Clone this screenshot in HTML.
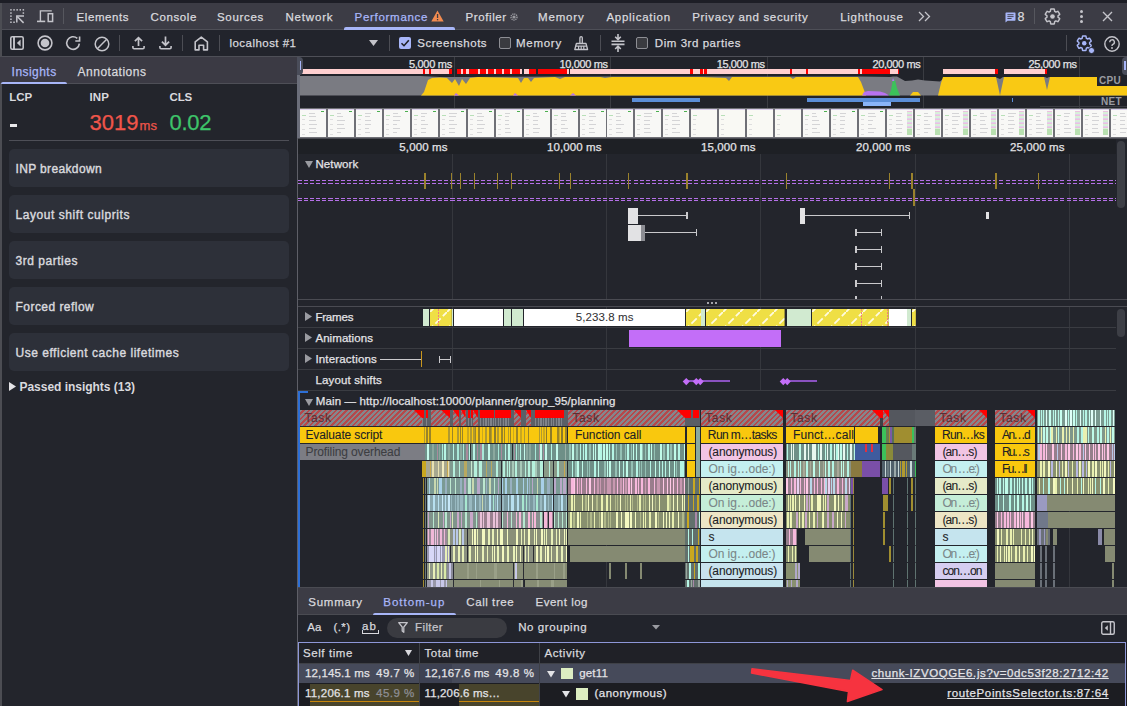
<!DOCTYPE html>
<html><head><meta charset="utf-8"><style>
html,body{margin:0;padding:0;width:1127px;height:706px;overflow:hidden;background:#23252c;}
body{position:relative;font-family:'Liberation Sans', sans-serif;}
div{position:absolute;box-sizing:border-box;}
.t{white-space:pre;line-height:1;-webkit-text-stroke:0.25px currentColor;}
svg{position:absolute;overflow:visible;}
</style></head><body>
<div style="left:0px;top:0px;width:1127px;height:3px;background:#1d1e26;"></div>
<div style="left:0px;top:3px;width:1127px;height:26px;background:#3c3c45;"></div>
<div style="left:0px;top:29px;width:1127px;height:1px;background:#4e4f57;"></div>
<div style="left:0px;top:30px;width:1127px;height:26px;background:#22242c;"></div>
<div style="left:0px;top:56px;width:1127px;height:1px;background:#4e4f57;"></div>
<div class="t" style="left:76.50px;top:12.07px;font-size:11.5px;color:#d9d9de;font-weight:normal;letter-spacing:0.595px;">Elements</div>
<div class="t" style="left:150.50px;top:12.07px;font-size:11.5px;color:#d9d9de;font-weight:normal;letter-spacing:0.614px;">Console</div>
<div class="t" style="left:217.00px;top:12.07px;font-size:11.5px;color:#d9d9de;font-weight:normal;letter-spacing:0.688px;">Sources</div>
<div class="t" style="left:285.40px;top:12.07px;font-size:11.5px;color:#d9d9de;font-weight:normal;letter-spacing:0.830px;">Network</div>
<div class="t" style="left:465.50px;top:12.07px;font-size:11.5px;color:#d9d9de;font-weight:normal;letter-spacing:0.608px;">Profiler</div>
<div class="t" style="left:538.00px;top:12.07px;font-size:11.5px;color:#d9d9de;font-weight:normal;letter-spacing:0.828px;">Memory</div>
<div class="t" style="left:606.40px;top:12.07px;font-size:11.5px;color:#d9d9de;font-weight:normal;letter-spacing:0.739px;">Application</div>
<div class="t" style="left:692.30px;top:12.07px;font-size:11.5px;color:#d9d9de;font-weight:normal;letter-spacing:0.655px;">Privacy and security</div>
<div class="t" style="left:840.20px;top:12.07px;font-size:11.5px;color:#d9d9de;font-weight:normal;letter-spacing:0.722px;">Lighthouse</div>
<div class="t" style="left:354.50px;top:12.07px;font-size:11.5px;color:#a8b6f8;font-weight:normal;letter-spacing:0.714px;">Performance</div>
<div style="left:344px;top:27px;width:111px;height:3px;background:#a8b6f8;border-radius:2px 2px 0 0;"></div>
<svg style="left:431px;top:10px" width="13" height="12" viewBox="0 0 13 12"><path d="M6.5 0.5 L12.7 11.5 L0.3 11.5 Z" fill="#f28b50"/><rect x="5.9" y="4" width="1.3" height="4" fill="#3b3b42"/><rect x="5.9" y="9" width="1.3" height="1.3" fill="#3b3b42"/></svg>
<svg style="left:510px;top:13px" width="8" height="8" viewBox="0 0 8 8"><circle cx="4" cy="4" r="3" fill="none" stroke="#9a9aa0" stroke-width="1.4" stroke-dasharray="1.2 0.8"/><circle cx="4" cy="4" r="1.6" fill="#9a9aa0"/></svg>
<svg style="left:918px;top:11px" width="13" height="11" viewBox="0 0 13 11"><path d="M1 1 L5.5 5.5 L1 10 M7 1 L11.5 5.5 L7 10" fill="none" stroke="#c4c4ca" stroke-width="1.3"/></svg>
<svg style="left:0;top:0" width="60" height="30" viewBox="0 0 60 30"><g fill="#c4c4ca"><rect x="10.20" y="9.10" width="1.5" height="1.5"/><rect x="13.30" y="9.10" width="1.5" height="1.5"/><rect x="16.40" y="9.10" width="1.5" height="1.5"/><rect x="19.50" y="9.10" width="1.5" height="1.5"/><rect x="22.60" y="9.10" width="1.5" height="1.5"/><rect x="10.20" y="12.30" width="1.5" height="1.5"/><rect x="22.60" y="12.30" width="1.5" height="1.5"/><rect x="10.20" y="15.40" width="1.5" height="1.5"/><rect x="10.20" y="18.50" width="1.5" height="1.5"/><rect x="10.20" y="21.50" width="1.5" height="1.5"/><rect x="13.30" y="21.50" width="1.5" height="1.5"/></g><path d="M16.8 22.6 V16.1 H24" fill="none" stroke="#c4c4ca" stroke-width="1.5"/><path d="M17.2 16.5 L23.6 22.9" stroke="#c4c4ca" stroke-width="1.5"/><path d="M51.8 10.9 H40.4 V21.4" fill="none" stroke="#c4c4ca" stroke-width="1.4"/><path d="M37 21.4 H45.2" stroke="#c4c4ca" stroke-width="1.6"/><rect x="48.2" y="13.7" width="4.4" height="7.8" fill="none" stroke="#c4c4ca" stroke-width="1.5"/></svg>
<div style="left:63px;top:8px;width:1px;height:16px;background:#56575e;"></div>
<svg style="left:1004.5px;top:12px" width="11" height="11" viewBox="0 0 11 11"><path d="M1.2 0.5 H9.8 Q10.5 0.5 10.5 1.2 V8 Q10.5 8.7 9.8 8.7 H2.6 L0.5 10.6 V1.2 Q0.5 0.5 1.2 0.5Z" fill="#a8b6f8"/><path d="M2.4 2.7 H8.6 M2.4 4.6 H8.6 M2.4 6.5 H6.6" stroke="#3c3c45" stroke-width="0.9"/></svg>
<div class="t" style="left:1017.50px;top:11.42px;font-size:12.5px;color:#d9d9de;font-weight:normal;letter-spacing:0.000px;">8</div>
<div style="left:1034px;top:8px;width:1px;height:16px;background:#56575e;"></div>
<svg style="left:1045.3px;top:8.8px" width="15" height="15" viewBox="2.3 2.3 19.4 19.4"><path d="M19.14,12.94c0.04-0.3,0.06-0.61,0.06-0.94c0-0.32-0.02-0.64-0.07-0.94l2.03-1.58c0.18-0.14,0.23-0.41,0.12-0.61l-1.92-3.32c-0.12-0.22-0.37-0.29-0.59-0.22l-2.39,0.96c-0.5-0.38-1.03-0.7-1.62-0.94L14.4,2.81c-0.04-0.24-0.24-0.41-0.48-0.41h-3.84c-0.24,0-0.43,0.17-0.47,0.41L9.25,5.35C8.66,5.59,8.12,5.92,7.63,6.29L5.24,5.33c-0.22-0.08-0.47,0-0.59,0.22L2.74,8.870C2.62,9.08,2.66,9.34,2.86,9.48l2.03,1.58C4.84,11.36,4.8,11.69,4.8,12s0.02,0.64,0.07,0.94l-2.03,1.58c-0.18,0.14-0.23,0.41-0.12,0.61l1.92,3.32c0.12,0.22,0.37,0.29,0.59,0.22l2.39-0.96c0.5,0.38,1.03,0.7,1.62,0.94l0.36,2.54c0.05,0.24,0.24,0.41,0.48,0.41h3.84c0.24,0,0.44-0.17,0.47-0.41l0.36-2.54c0.59-0.24,1.130-0.56,1.62-0.94l2.39,0.96c0.22,0.08,0.47,0,0.59-0.22l1.92-3.32c0.12-0.22,0.07-0.47-0.12-0.61L19.14,12.94z" fill="none" stroke="#c4c4ca" stroke-width="1.9" stroke-linejoin="round"/><circle cx="12" cy="12" r="3" fill="#c4c4ca"/></svg>
<div style="left:1079.5px;top:10px;width:3px;height:3px;background:#c4c4ca;border-radius:50%;"></div>
<div style="left:1079.5px;top:15px;width:3px;height:3px;background:#c4c4ca;border-radius:50%;"></div>
<div style="left:1079.5px;top:20px;width:3px;height:3px;background:#c4c4ca;border-radius:50%;"></div>
<svg style="left:1102px;top:11px" width="11" height="11" viewBox="0 0 11 11"><path d="M1 1 L10 10 M10 1 L1 10" stroke="#c4c4ca" stroke-width="1.4"/></svg>
<svg style="left:10px;top:36px" width="14" height="14" viewBox="0 0 14 14"><rect x="0.8" y="0.8" width="12.4" height="12.4" rx="1.5" fill="none" stroke="#c4c4ca" stroke-width="1.6"/><path d="M4 1 V13" stroke="#c4c4ca" stroke-width="1.9"/><path d="M10.6 3.6 L6.9 7 L10.6 10.4Z" fill="#c4c4ca"/></svg>
<svg style="left:37.3px;top:35.3px" width="16" height="16" viewBox="0 0 16 16"><circle cx="8" cy="8" r="6.9" fill="none" stroke="#c4c4ca" stroke-width="1.6"/><circle cx="8" cy="8" r="4.3" fill="#c4c4ca"/></svg>
<svg style="left:65px;top:35px" width="16" height="16" viewBox="0 0 16 16"><path d="M14.33 8.6 A6.3 6.3 0 1 1 12.3 3.4" fill="none" stroke="#c4c4ca" stroke-width="1.6"/><path d="M10.3 6 H14.6 V1.4" fill="none" stroke="#c4c4ca" stroke-width="1.6"/></svg>
<svg style="left:93.5px;top:35.5px" width="16" height="16" viewBox="0 0 16 16"><circle cx="8" cy="8" r="6.8" fill="none" stroke="#c4c4ca" stroke-width="1.5"/><path d="M3.3 12.7 L12.7 3.3" stroke="#c4c4ca" stroke-width="1.5"/></svg>
<div style="left:119px;top:35px;width:1px;height:16px;background:#4c4d54;"></div>
<svg style="left:132px;top:36px" width="13" height="14" viewBox="0 0 13 14"><path d="M6.5 10 V1.8 M2.9 5.2 L6.5 1.6 L10.1 5.2" fill="none" stroke="#c4c4ca" stroke-width="1.7"/><path d="M0.9 10 V11.6 Q0.9 12.8 2.1 12.8 H10.9 Q12.1 12.8 12.1 11.6 V10" fill="none" stroke="#c4c4ca" stroke-width="1.6"/></svg>
<svg style="left:158.8px;top:36px" width="13" height="14" viewBox="0 0 13 14"><path d="M6.5 0.6 V9 M2.9 5.6 L6.5 9.2 L10.1 5.6" fill="none" stroke="#c4c4ca" stroke-width="1.7"/><path d="M0.9 10 V11.6 Q0.9 12.8 2.1 12.8 H10.9 Q12.1 12.8 12.1 11.6 V10" fill="none" stroke="#c4c4ca" stroke-width="1.6"/></svg>
<div style="left:182px;top:35px;width:1px;height:16px;background:#4c4d54;"></div>
<svg style="left:194px;top:35.5px" width="15" height="15" viewBox="0 0 15 15"><path d="M1.2 13.9 V5.8 L7.3 1.1 L13.4 5.8 V13.9 H9.6 V9.2 H5 V13.9 Z" fill="none" stroke="#c4c4ca" stroke-width="1.6" stroke-linejoin="round"/></svg>
<div style="left:218.5px;top:35px;width:1px;height:16px;background:#4c4d54;"></div>
<div class="t" style="left:229.50px;top:38.17px;font-size:11.5px;color:#d9d9de;font-weight:normal;letter-spacing:0.460px;">localhost #1</div>
<svg style="left:369px;top:40px" width="9" height="6" viewBox="0 0 9 6"><path d="M0 0 H9 L4.5 6Z" fill="#c4c4ca"/></svg>
<div style="left:388.5px;top:35px;width:1px;height:16px;background:#4c4d54;"></div>
<svg style="left:399px;top:37px" width="12" height="12" viewBox="0 0 12 12"><rect x="0" y="0" width="12" height="12" rx="2" fill="#a8b6f8"/><path d="M2.5 6.2 L5 8.7 L9.8 3.2" fill="none" stroke="#1e1f25" stroke-width="1.6"/></svg>
<div class="t" style="left:417.20px;top:38.17px;font-size:11.5px;color:#d9d9de;font-weight:normal;letter-spacing:0.551px;">Screenshots</div>
<div style="left:498.5px;top:37px;width:12px;height:12px;background:#3a3b40;border:1.3px solid #8d8e94;border-radius:2px;"></div>
<div class="t" style="left:516.00px;top:38.17px;font-size:11.5px;color:#d9d9de;font-weight:normal;letter-spacing:0.728px;">Memory</div>
<svg style="left:574px;top:36px" width="15" height="15" viewBox="0 0 15 15"><path d="M5.9 7.3 V1.7 Q5.9 0.6 7.1 0.6 Q8.3 0.6 8.3 1.7 V7.3" fill="none" stroke="#c4c4ca" stroke-width="1.3"/><path d="M2.4 7.5 H12 L13.6 13.5 H0.8 Z" fill="none" stroke="#c4c4ca" stroke-width="1.3" stroke-linejoin="round"/><path d="M1.6 10.2 H12.8 M4.6 10.4 V13.4 M7.2 10.4 V13.4 M9.8 10.4 V13.4" stroke="#c4c4ca" stroke-width="1.2"/></svg>
<div style="left:599.5px;top:35px;width:1px;height:16px;background:#4c4d54;"></div>
<svg style="left:610.5px;top:34px" width="14" height="18" viewBox="0 0 14 18"><path d="M0.5 7.2 H13.5 M0.5 10.4 H13.5" stroke="#c4c4ca" stroke-width="1.6"/><path d="M7 0 V5.2 M4.2 2.8 L7 5.6 L9.8 2.8 M7 18 V12.4 M4.2 15 L7 12.2 L9.8 15" fill="none" stroke="#c4c4ca" stroke-width="1.6"/></svg>
<div style="left:636px;top:37px;width:12px;height:12px;background:#3a3b40;border:1.3px solid #8d8e94;border-radius:2px;"></div>
<div class="t" style="left:654.80px;top:38.17px;font-size:11.5px;color:#d9d9de;font-weight:normal;letter-spacing:0.549px;">Dim 3rd parties</div>
<div style="left:1066px;top:35px;width:1px;height:16px;background:#4c4d54;"></div>
<svg style="left:1077.3px;top:35.8px" width="14.5" height="14.5" viewBox="2.3 2.3 19.4 19.4"><path d="M19.14,12.94c0.04-0.3,0.06-0.61,0.06-0.94c0-0.32-0.02-0.64-0.07-0.94l2.03-1.58c0.18-0.14,0.23-0.41,0.12-0.61l-1.92-3.32c-0.12-0.22-0.37-0.29-0.59-0.22l-2.39,0.96c-0.5-0.38-1.03-0.7-1.62-0.94L14.4,2.81c-0.04-0.24-0.24-0.41-0.48-0.41h-3.84c-0.24,0-0.43,0.17-0.47,0.41L9.25,5.35C8.66,5.59,8.12,5.92,7.63,6.29L5.24,5.33c-0.22-0.08-0.47,0-0.59,0.22L2.74,8.870C2.62,9.08,2.66,9.34,2.86,9.48l2.03,1.58C4.84,11.36,4.8,11.69,4.8,12s0.02,0.64,0.07,0.94l-2.03,1.58c-0.18,0.14-0.23,0.41-0.12,0.61l1.92,3.32c0.12,0.22,0.37,0.29,0.59,0.22l2.39-0.96c0.5,0.38,1.03,0.7,1.62,0.94l0.36,2.54c0.05,0.24,0.24,0.41,0.48,0.41h3.84c0.24,0,0.44-0.17,0.47-0.41l0.36-2.54c0.59-0.24,1.130-0.56,1.62-0.94l2.39,0.96c0.22,0.08,0.47,0,0.59-0.22l1.92-3.32c0.12-0.22,0.07-0.47-0.12-0.61L19.14,12.94z" fill="none" stroke="#a8b6f8" stroke-width="1.9" stroke-linejoin="round"/><circle cx="12" cy="12" r="3" fill="#a8b6f8"/></svg>
<div style="left:1088.3px;top:47.3px;width:6.5px;height:6.5px;background:#a8b6f8;border-radius:50%;border:1.2px solid #22242c;"></div>
<svg style="left:1103.5px;top:35.5px" width="16" height="16" viewBox="0 0 16 16"><circle cx="8" cy="8" r="7.2" fill="none" stroke="#c4c4ca" stroke-width="1.4"/><path d="M5.8 6.2 A2.3 2.3 0 1 1 8.8 8.3 C8.1 8.6 8 9 8 10" fill="none" stroke="#c4c4ca" stroke-width="1.4"/><circle cx="8" cy="12" r="0.9" fill="#c4c4ca"/></svg>
<div style="left:0px;top:3px;width:1.5px;height:703px;background:#4c4d53;"></div>
<div style="left:0px;top:57px;width:297px;height:26px;background:#3b3a44;"></div>
<div style="left:0px;top:83px;width:297px;height:1px;background:#4e4f57;"></div>
<div class="t" style="left:11.60px;top:65.84px;font-size:12px;color:#a8b6f8;font-weight:normal;letter-spacing:0.455px;">Insights</div>
<div style="left:1px;top:82px;width:66px;height:2px;background:#a8b6f8;border-radius:2px 2px 0 0;"></div>
<div class="t" style="left:77.60px;top:65.84px;font-size:12px;color:#d9d9de;font-weight:normal;letter-spacing:0.492px;">Annotations</div>
<div class="t" style="left:9.30px;top:91.87px;font-size:11.5px;color:#d9d9de;font-weight:bold;letter-spacing:-0.100px;-webkit-text-stroke:0;">LCP</div>
<div class="t" style="left:89.50px;top:91.87px;font-size:11.5px;color:#d9d9de;font-weight:bold;letter-spacing:0.109px;-webkit-text-stroke:0;">INP</div>
<div class="t" style="left:169.50px;top:91.87px;font-size:11.5px;color:#d9d9de;font-weight:bold;letter-spacing:-0.167px;-webkit-text-stroke:0;">CLS</div>
<div style="left:9.5px;top:123.5px;width:7px;height:3.5px;background:#e8e8ea;"></div>
<div class="t" style="left:89.50px;top:111.68px;font-size:22px;color:#f0554a;font-weight:normal;letter-spacing:0.012px;">3019</div>
<div class="t" style="left:139.40px;top:119.30px;font-size:13px;color:#f0554a;font-weight:normal;letter-spacing:0.228px;">ms</div>
<div class="t" style="left:169.50px;top:111.68px;font-size:22px;color:#3ec46a;font-weight:normal;letter-spacing:-0.257px;">0.02</div>
<div style="left:9px;top:140px;width:280px;height:1px;background:#4e4f57;"></div>
<div style="left:9px;top:149px;width:280px;height:38px;background:#2d3039;border-radius:5px;"></div>
<div class="t" style="left:15.50px;top:162.84px;font-size:12px;color:#d9d9de;font-weight:normal;letter-spacing:0.359px;-webkit-text-stroke:0.4px currentColor;">INP breakdown</div>
<div style="left:9px;top:195px;width:280px;height:38px;background:#2d3039;border-radius:5px;"></div>
<div class="t" style="left:15.50px;top:208.84px;font-size:12px;color:#d9d9de;font-weight:normal;letter-spacing:0.561px;-webkit-text-stroke:0.4px currentColor;">Layout shift culprits</div>
<div style="left:9px;top:241px;width:280px;height:38px;background:#2d3039;border-radius:5px;"></div>
<div class="t" style="left:15.50px;top:254.84px;font-size:12px;color:#d9d9de;font-weight:normal;letter-spacing:0.527px;-webkit-text-stroke:0.4px currentColor;">3rd parties</div>
<div style="left:9px;top:287px;width:280px;height:38px;background:#2d3039;border-radius:5px;"></div>
<div class="t" style="left:15.50px;top:300.84px;font-size:12px;color:#d9d9de;font-weight:normal;letter-spacing:0.461px;-webkit-text-stroke:0.4px currentColor;">Forced reflow</div>
<div style="left:9px;top:333px;width:280px;height:38px;background:#2d3039;border-radius:5px;"></div>
<div class="t" style="left:15.50px;top:346.84px;font-size:12px;color:#d9d9de;font-weight:normal;letter-spacing:0.524px;-webkit-text-stroke:0.4px currentColor;">Use efficient cache lifetimes</div>
<svg style="left:9px;top:381.5px" width="7" height="9" viewBox="0 0 7 9"><path d="M0 0 L7 4.5 L0 9Z" fill="#e3e3e6"/></svg>
<div class="t" style="left:19.50px;top:381.14px;font-size:12px;color:#d9d9de;font-weight:bold;letter-spacing:-0.027px;-webkit-text-stroke:0;">Passed insights (13)</div>
<div style="left:297px;top:57px;width:1.5px;height:649px;background:#5e5f67;"></div>
<div style="left:298px;top:57px;width:829px;height:81px;background:#21232a;"></div>
<div style="left:454px;top:57px;width:1px;height:81px;background:#3a3c42;"></div>
<div style="left:610px;top:57px;width:1px;height:81px;background:#3a3c42;"></div>
<div style="left:767px;top:57px;width:1px;height:81px;background:#3a3c42;"></div>
<div style="left:923px;top:57px;width:1px;height:81px;background:#3a3c42;"></div>
<div style="left:1079px;top:57px;width:1px;height:81px;background:#3a3c42;"></div>
<div class="t" style="left:408.90px;top:58.69px;font-size:11px;color:#e3e3e6;font-weight:normal;letter-spacing:-0.281px;">5,000 ms</div>
<div class="t" style="left:559.60px;top:58.69px;font-size:11px;color:#e3e3e6;font-weight:normal;letter-spacing:-0.375px;">10,000 ms</div>
<div class="t" style="left:716.70px;top:58.69px;font-size:11px;color:#e3e3e6;font-weight:normal;letter-spacing:-0.375px;">15,000 ms</div>
<div class="t" style="left:872.40px;top:58.69px;font-size:11px;color:#e3e3e6;font-weight:normal;letter-spacing:-0.375px;">20,000 ms</div>
<div class="t" style="left:1028.60px;top:58.69px;font-size:11px;color:#e3e3e6;font-weight:normal;letter-spacing:-0.375px;">25,000 ms</div>
<div style="left:302px;top:69px;width:150px;height:5px;background:#ffd0d0;"></div>
<div style="left:422.6px;top:69px;width:2.6999999999999886px;height:5px;background:#ff0000;"></div>
<div style="left:428.7px;top:69px;width:2.6999999999999886px;height:5px;background:#ff0000;"></div>
<div style="left:449px;top:69px;width:3px;height:5px;background:#ff0000;"></div>
<div style="left:457px;top:69px;width:65px;height:5px;background:#ffd0d0;"></div>
<div style="left:457px;top:69px;width:4px;height:5px;background:#ff0000;"></div>
<div style="left:463px;top:69px;width:3px;height:5px;background:#ff0000;"></div>
<div style="left:469px;top:69px;width:9px;height:5px;background:#ff0000;"></div>
<div style="left:480px;top:69px;width:6px;height:5px;background:#ff0000;"></div>
<div style="left:488px;top:69px;width:6px;height:5px;background:#ff0000;"></div>
<div style="left:496px;top:69px;width:6px;height:5px;background:#ff0000;"></div>
<div style="left:504px;top:69px;width:6px;height:5px;background:#ff0000;"></div>
<div style="left:512px;top:69px;width:8px;height:5px;background:#ff0000;"></div>
<div style="left:524px;top:69px;width:12px;height:5px;background:#ffd0d0;"></div>
<div style="left:529px;top:69px;width:7px;height:5px;background:#ff0000;"></div>
<div style="left:538px;top:69px;width:31px;height:5px;background:#ffd0d0;"></div>
<div style="left:538px;top:69px;width:29px;height:5px;background:#ff0000;"></div>
<div style="left:570px;top:69px;width:288px;height:5px;background:#ffd0d0;"></div>
<div style="left:690px;top:69px;width:3px;height:5px;background:#ff0000;"></div>
<div style="left:700px;top:69px;width:3px;height:5px;background:#ff0000;"></div>
<div style="left:704px;top:69px;width:3px;height:5px;background:#ff0000;"></div>
<div style="left:790px;top:69px;width:2px;height:5px;background:#ff0000;"></div>
<div style="left:806px;top:69px;width:2px;height:5px;background:#ff0000;"></div>
<div style="left:858px;top:69px;width:41px;height:5px;background:#ffd0d0;"></div>
<div style="left:858px;top:69px;width:2px;height:5px;background:#ff0000;"></div>
<div style="left:862px;top:69px;width:28px;height:5px;background:#ff0000;"></div>
<div style="left:898px;top:69px;width:1px;height:5px;background:#ff0000;"></div>
<div style="left:943px;top:69px;width:55px;height:5px;background:#ffd0d0;"></div>
<div style="left:995px;top:69px;width:3px;height:5px;background:#ff0000;"></div>
<div style="left:1004px;top:69px;width:43px;height:5px;background:#ffd0d0;"></div>
<div style="left:1045px;top:69px;width:2px;height:5px;background:#ff0000;"></div>
<svg style="left:298px;top:57px" width="829" height="81" viewBox="0 0 829 81"><polygon points="2.0,19.0 122.0,19.0 142.0,20.0 172.0,20.0 302.0,19.5 462.0,19.5 560.0,19.5 592.0,20.0 595.0,19.5 599.0,19.5 607.0,24.0 614.0,23.5 620.0,22.5 627.0,23.5 642.0,24.5 647.0,20.0 697.0,20.0 702.0,22.0 705.0,20.0 747.0,20.0 749.0,21.0 751.0,20.0 829.0,20.0 829.0,38.5 2.0,38.5" fill="#7a7b82"/></svg>
<svg style="left:298px;top:57px" width="829" height="81" viewBox="0 0 829 81"><polygon points="123.0,38.5 126.0,35.0 130.0,23.0 134.0,21.0 142.0,20.5 149.0,21.0 154.0,26.0 157.0,22.0 161.0,29.0 164.0,22.0 168.0,27.0 172.0,21.0 180.0,20.0 220.0,21.0 223.0,26.0 226.0,21.0 230.0,21.0 233.0,25.0 236.0,21.0 257.0,20.0 262.0,22.0 267.0,20.0 302.0,20.0 307.0,21.0 314.0,20.0 402.0,20.0 428.0,21.0 431.0,24.0 434.0,20.0 492.0,20.0 495.0,22.0 498.0,20.0 560.0,20.0 563.0,25.0 566.0,33.0 568.0,38.5" fill="#f9c914"/></svg>
<svg style="left:298px;top:57px" width="829" height="81" viewBox="0 0 829 81"><polygon points="640.0,38.5 643.0,26.0 645.0,20.0 698.0,20.0 700.0,29.0 702.0,38.5 704.0,29.0 706.0,20.0 746.0,20.0 749.0,33.0 752.0,20.0 829.0,20.0 829.0,38.5" fill="#f9c914"/></svg>
<svg style="left:298px;top:57px" width="829" height="81" viewBox="0 0 829 81"><polygon points="564.0,38.5 566.0,35.0 570.0,34.0 582.0,34.5 587.0,36.0 591.0,38.5" fill="#b872f0"/></svg>
<svg style="left:298px;top:57px" width="829" height="81" viewBox="0 0 829 81"><polygon points="591.0,38.5 593.0,33.0 595.0,22.0 597.0,23.0 599.0,31.0 602.0,38.5" fill="#3cc15a"/></svg>
<svg style="left:298px;top:57px" width="829" height="81" viewBox="0 0 829 81"><polygon points="594.0,24.0 595.0,21.0 596.5,24.0" fill="#b872f0"/></svg>
<svg style="left:298px;top:57px" width="829" height="81" viewBox="0 0 829 81"><polygon points="612.0,38.5 615.0,35.0 620.0,35.0 623.0,38.5" fill="#f9c914"/></svg>
<svg style="left:298px;top:57px" width="829" height="81" viewBox="0 0 829 81"><polygon points="156.0,38.5 158.0,36.0 161.0,38.5" fill="#b872f0"/></svg>
<svg style="left:298px;top:57px" width="829" height="81" viewBox="0 0 829 81"><polygon points="215.0,38.5 217.0,36.0 220.0,38.5" fill="#b872f0"/></svg>
<svg style="left:298px;top:57px" width="829" height="81" viewBox="0 0 829 81"><polygon points="272.0,38.5 275.0,36.0 278.0,38.5" fill="#b872f0"/></svg>
<div style="left:1097px;top:76px;width:30px;height:9.5px;background:#21232a;"></div>
<div class="t" style="left:1099.00px;top:76.03px;font-size:10px;color:#9a9ba1;font-weight:bold;letter-spacing:0.292px;-webkit-text-stroke:0;">CPU</div>
<div style="left:632px;top:98px;width:68px;height:4px;background:#5b8ed8;"></div>
<div style="left:807px;top:98px;width:113px;height:4px;background:#5b8ed8;"></div>
<div style="left:863px;top:102px;width:28px;height:3.7px;background:#8ab4f8;"></div>
<div style="left:1012px;top:98px;width:1px;height:4px;background:#5b8ed8;"></div>
<div style="left:1040px;top:106px;width:87px;height:1px;background:#3a3c42;"></div>
<div class="t" style="left:1101.00px;top:97.03px;font-size:10px;color:#9a9ba1;font-weight:bold;letter-spacing:0.333px;-webkit-text-stroke:0;">NET</div>
<div style="left:298px;top:108px;width:829px;height:30px;background:#6f7076;"></div>
<div style="left:300.0px;top:108.5px;width:26px;height:28.5px;background:#f8f8f6;"></div>
<div style="left:300.0px;top:108.5px;width:26px;height:1px;background:#d8cdea;"></div>
<div style="left:302.0px;top:115px;width:4px;height:1px;background:#b8e0b8;"></div>
<div style="left:302.0px;top:119px;width:3px;height:1px;background:#dedede;"></div>
<div style="left:302.0px;top:124px;width:3px;height:1px;background:#dedede;"></div>
<div style="left:302.0px;top:129px;width:3px;height:1px;background:#dedede;"></div>
<div style="left:302.0px;top:134px;width:3px;height:1px;background:#dedede;"></div>
<div style="left:309.0px;top:112.5px;width:6.491606779558808px;height:1px;background:#d4d4d6;"></div>
<div style="left:309.0px;top:116.3px;width:6.967147957042918px;height:1px;background:#d4d4d6;"></div>
<div style="left:309.0px;top:120.1px;width:7.180774262262787px;height:1px;background:#d4d4d6;"></div>
<div style="left:309.0px;top:123.9px;width:7.769801135108201px;height:1px;background:#d4d4d6;"></div>
<div style="left:309.0px;top:127.7px;width:6.959594298959723px;height:1px;background:#d4d4d6;"></div>
<div style="left:309.0px;top:131.5px;width:7.689299986661668px;height:1px;background:#d4d4d6;"></div>
<div style="left:321.0px;top:110.5px;width:3px;height:1.5px;background:#4caf50;"></div>
<div style="left:327.95px;top:108.5px;width:26px;height:28.5px;background:#f8f8f6;"></div>
<div style="left:327.95px;top:108.5px;width:26px;height:1px;background:#d8cdea;"></div>
<div style="left:329.95px;top:115px;width:4px;height:1px;background:#b8e0b8;"></div>
<div style="left:329.95px;top:119px;width:3px;height:1px;background:#dedede;"></div>
<div style="left:329.95px;top:124px;width:3px;height:1px;background:#dedede;"></div>
<div style="left:329.95px;top:129px;width:3px;height:1px;background:#dedede;"></div>
<div style="left:329.95px;top:134px;width:3px;height:1px;background:#dedede;"></div>
<div style="left:336.95px;top:112.5px;width:4.116020913134459px;height:1px;background:#d4d4d6;"></div>
<div style="left:336.95px;top:116.3px;width:5.862490617512421px;height:1px;background:#d4d4d6;"></div>
<div style="left:336.95px;top:120.1px;width:7.773426867993255px;height:1px;background:#d4d4d6;"></div>
<div style="left:336.95px;top:123.9px;width:6.595898212547697px;height:1px;background:#d4d4d6;"></div>
<div style="left:336.95px;top:127.7px;width:7.603601967002491px;height:1px;background:#d4d4d6;"></div>
<div style="left:336.95px;top:131.5px;width:4.452823858612577px;height:1px;background:#d4d4d6;"></div>
<div style="left:348.95px;top:110.5px;width:3px;height:1.5px;background:#4caf50;"></div>
<div style="left:355.9px;top:108.5px;width:26px;height:28.5px;background:#f8f8f6;"></div>
<div style="left:355.9px;top:108.5px;width:26px;height:1px;background:#d8cdea;"></div>
<div style="left:357.9px;top:115px;width:4px;height:1px;background:#b8e0b8;"></div>
<div style="left:357.9px;top:119px;width:3px;height:1px;background:#dedede;"></div>
<div style="left:357.9px;top:124px;width:3px;height:1px;background:#dedede;"></div>
<div style="left:357.9px;top:129px;width:3px;height:1px;background:#dedede;"></div>
<div style="left:357.9px;top:134px;width:3px;height:1px;background:#dedede;"></div>
<div style="left:364.9px;top:112.5px;width:5.876276191128655px;height:1px;background:#d4d4d6;"></div>
<div style="left:364.9px;top:116.3px;width:4.986291330479322px;height:1px;background:#d4d4d6;"></div>
<div style="left:364.9px;top:120.1px;width:6.175043436943722px;height:1px;background:#d4d4d6;"></div>
<div style="left:364.9px;top:123.9px;width:6.295764751712403px;height:1px;background:#d4d4d6;"></div>
<div style="left:364.9px;top:127.7px;width:4.052456758355609px;height:1px;background:#d4d4d6;"></div>
<div style="left:364.9px;top:131.5px;width:4.866919201855392px;height:1px;background:#d4d4d6;"></div>
<div style="left:376.9px;top:110.5px;width:3px;height:1.5px;background:#4caf50;"></div>
<div style="left:383.85px;top:108.5px;width:26px;height:28.5px;background:#f8f8f6;"></div>
<div style="left:383.85px;top:108.5px;width:26px;height:1px;background:#d8cdea;"></div>
<div style="left:385.85px;top:115px;width:4px;height:1px;background:#b8e0b8;"></div>
<div style="left:385.85px;top:119px;width:3px;height:1px;background:#dedede;"></div>
<div style="left:385.85px;top:124px;width:3px;height:1px;background:#dedede;"></div>
<div style="left:385.85px;top:129px;width:3px;height:1px;background:#dedede;"></div>
<div style="left:385.85px;top:134px;width:3px;height:1px;background:#dedede;"></div>
<div style="left:392.85px;top:112.5px;width:5.117929464044441px;height:1px;background:#d4d4d6;"></div>
<div style="left:392.85px;top:116.3px;width:7.665381487234208px;height:1px;background:#d4d4d6;"></div>
<div style="left:392.85px;top:120.1px;width:7.062901806516567px;height:1px;background:#d4d4d6;"></div>
<div style="left:392.85px;top:123.9px;width:4.6384168494321525px;height:1px;background:#d4d4d6;"></div>
<div style="left:392.85px;top:127.7px;width:7.1885879657248175px;height:1px;background:#d4d4d6;"></div>
<div style="left:392.85px;top:131.5px;width:4.555069673595613px;height:1px;background:#d4d4d6;"></div>
<div style="left:404.85px;top:110.5px;width:3px;height:1.5px;background:#4caf50;"></div>
<div style="left:411.8px;top:108.5px;width:26px;height:28.5px;background:#f8f8f6;"></div>
<div style="left:411.8px;top:108.5px;width:26px;height:1px;background:#d8cdea;"></div>
<div style="left:413.8px;top:115px;width:4px;height:1px;background:#b8e0b8;"></div>
<div style="left:413.8px;top:119px;width:3px;height:1px;background:#dedede;"></div>
<div style="left:413.8px;top:124px;width:3px;height:1px;background:#dedede;"></div>
<div style="left:413.8px;top:129px;width:3px;height:1px;background:#dedede;"></div>
<div style="left:413.8px;top:134px;width:3px;height:1px;background:#dedede;"></div>
<div style="left:420.8px;top:112.5px;width:6.469810081864466px;height:1px;background:#d4d4d6;"></div>
<div style="left:420.8px;top:116.3px;width:4.506796930201078px;height:1px;background:#d4d4d6;"></div>
<div style="left:420.8px;top:120.1px;width:4.007099448810139px;height:1px;background:#d4d4d6;"></div>
<div style="left:420.8px;top:123.9px;width:7.485618978897128px;height:1px;background:#d4d4d6;"></div>
<div style="left:420.8px;top:127.7px;width:4.8378255299804716px;height:1px;background:#d4d4d6;"></div>
<div style="left:420.8px;top:131.5px;width:4.861924676898929px;height:1px;background:#d4d4d6;"></div>
<div style="left:432.8px;top:110.5px;width:3px;height:1.5px;background:#4caf50;"></div>
<div style="left:439.75px;top:108.5px;width:26px;height:28.5px;background:#f8f8f6;"></div>
<div style="left:439.75px;top:108.5px;width:26px;height:1px;background:#d8cdea;"></div>
<div style="left:441.75px;top:115px;width:4px;height:1px;background:#b8e0b8;"></div>
<div style="left:441.75px;top:119px;width:3px;height:1px;background:#dedede;"></div>
<div style="left:441.75px;top:124px;width:3px;height:1px;background:#dedede;"></div>
<div style="left:441.75px;top:129px;width:3px;height:1px;background:#dedede;"></div>
<div style="left:441.75px;top:134px;width:3px;height:1px;background:#dedede;"></div>
<div style="left:448.75px;top:112.5px;width:7.929684435303701px;height:1px;background:#d4d4d6;"></div>
<div style="left:448.75px;top:116.3px;width:7.4896310617472075px;height:1px;background:#d4d4d6;"></div>
<div style="left:448.75px;top:120.1px;width:5.157220670987706px;height:1px;background:#d4d4d6;"></div>
<div style="left:448.75px;top:123.9px;width:7.845911955800334px;height:1px;background:#d4d4d6;"></div>
<div style="left:448.75px;top:127.7px;width:6.1568938754832425px;height:1px;background:#d4d4d6;"></div>
<div style="left:448.75px;top:131.5px;width:6.711321909002369px;height:1px;background:#d4d4d6;"></div>
<div style="left:460.75px;top:110.5px;width:3px;height:1.5px;background:#4caf50;"></div>
<div style="left:467.7px;top:108.5px;width:26px;height:28.5px;background:#f8f8f6;"></div>
<div style="left:467.7px;top:108.5px;width:26px;height:1px;background:#d8cdea;"></div>
<div style="left:469.7px;top:115px;width:4px;height:1px;background:#b8e0b8;"></div>
<div style="left:469.7px;top:119px;width:3px;height:1px;background:#dedede;"></div>
<div style="left:469.7px;top:124px;width:3px;height:1px;background:#dedede;"></div>
<div style="left:469.7px;top:129px;width:3px;height:1px;background:#dedede;"></div>
<div style="left:469.7px;top:134px;width:3px;height:1px;background:#dedede;"></div>
<div style="left:476.7px;top:112.5px;width:4.819118058135171px;height:1px;background:#d4d4d6;"></div>
<div style="left:476.7px;top:116.3px;width:7.763904004351996px;height:1px;background:#d4d4d6;"></div>
<div style="left:476.7px;top:120.1px;width:6.762567764427633px;height:1px;background:#d4d4d6;"></div>
<div style="left:476.7px;top:123.9px;width:7.866257249268782px;height:1px;background:#d4d4d6;"></div>
<div style="left:476.7px;top:127.7px;width:7.5749667103059135px;height:1px;background:#d4d4d6;"></div>
<div style="left:476.7px;top:131.5px;width:5.195155591415471px;height:1px;background:#d4d4d6;"></div>
<div style="left:488.7px;top:110.5px;width:3px;height:1.5px;background:#4caf50;"></div>
<div style="left:495.65px;top:108.5px;width:26px;height:28.5px;background:#f8f8f6;"></div>
<div style="left:495.65px;top:108.5px;width:26px;height:1px;background:#d8cdea;"></div>
<div style="left:497.65px;top:115px;width:4px;height:1px;background:#b8e0b8;"></div>
<div style="left:497.65px;top:119px;width:3px;height:1px;background:#dedede;"></div>
<div style="left:497.65px;top:124px;width:3px;height:1px;background:#dedede;"></div>
<div style="left:497.65px;top:129px;width:3px;height:1px;background:#dedede;"></div>
<div style="left:497.65px;top:134px;width:3px;height:1px;background:#dedede;"></div>
<div style="left:504.65px;top:112.5px;width:5.444759738889537px;height:1px;background:#d4d4d6;"></div>
<div style="left:504.65px;top:116.3px;width:4.663824228518982px;height:1px;background:#d4d4d6;"></div>
<div style="left:504.65px;top:120.1px;width:4.5828076381627305px;height:1px;background:#d4d4d6;"></div>
<div style="left:504.65px;top:123.9px;width:4.260558853502705px;height:1px;background:#d4d4d6;"></div>
<div style="left:504.65px;top:127.7px;width:5.20543640307785px;height:1px;background:#d4d4d6;"></div>
<div style="left:504.65px;top:131.5px;width:6.4124399896306175px;height:1px;background:#d4d4d6;"></div>
<div style="left:516.65px;top:110.5px;width:3px;height:1.5px;background:#4caf50;"></div>
<div style="left:523.6px;top:108.5px;width:26px;height:28.5px;background:#f8f8f6;"></div>
<div style="left:523.6px;top:108.5px;width:26px;height:1px;background:#d8cdea;"></div>
<div style="left:525.6px;top:115px;width:4px;height:1px;background:#b8e0b8;"></div>
<div style="left:525.6px;top:119px;width:3px;height:1px;background:#dedede;"></div>
<div style="left:525.6px;top:124px;width:3px;height:1px;background:#dedede;"></div>
<div style="left:525.6px;top:129px;width:3px;height:1px;background:#dedede;"></div>
<div style="left:525.6px;top:134px;width:3px;height:1px;background:#dedede;"></div>
<div style="left:532.6px;top:112.5px;width:4.013532477497427px;height:1px;background:#d4d4d6;"></div>
<div style="left:532.6px;top:116.3px;width:6.711736998190765px;height:1px;background:#d4d4d6;"></div>
<div style="left:532.6px;top:120.1px;width:5.351587446511461px;height:1px;background:#d4d4d6;"></div>
<div style="left:532.6px;top:123.9px;width:5.239831726412515px;height:1px;background:#d4d4d6;"></div>
<div style="left:532.6px;top:127.7px;width:7.274072298588283px;height:1px;background:#d4d4d6;"></div>
<div style="left:532.6px;top:131.5px;width:5.922980746520156px;height:1px;background:#d4d4d6;"></div>
<div style="left:544.6px;top:110.5px;width:3px;height:1.5px;background:#4caf50;"></div>
<div style="left:551.55px;top:108.5px;width:26px;height:28.5px;background:#f8f8f6;"></div>
<div style="left:551.55px;top:108.5px;width:26px;height:1px;background:#d8cdea;"></div>
<div style="left:553.55px;top:115px;width:4px;height:1px;background:#b8e0b8;"></div>
<div style="left:553.55px;top:119px;width:3px;height:1px;background:#dedede;"></div>
<div style="left:553.55px;top:124px;width:3px;height:1px;background:#dedede;"></div>
<div style="left:553.55px;top:129px;width:3px;height:1px;background:#dedede;"></div>
<div style="left:553.55px;top:134px;width:3px;height:1px;background:#dedede;"></div>
<div style="left:560.55px;top:112.5px;width:5.263172423385776px;height:1px;background:#d4d4d6;"></div>
<div style="left:560.55px;top:116.3px;width:5.924873544947456px;height:1px;background:#d4d4d6;"></div>
<div style="left:560.55px;top:120.1px;width:6.818676536563637px;height:1px;background:#d4d4d6;"></div>
<div style="left:560.55px;top:123.9px;width:4.22800371814316px;height:1px;background:#d4d4d6;"></div>
<div style="left:560.55px;top:127.7px;width:7.900398252576942px;height:1px;background:#d4d4d6;"></div>
<div style="left:560.55px;top:131.5px;width:4.091462253010883px;height:1px;background:#d4d4d6;"></div>
<div style="left:572.55px;top:110.5px;width:3px;height:1.5px;background:#4caf50;"></div>
<div style="left:579.5px;top:108.5px;width:26px;height:28.5px;background:#f8f8f6;"></div>
<div style="left:579.5px;top:108.5px;width:26px;height:1px;background:#d8cdea;"></div>
<div style="left:581.5px;top:115px;width:4px;height:1px;background:#b8e0b8;"></div>
<div style="left:581.5px;top:119px;width:3px;height:1px;background:#dedede;"></div>
<div style="left:581.5px;top:124px;width:3px;height:1px;background:#dedede;"></div>
<div style="left:581.5px;top:129px;width:3px;height:1px;background:#dedede;"></div>
<div style="left:581.5px;top:134px;width:3px;height:1px;background:#dedede;"></div>
<div style="left:588.5px;top:112.5px;width:6.999180089165093px;height:1px;background:#d4d4d6;"></div>
<div style="left:588.5px;top:116.3px;width:7.379523557552519px;height:1px;background:#d4d4d6;"></div>
<div style="left:588.5px;top:120.1px;width:4.072270141514121px;height:1px;background:#d4d4d6;"></div>
<div style="left:588.5px;top:123.9px;width:7.150953215921737px;height:1px;background:#d4d4d6;"></div>
<div style="left:588.5px;top:127.7px;width:5.464737903367443px;height:1px;background:#d4d4d6;"></div>
<div style="left:588.5px;top:131.5px;width:6.314075316227498px;height:1px;background:#d4d4d6;"></div>
<div style="left:600.5px;top:110.5px;width:3px;height:1.5px;background:#4caf50;"></div>
<div style="left:607.45px;top:108.5px;width:26px;height:28.5px;background:#f8f8f6;"></div>
<div style="left:607.45px;top:108.5px;width:26px;height:1px;background:#d8cdea;"></div>
<div style="left:609.45px;top:115px;width:4px;height:1px;background:#b8e0b8;"></div>
<div style="left:609.45px;top:119px;width:3px;height:1px;background:#dedede;"></div>
<div style="left:609.45px;top:124px;width:3px;height:1px;background:#dedede;"></div>
<div style="left:609.45px;top:129px;width:3px;height:1px;background:#dedede;"></div>
<div style="left:609.45px;top:134px;width:3px;height:1px;background:#dedede;"></div>
<div style="left:616.45px;top:112.5px;width:4.036313547278114px;height:1px;background:#d4d4d6;"></div>
<div style="left:616.45px;top:116.3px;width:4.186908474795766px;height:1px;background:#d4d4d6;"></div>
<div style="left:616.45px;top:120.1px;width:4.723677951804191px;height:1px;background:#d4d4d6;"></div>
<div style="left:616.45px;top:123.9px;width:7.820719598364665px;height:1px;background:#d4d4d6;"></div>
<div style="left:616.45px;top:127.7px;width:4.786086682052033px;height:1px;background:#d4d4d6;"></div>
<div style="left:616.45px;top:131.5px;width:7.022945649805271px;height:1px;background:#d4d4d6;"></div>
<div style="left:628.45px;top:110.5px;width:3px;height:1.5px;background:#4caf50;"></div>
<div style="left:635.4px;top:108.5px;width:26px;height:28.5px;background:#f8f8f6;"></div>
<div style="left:635.4px;top:108.5px;width:26px;height:1px;background:#d8cdea;"></div>
<div style="left:637.4px;top:115px;width:4px;height:1px;background:#b8e0b8;"></div>
<div style="left:637.4px;top:119px;width:3px;height:1px;background:#dedede;"></div>
<div style="left:637.4px;top:124px;width:3px;height:1px;background:#dedede;"></div>
<div style="left:637.4px;top:129px;width:3px;height:1px;background:#dedede;"></div>
<div style="left:637.4px;top:134px;width:3px;height:1px;background:#dedede;"></div>
<div style="left:644.4px;top:112.5px;width:7.718621278390085px;height:1px;background:#d4d4d6;"></div>
<div style="left:644.4px;top:116.3px;width:7.7681753177107975px;height:1px;background:#d4d4d6;"></div>
<div style="left:644.4px;top:120.1px;width:5.377527252212047px;height:1px;background:#d4d4d6;"></div>
<div style="left:644.4px;top:123.9px;width:5.419172820231649px;height:1px;background:#d4d4d6;"></div>
<div style="left:644.4px;top:127.7px;width:6.09880728277248px;height:1px;background:#d4d4d6;"></div>
<div style="left:644.4px;top:131.5px;width:7.102412058795981px;height:1px;background:#d4d4d6;"></div>
<div style="left:656.4px;top:110.5px;width:3px;height:1.5px;background:#4caf50;"></div>
<div style="left:663.3499999999999px;top:108.5px;width:26px;height:28.5px;background:#f8f8f6;"></div>
<div style="left:663.3499999999999px;top:108.5px;width:26px;height:1px;background:#d8cdea;"></div>
<div style="left:665.3499999999999px;top:115px;width:4px;height:1px;background:#b8e0b8;"></div>
<div style="left:665.3499999999999px;top:119px;width:3px;height:1px;background:#dedede;"></div>
<div style="left:665.3499999999999px;top:124px;width:3px;height:1px;background:#dedede;"></div>
<div style="left:665.3499999999999px;top:129px;width:3px;height:1px;background:#dedede;"></div>
<div style="left:665.3499999999999px;top:134px;width:3px;height:1px;background:#dedede;"></div>
<div style="left:672.3499999999999px;top:112.5px;width:4.432211476259331px;height:1px;background:#d4d4d6;"></div>
<div style="left:672.3499999999999px;top:116.3px;width:6.993592225938652px;height:1px;background:#d4d4d6;"></div>
<div style="left:672.3499999999999px;top:120.1px;width:7.188906710365331px;height:1px;background:#d4d4d6;"></div>
<div style="left:672.3499999999999px;top:123.9px;width:7.43877727675032px;height:1px;background:#d4d4d6;"></div>
<div style="left:672.3499999999999px;top:127.7px;width:4.14652631977131px;height:1px;background:#d4d4d6;"></div>
<div style="left:672.3499999999999px;top:131.5px;width:7.783200740168735px;height:1px;background:#d4d4d6;"></div>
<div style="left:684.3499999999999px;top:110.5px;width:3px;height:1.5px;background:#4caf50;"></div>
<div style="left:691.3px;top:108.5px;width:26px;height:28.5px;background:#f9f9f4;"></div>
<div style="left:691.3px;top:108.5px;width:26px;height:1px;background:#d8cdea;"></div>
<div style="left:693.3px;top:115px;width:4px;height:1px;background:#b8e0b8;"></div>
<div style="left:693.3px;top:119px;width:3px;height:1px;background:#dedede;"></div>
<div style="left:693.3px;top:124px;width:3px;height:1px;background:#dedede;"></div>
<div style="left:693.3px;top:129px;width:3px;height:1px;background:#dedede;"></div>
<div style="left:693.3px;top:134px;width:3px;height:1px;background:#dedede;"></div>
<div style="left:719.25px;top:108.5px;width:26px;height:28.5px;background:#f9f9f4;"></div>
<div style="left:719.25px;top:108.5px;width:26px;height:1px;background:#d8cdea;"></div>
<div style="left:721.25px;top:115px;width:4px;height:1px;background:#b8e0b8;"></div>
<div style="left:721.25px;top:119px;width:3px;height:1px;background:#dedede;"></div>
<div style="left:721.25px;top:124px;width:3px;height:1px;background:#dedede;"></div>
<div style="left:721.25px;top:129px;width:3px;height:1px;background:#dedede;"></div>
<div style="left:721.25px;top:134px;width:3px;height:1px;background:#dedede;"></div>
<div style="left:747.2px;top:108.5px;width:26px;height:28.5px;background:#f9f9f4;"></div>
<div style="left:747.2px;top:108.5px;width:26px;height:1px;background:#d8cdea;"></div>
<div style="left:749.2px;top:115px;width:4px;height:1px;background:#b8e0b8;"></div>
<div style="left:749.2px;top:119px;width:3px;height:1px;background:#dedede;"></div>
<div style="left:749.2px;top:124px;width:3px;height:1px;background:#dedede;"></div>
<div style="left:749.2px;top:129px;width:3px;height:1px;background:#dedede;"></div>
<div style="left:749.2px;top:134px;width:3px;height:1px;background:#dedede;"></div>
<div style="left:775.15px;top:108.5px;width:26px;height:28.5px;background:#f9f9f4;"></div>
<div style="left:775.15px;top:108.5px;width:26px;height:1px;background:#d8cdea;"></div>
<div style="left:777.15px;top:115px;width:4px;height:1px;background:#b8e0b8;"></div>
<div style="left:777.15px;top:119px;width:3px;height:1px;background:#dedede;"></div>
<div style="left:777.15px;top:124px;width:3px;height:1px;background:#dedede;"></div>
<div style="left:777.15px;top:129px;width:3px;height:1px;background:#dedede;"></div>
<div style="left:777.15px;top:134px;width:3px;height:1px;background:#dedede;"></div>
<div style="left:803.0999999999999px;top:108.5px;width:26px;height:28.5px;background:#f8f8f6;"></div>
<div style="left:803.0999999999999px;top:108.5px;width:26px;height:1px;background:#d8cdea;"></div>
<div style="left:805.0999999999999px;top:115px;width:4px;height:1px;background:#b8e0b8;"></div>
<div style="left:805.0999999999999px;top:119px;width:3px;height:1px;background:#dedede;"></div>
<div style="left:805.0999999999999px;top:124px;width:3px;height:1px;background:#dedede;"></div>
<div style="left:805.0999999999999px;top:129px;width:3px;height:1px;background:#dedede;"></div>
<div style="left:805.0999999999999px;top:134px;width:3px;height:1px;background:#dedede;"></div>
<div style="left:812.0999999999999px;top:112.5px;width:4.364719456687075px;height:1px;background:#d4d4d6;"></div>
<div style="left:812.0999999999999px;top:116.3px;width:5.3629621420168885px;height:1px;background:#d4d4d6;"></div>
<div style="left:812.0999999999999px;top:120.1px;width:6.443310152370497px;height:1px;background:#d4d4d6;"></div>
<div style="left:812.0999999999999px;top:123.9px;width:7.672348742133249px;height:1px;background:#d4d4d6;"></div>
<div style="left:812.0999999999999px;top:127.7px;width:5.359838106503378px;height:1px;background:#d4d4d6;"></div>
<div style="left:812.0999999999999px;top:131.5px;width:7.696790477711163px;height:1px;background:#d4d4d6;"></div>
<div style="left:824.0999999999999px;top:110.5px;width:3px;height:1.5px;background:#4caf50;"></div>
<div style="left:831.05px;top:108.5px;width:26px;height:28.5px;background:#f8f8f6;"></div>
<div style="left:831.05px;top:108.5px;width:26px;height:1px;background:#d8cdea;"></div>
<div style="left:833.05px;top:115px;width:4px;height:1px;background:#b8e0b8;"></div>
<div style="left:833.05px;top:119px;width:3px;height:1px;background:#dedede;"></div>
<div style="left:833.05px;top:124px;width:3px;height:1px;background:#dedede;"></div>
<div style="left:833.05px;top:129px;width:3px;height:1px;background:#dedede;"></div>
<div style="left:833.05px;top:134px;width:3px;height:1px;background:#dedede;"></div>
<div style="left:840.05px;top:112.5px;width:6.180576148392955px;height:1px;background:#d4d4d6;"></div>
<div style="left:840.05px;top:116.3px;width:5.249801477371628px;height:1px;background:#d4d4d6;"></div>
<div style="left:840.05px;top:120.1px;width:5.267199942653509px;height:1px;background:#d4d4d6;"></div>
<div style="left:840.05px;top:123.9px;width:4.709911102019954px;height:1px;background:#d4d4d6;"></div>
<div style="left:840.05px;top:127.7px;width:4.312784928882294px;height:1px;background:#d4d4d6;"></div>
<div style="left:840.05px;top:131.5px;width:4.595472178492994px;height:1px;background:#d4d4d6;"></div>
<div style="left:852.05px;top:110.5px;width:3px;height:1.5px;background:#4caf50;"></div>
<div style="left:859.0px;top:108.5px;width:26px;height:28.5px;background:#f8f8f6;"></div>
<div style="left:859.0px;top:108.5px;width:26px;height:1px;background:#d8cdea;"></div>
<div style="left:861.0px;top:115px;width:4px;height:1px;background:#b8e0b8;"></div>
<div style="left:861.0px;top:119px;width:3px;height:1px;background:#dedede;"></div>
<div style="left:861.0px;top:124px;width:3px;height:1px;background:#dedede;"></div>
<div style="left:861.0px;top:129px;width:3px;height:1px;background:#dedede;"></div>
<div style="left:861.0px;top:134px;width:3px;height:1px;background:#dedede;"></div>
<div style="left:868.0px;top:112.5px;width:6.756698349395501px;height:1px;background:#d4d4d6;"></div>
<div style="left:868.0px;top:116.3px;width:7.9869072581468155px;height:1px;background:#d4d4d6;"></div>
<div style="left:868.0px;top:120.1px;width:4.646117857698465px;height:1px;background:#d4d4d6;"></div>
<div style="left:868.0px;top:123.9px;width:4.194208654193825px;height:1px;background:#d4d4d6;"></div>
<div style="left:868.0px;top:127.7px;width:7.9467964351370695px;height:1px;background:#d4d4d6;"></div>
<div style="left:868.0px;top:131.5px;width:6.134122965443337px;height:1px;background:#d4d4d6;"></div>
<div style="left:880.0px;top:110.5px;width:3px;height:1.5px;background:#4caf50;"></div>
<div style="left:886.9499999999999px;top:108.5px;width:26px;height:28.5px;background:#f8f8f6;"></div>
<div style="left:886.9499999999999px;top:108.5px;width:26px;height:1px;background:#d8cdea;"></div>
<div style="left:888.9499999999999px;top:115px;width:4px;height:1px;background:#b8e0b8;"></div>
<div style="left:888.9499999999999px;top:119px;width:3px;height:1px;background:#dedede;"></div>
<div style="left:888.9499999999999px;top:124px;width:3px;height:1px;background:#dedede;"></div>
<div style="left:888.9499999999999px;top:129px;width:3px;height:1px;background:#dedede;"></div>
<div style="left:888.9499999999999px;top:134px;width:3px;height:1px;background:#dedede;"></div>
<div style="left:895.9499999999999px;top:112.5px;width:5.62355208491762px;height:1px;background:#d4d4d6;"></div>
<div style="left:895.9499999999999px;top:116.3px;width:4.94934641541715px;height:1px;background:#d4d4d6;"></div>
<div style="left:895.9499999999999px;top:120.1px;width:6.375840882773188px;height:1px;background:#d4d4d6;"></div>
<div style="left:895.9499999999999px;top:123.9px;width:7.305182047194506px;height:1px;background:#d4d4d6;"></div>
<div style="left:895.9499999999999px;top:127.7px;width:5.822660405962659px;height:1px;background:#d4d4d6;"></div>
<div style="left:895.9499999999999px;top:131.5px;width:5.687029127646357px;height:1px;background:#d4d4d6;"></div>
<div style="left:907.9499999999999px;top:110.5px;width:3px;height:1.5px;background:#4caf50;"></div>
<div style="left:906.9499999999999px;top:111px;width:5px;height:24px;background:repeating-linear-gradient(180deg,#ecc0e0 0 1.5px,#d8f0d8 1.5px 3px,#e0d0ec 3px 4px);"></div>
<div style="left:906.9499999999999px;top:129px;width:5px;height:6px;background:#b8e0b0;"></div>
<div style="left:914.9px;top:108.5px;width:26px;height:28.5px;background:#f8f8f6;"></div>
<div style="left:914.9px;top:108.5px;width:26px;height:1px;background:#d8cdea;"></div>
<div style="left:916.9px;top:115px;width:4px;height:1px;background:#b8e0b8;"></div>
<div style="left:916.9px;top:119px;width:3px;height:1px;background:#dedede;"></div>
<div style="left:916.9px;top:124px;width:3px;height:1px;background:#dedede;"></div>
<div style="left:916.9px;top:129px;width:3px;height:1px;background:#dedede;"></div>
<div style="left:916.9px;top:134px;width:3px;height:1px;background:#dedede;"></div>
<div style="left:923.9px;top:112.5px;width:4.222828924031574px;height:1px;background:#d4d4d6;"></div>
<div style="left:923.9px;top:116.3px;width:7.664277393767964px;height:1px;background:#d4d4d6;"></div>
<div style="left:923.9px;top:120.1px;width:4.130884879877103px;height:1px;background:#d4d4d6;"></div>
<div style="left:923.9px;top:123.9px;width:5.974256793683329px;height:1px;background:#d4d4d6;"></div>
<div style="left:923.9px;top:127.7px;width:7.353717124672529px;height:1px;background:#d4d4d6;"></div>
<div style="left:923.9px;top:131.5px;width:4.52228730861248px;height:1px;background:#d4d4d6;"></div>
<div style="left:935.9px;top:110.5px;width:3px;height:1.5px;background:#4caf50;"></div>
<div style="left:934.9px;top:111px;width:5px;height:24px;background:repeating-linear-gradient(180deg,#ecc0e0 0 1.5px,#d8f0d8 1.5px 3px,#e0d0ec 3px 4px);"></div>
<div style="left:934.9px;top:129px;width:5px;height:6px;background:#b8e0b0;"></div>
<div style="left:942.85px;top:108.5px;width:26px;height:28.5px;background:#f8f8f6;"></div>
<div style="left:942.85px;top:108.5px;width:26px;height:1px;background:#d8cdea;"></div>
<div style="left:944.85px;top:115px;width:4px;height:1px;background:#b8e0b8;"></div>
<div style="left:944.85px;top:119px;width:3px;height:1px;background:#dedede;"></div>
<div style="left:944.85px;top:124px;width:3px;height:1px;background:#dedede;"></div>
<div style="left:944.85px;top:129px;width:3px;height:1px;background:#dedede;"></div>
<div style="left:944.85px;top:134px;width:3px;height:1px;background:#dedede;"></div>
<div style="left:951.85px;top:112.5px;width:6.926657693506706px;height:1px;background:#d4d4d6;"></div>
<div style="left:951.85px;top:116.3px;width:7.799194250487595px;height:1px;background:#d4d4d6;"></div>
<div style="left:951.85px;top:120.1px;width:6.521597173705578px;height:1px;background:#d4d4d6;"></div>
<div style="left:951.85px;top:123.9px;width:7.152038199121428px;height:1px;background:#d4d4d6;"></div>
<div style="left:951.85px;top:127.7px;width:4.426522438789036px;height:1px;background:#d4d4d6;"></div>
<div style="left:951.85px;top:131.5px;width:5.738220762401749px;height:1px;background:#d4d4d6;"></div>
<div style="left:963.85px;top:110.5px;width:3px;height:1.5px;background:#4caf50;"></div>
<div style="left:962.85px;top:111px;width:5px;height:24px;background:repeating-linear-gradient(180deg,#ecc0e0 0 1.5px,#d8f0d8 1.5px 3px,#e0d0ec 3px 4px);"></div>
<div style="left:962.85px;top:129px;width:5px;height:6px;background:#b8e0b0;"></div>
<div style="left:970.8px;top:108.5px;width:26px;height:28.5px;background:#f8f8f6;"></div>
<div style="left:970.8px;top:108.5px;width:26px;height:1px;background:#d8cdea;"></div>
<div style="left:972.8px;top:115px;width:4px;height:1px;background:#b8e0b8;"></div>
<div style="left:972.8px;top:119px;width:3px;height:1px;background:#dedede;"></div>
<div style="left:972.8px;top:124px;width:3px;height:1px;background:#dedede;"></div>
<div style="left:972.8px;top:129px;width:3px;height:1px;background:#dedede;"></div>
<div style="left:972.8px;top:134px;width:3px;height:1px;background:#dedede;"></div>
<div style="left:979.8px;top:112.5px;width:4.596981378161031px;height:1px;background:#d4d4d6;"></div>
<div style="left:979.8px;top:116.3px;width:7.378935588021452px;height:1px;background:#d4d4d6;"></div>
<div style="left:979.8px;top:120.1px;width:5.179251704847884px;height:1px;background:#d4d4d6;"></div>
<div style="left:979.8px;top:123.9px;width:5.812619653999905px;height:1px;background:#d4d4d6;"></div>
<div style="left:979.8px;top:127.7px;width:7.997199792277872px;height:1px;background:#d4d4d6;"></div>
<div style="left:979.8px;top:131.5px;width:7.409010683574971px;height:1px;background:#d4d4d6;"></div>
<div style="left:991.8px;top:110.5px;width:3px;height:1.5px;background:#4caf50;"></div>
<div style="left:990.8px;top:111px;width:5px;height:24px;background:repeating-linear-gradient(180deg,#ecc0e0 0 1.5px,#d8f0d8 1.5px 3px,#e0d0ec 3px 4px);"></div>
<div style="left:990.8px;top:129px;width:5px;height:6px;background:#b8e0b0;"></div>
<div style="left:998.75px;top:108.5px;width:26px;height:28.5px;background:#f8f8f6;"></div>
<div style="left:998.75px;top:108.5px;width:26px;height:1px;background:#d8cdea;"></div>
<div style="left:1000.75px;top:115px;width:4px;height:1px;background:#b8e0b8;"></div>
<div style="left:1000.75px;top:119px;width:3px;height:1px;background:#dedede;"></div>
<div style="left:1000.75px;top:124px;width:3px;height:1px;background:#dedede;"></div>
<div style="left:1000.75px;top:129px;width:3px;height:1px;background:#dedede;"></div>
<div style="left:1000.75px;top:134px;width:3px;height:1px;background:#dedede;"></div>
<div style="left:1007.75px;top:112.5px;width:7.904030278986523px;height:1px;background:#d4d4d6;"></div>
<div style="left:1007.75px;top:116.3px;width:5.814159958366494px;height:1px;background:#d4d4d6;"></div>
<div style="left:1007.75px;top:120.1px;width:5.952635994220943px;height:1px;background:#d4d4d6;"></div>
<div style="left:1007.75px;top:123.9px;width:6.918020079067416px;height:1px;background:#d4d4d6;"></div>
<div style="left:1007.75px;top:127.7px;width:5.916169800580606px;height:1px;background:#d4d4d6;"></div>
<div style="left:1007.75px;top:131.5px;width:5.1640904685879px;height:1px;background:#d4d4d6;"></div>
<div style="left:1019.75px;top:110.5px;width:3px;height:1.5px;background:#4caf50;"></div>
<div style="left:1018.75px;top:111px;width:5px;height:24px;background:repeating-linear-gradient(180deg,#ecc0e0 0 1.5px,#d8f0d8 1.5px 3px,#e0d0ec 3px 4px);"></div>
<div style="left:1018.75px;top:129px;width:5px;height:6px;background:#b8e0b0;"></div>
<div style="left:1026.6999999999998px;top:108.5px;width:26px;height:28.5px;background:#f8f8f6;"></div>
<div style="left:1026.6999999999998px;top:108.5px;width:26px;height:1px;background:#d8cdea;"></div>
<div style="left:1028.6999999999998px;top:115px;width:4px;height:1px;background:#b8e0b8;"></div>
<div style="left:1028.6999999999998px;top:119px;width:3px;height:1px;background:#dedede;"></div>
<div style="left:1028.6999999999998px;top:124px;width:3px;height:1px;background:#dedede;"></div>
<div style="left:1028.6999999999998px;top:129px;width:3px;height:1px;background:#dedede;"></div>
<div style="left:1028.6999999999998px;top:134px;width:3px;height:1px;background:#dedede;"></div>
<div style="left:1035.6999999999998px;top:112.5px;width:5.615157660897388px;height:1px;background:#d4d4d6;"></div>
<div style="left:1035.6999999999998px;top:116.3px;width:4.586025450007925px;height:1px;background:#d4d4d6;"></div>
<div style="left:1035.6999999999998px;top:120.1px;width:5.508002991141527px;height:1px;background:#d4d4d6;"></div>
<div style="left:1035.6999999999998px;top:123.9px;width:7.953550801627393px;height:1px;background:#d4d4d6;"></div>
<div style="left:1035.6999999999998px;top:127.7px;width:7.839263533931858px;height:1px;background:#d4d4d6;"></div>
<div style="left:1035.6999999999998px;top:131.5px;width:6.507859883819356px;height:1px;background:#d4d4d6;"></div>
<div style="left:1047.6999999999998px;top:110.5px;width:3px;height:1.5px;background:#4caf50;"></div>
<div style="left:1046.6999999999998px;top:111px;width:5px;height:24px;background:repeating-linear-gradient(180deg,#ecc0e0 0 1.5px,#d8f0d8 1.5px 3px,#e0d0ec 3px 4px);"></div>
<div style="left:1046.6999999999998px;top:129px;width:5px;height:6px;background:#b8e0b0;"></div>
<div style="left:1054.65px;top:108.5px;width:26px;height:28.5px;background:#f8f8f6;"></div>
<div style="left:1054.65px;top:108.5px;width:26px;height:1px;background:#d8cdea;"></div>
<div style="left:1056.65px;top:115px;width:4px;height:1px;background:#b8e0b8;"></div>
<div style="left:1056.65px;top:119px;width:3px;height:1px;background:#dedede;"></div>
<div style="left:1056.65px;top:124px;width:3px;height:1px;background:#dedede;"></div>
<div style="left:1056.65px;top:129px;width:3px;height:1px;background:#dedede;"></div>
<div style="left:1056.65px;top:134px;width:3px;height:1px;background:#dedede;"></div>
<div style="left:1063.65px;top:112.5px;width:5.997289802664486px;height:1px;background:#d4d4d6;"></div>
<div style="left:1063.65px;top:116.3px;width:5.353915041092643px;height:1px;background:#d4d4d6;"></div>
<div style="left:1063.65px;top:120.1px;width:4.356549665089309px;height:1px;background:#d4d4d6;"></div>
<div style="left:1063.65px;top:123.9px;width:5.089240536546077px;height:1px;background:#d4d4d6;"></div>
<div style="left:1063.65px;top:127.7px;width:7.12807588422598px;height:1px;background:#d4d4d6;"></div>
<div style="left:1063.65px;top:131.5px;width:7.469547227109208px;height:1px;background:#d4d4d6;"></div>
<div style="left:1075.65px;top:110.5px;width:3px;height:1.5px;background:#4caf50;"></div>
<div style="left:1074.65px;top:111px;width:5px;height:24px;background:repeating-linear-gradient(180deg,#ecc0e0 0 1.5px,#d8f0d8 1.5px 3px,#e0d0ec 3px 4px);"></div>
<div style="left:1074.65px;top:129px;width:5px;height:6px;background:#b8e0b0;"></div>
<div style="left:1082.6px;top:108.5px;width:26px;height:28.5px;background:#f8f8f6;"></div>
<div style="left:1082.6px;top:108.5px;width:26px;height:1px;background:#d8cdea;"></div>
<div style="left:1084.6px;top:115px;width:4px;height:1px;background:#b8e0b8;"></div>
<div style="left:1084.6px;top:119px;width:3px;height:1px;background:#dedede;"></div>
<div style="left:1084.6px;top:124px;width:3px;height:1px;background:#dedede;"></div>
<div style="left:1084.6px;top:129px;width:3px;height:1px;background:#dedede;"></div>
<div style="left:1084.6px;top:134px;width:3px;height:1px;background:#dedede;"></div>
<div style="left:1091.6px;top:112.5px;width:5.445304932090902px;height:1px;background:#d4d4d6;"></div>
<div style="left:1091.6px;top:116.3px;width:7.144090318535321px;height:1px;background:#d4d4d6;"></div>
<div style="left:1091.6px;top:120.1px;width:7.099592368474567px;height:1px;background:#d4d4d6;"></div>
<div style="left:1091.6px;top:123.9px;width:6.778386997803578px;height:1px;background:#d4d4d6;"></div>
<div style="left:1091.6px;top:127.7px;width:6.656073779890493px;height:1px;background:#d4d4d6;"></div>
<div style="left:1091.6px;top:131.5px;width:7.038554945757958px;height:1px;background:#d4d4d6;"></div>
<div style="left:1103.6px;top:110.5px;width:3px;height:1.5px;background:#4caf50;"></div>
<div style="left:1102.6px;top:111px;width:5px;height:24px;background:repeating-linear-gradient(180deg,#ecc0e0 0 1.5px,#d8f0d8 1.5px 3px,#e0d0ec 3px 4px);"></div>
<div style="left:1102.6px;top:129px;width:5px;height:6px;background:#b8e0b0;"></div>
<div style="left:1110.55px;top:108.5px;width:16.450000000000045px;height:28.5px;background:#f8f8f6;"></div>
<div style="left:1110.55px;top:108.5px;width:16.450000000000045px;height:1px;background:#d8cdea;"></div>
<div style="left:1112.55px;top:115px;width:4px;height:1px;background:#b8e0b8;"></div>
<div style="left:1112.55px;top:119px;width:3px;height:1px;background:#dedede;"></div>
<div style="left:1112.55px;top:124px;width:3px;height:1px;background:#dedede;"></div>
<div style="left:1112.55px;top:129px;width:3px;height:1px;background:#dedede;"></div>
<div style="left:1112.55px;top:134px;width:3px;height:1px;background:#dedede;"></div>
<div style="left:1119.55px;top:112.5px;width:5.453727053383419px;height:1px;background:#d4d4d6;"></div>
<div style="left:1119.55px;top:116.3px;width:6.817878296026812px;height:1px;background:#d4d4d6;"></div>
<div style="left:1119.55px;top:120.1px;width:5.1234082232484965px;height:1px;background:#d4d4d6;"></div>
<div style="left:1119.55px;top:123.9px;width:5.942740895296884px;height:1px;background:#d4d4d6;"></div>
<div style="left:1119.55px;top:127.7px;width:7.078989892630476px;height:1px;background:#d4d4d6;"></div>
<div style="left:1119.55px;top:131.5px;width:6.7635318254228025px;height:1px;background:#d4d4d6;"></div>
<div style="left:1131.55px;top:110.5px;width:3px;height:1.5px;background:#4caf50;"></div>
<div style="left:297px;top:75px;width:3px;height:63px;background:#6b6e7a;"></div>
<div style="left:297px;top:57px;width:6px;height:18px;background:#4a4d5a;border-radius:0 4px 4px 0;"></div>
<div style="left:299.5px;top:61px;width:1.5px;height:9px;background:#a8b6f8;"></div>
<div style="left:1122px;top:57px;width:5px;height:18px;background:#4a4d5a;border-radius:4px 0 0 4px;"></div>
<div style="left:1124px;top:61px;width:1.5px;height:9px;background:#a8b6f8;"></div>
<div style="left:298px;top:138px;width:829px;height:1px;background:#4a4b52;"></div>
<div style="left:298px;top:139px;width:818px;height:15px;background:#1e2025;"></div>
<div class="t" style="left:399.30px;top:142.27px;font-size:11.5px;color:#e3e3e6;font-weight:normal;letter-spacing:0.123px;">5,000 ms</div>
<div class="t" style="left:547.10px;top:142.27px;font-size:11.5px;color:#e3e3e6;font-weight:normal;letter-spacing:0.089px;">10,000 ms</div>
<div class="t" style="left:701.10px;top:142.27px;font-size:11.5px;color:#e3e3e6;font-weight:normal;letter-spacing:0.089px;">15,000 ms</div>
<div class="t" style="left:856.10px;top:142.27px;font-size:11.5px;color:#e3e3e6;font-weight:normal;letter-spacing:0.089px;">20,000 ms</div>
<div class="t" style="left:1010.10px;top:142.27px;font-size:11.5px;color:#e3e3e6;font-weight:normal;letter-spacing:0.089px;">25,000 ms</div>
<div style="left:298px;top:154px;width:818px;height:145px;background:#23252c;"></div>
<div style="left:452px;top:154px;width:1px;height:433px;background:#35373d;"></div>
<div style="left:606px;top:154px;width:1px;height:433px;background:#35373d;"></div>
<div style="left:760px;top:154px;width:1px;height:433px;background:#35373d;"></div>
<div style="left:915px;top:154px;width:1px;height:433px;background:#35373d;"></div>
<div style="left:1069px;top:154px;width:1px;height:433px;background:#35373d;"></div>
<svg style="left:305px;top:161px" width="8" height="7" viewBox="0 0 8 7"><path d="M0 0 H8 L4 7Z" fill="#9a9ba1"/></svg>
<div class="t" style="left:315.40px;top:158.67px;font-size:11.5px;color:#e3e3e6;font-weight:normal;letter-spacing:0.116px;">Network</div>
<div style="left:298px;top:180px;width:818px;height:1.3px;background:repeating-linear-gradient(90deg,#b570e8 0 4px,transparent 4px 6.1px);"></div>
<div style="left:298px;top:182.5px;width:818px;height:1.3px;background:repeating-linear-gradient(90deg,#b570e8 0 4px,transparent 4px 6.1px);"></div>
<div style="left:298px;top:197.5px;width:818px;height:1.3px;background:repeating-linear-gradient(90deg,#b570e8 0 4px,transparent 4px 6.1px);"></div>
<div style="left:298px;top:200px;width:818px;height:1.3px;background:repeating-linear-gradient(90deg,#b570e8 0 4px,transparent 4px 6.1px);"></div>
<div style="left:424px;top:173px;width:2px;height:16px;background:#9a822c;"></div>
<div style="left:451px;top:173px;width:1px;height:16px;background:#9a822c;"></div>
<div style="left:460px;top:173px;width:1px;height:16px;background:#9a822c;"></div>
<div style="left:474px;top:173px;width:1px;height:16px;background:#9a822c;"></div>
<div style="left:497px;top:173px;width:1px;height:16px;background:#9a822c;"></div>
<div style="left:511px;top:173px;width:1px;height:16px;background:#9a822c;"></div>
<div style="left:559px;top:173px;width:1px;height:16px;background:#9a822c;"></div>
<div style="left:570px;top:173px;width:1px;height:16px;background:#9a822c;"></div>
<div style="left:628px;top:173px;width:1px;height:16px;background:#9a822c;"></div>
<div style="left:686px;top:173px;width:2px;height:16px;background:#9a822c;"></div>
<div style="left:786px;top:173px;width:1px;height:16px;background:#9a822c;"></div>
<div style="left:889px;top:173px;width:1px;height:16px;background:#9a822c;"></div>
<div style="left:911px;top:173px;width:1.5px;height:16px;background:#9a822c;"></div>
<div style="left:995px;top:173px;width:1.5px;height:16px;background:#9a822c;"></div>
<div style="left:1038px;top:173px;width:1px;height:16px;background:#9a822c;"></div>
<div style="left:913px;top:189px;width:1.5px;height:17px;background:#9a822c;"></div>
<div style="left:628px;top:207.5px;width:10px;height:16px;background:#e2e2e4;"></div>
<div style="left:638px;top:215.0px;width:49.39999999999998px;height:1.2px;background:#c9c9cc;"></div>
<div style="left:686.4px;top:212.0px;width:1.2px;height:7px;background:#c9c9cc;"></div>
<div style="left:628px;top:224.5px;width:12.5px;height:16px;background:#e2e2e4;"></div>
<div style="left:640.5px;top:224.5px;width:4px;height:16px;background:#8c8d93;"></div>
<div style="left:644.5px;top:232.0px;width:52.10000000000002px;height:1.2px;background:#c9c9cc;"></div>
<div style="left:695.6px;top:229.0px;width:1.2px;height:7px;background:#c9c9cc;"></div>
<div style="left:800px;top:207.5px;width:5px;height:16px;background:#e2e2e4;"></div>
<div style="left:805px;top:215.0px;width:104.79999999999995px;height:1.2px;background:#c9c9cc;"></div>
<div style="left:908.8px;top:212.0px;width:1.2px;height:7px;background:#c9c9cc;"></div>
<div style="left:986px;top:212px;width:2.5px;height:7px;background:#e2e2e4;"></div>
<div style="left:855.4px;top:229.0px;width:1.2px;height:7px;background:#c9c9cc;"></div>
<div style="left:855.4px;top:232.0px;width:26px;height:1.2px;background:#c9c9cc;"></div>
<div style="left:880.5px;top:229.0px;width:1.2px;height:7px;background:#c9c9cc;"></div>
<div style="left:855.4px;top:246.0px;width:1.2px;height:7px;background:#c9c9cc;"></div>
<div style="left:855.4px;top:249.0px;width:26px;height:1.2px;background:#c9c9cc;"></div>
<div style="left:880.5px;top:246.0px;width:1.2px;height:7px;background:#c9c9cc;"></div>
<div style="left:855.4px;top:263.0px;width:1.2px;height:7px;background:#c9c9cc;"></div>
<div style="left:855.4px;top:266.0px;width:26px;height:1.2px;background:#c9c9cc;"></div>
<div style="left:880.5px;top:263.0px;width:1.2px;height:7px;background:#c9c9cc;"></div>
<div style="left:855.4px;top:280.0px;width:1.2px;height:7px;background:#c9c9cc;"></div>
<div style="left:855.4px;top:283.0px;width:26px;height:1.2px;background:#c9c9cc;"></div>
<div style="left:880.5px;top:280.0px;width:1.2px;height:7px;background:#c9c9cc;"></div>
<div style="left:855.4px;top:296px;width:1.5px;height:4px;background:#c9c9cc;"></div>
<div style="left:880.5px;top:296px;width:1.5px;height:4px;background:#c9c9cc;"></div>
<div style="left:1117px;top:141px;width:8px;height:67px;background:#3d3f46;border-radius:4px;"></div>
<div style="left:298px;top:299px;width:829px;height:1px;background:#4a4b52;"></div>
<div style="left:298px;top:300px;width:829px;height:6px;background:#23252c;"></div>
<div style="left:707px;top:302px;width:2px;height:2px;background:#d0d0d4;border-radius:50%;"></div>
<div style="left:711px;top:302px;width:2px;height:2px;background:#d0d0d4;border-radius:50%;"></div>
<div style="left:715px;top:302px;width:2px;height:2px;background:#d0d0d4;border-radius:50%;"></div>
<div style="left:298px;top:306px;width:829px;height:1px;background:#4a4b52;"></div>
<div style="left:298px;top:307px;width:818px;height:84px;background:#23252c;"></div>
<div style="left:452px;top:307px;width:1px;height:84px;background:#35373d;"></div>
<div style="left:606px;top:307px;width:1px;height:84px;background:#35373d;"></div>
<div style="left:760px;top:307px;width:1px;height:84px;background:#35373d;"></div>
<div style="left:915px;top:307px;width:1px;height:84px;background:#35373d;"></div>
<div style="left:1069px;top:307px;width:1px;height:84px;background:#35373d;"></div>
<div style="left:298px;top:327px;width:818px;height:1px;background:#3a3c42;"></div>
<div style="left:298px;top:348px;width:818px;height:1px;background:#3a3c42;"></div>
<div style="left:298px;top:369px;width:818px;height:1px;background:#3a3c42;"></div>
<div style="left:298px;top:390px;width:818px;height:1px;background:#3a3c42;"></div>
<svg style="left:305px;top:311.8px" width="7" height="9" viewBox="0 0 7 9"><path d="M0 0 L7 4.5 L0 9Z" fill="#9a9ba1"/></svg>
<div class="t" style="left:315.40px;top:311.57px;font-size:11.5px;color:#e3e3e6;font-weight:normal;letter-spacing:-0.197px;">Frames</div>
<svg style="left:305px;top:332.8px" width="7" height="9" viewBox="0 0 7 9"><path d="M0 0 L7 4.5 L0 9Z" fill="#9a9ba1"/></svg>
<div class="t" style="left:315.40px;top:332.57px;font-size:11.5px;color:#e3e3e6;font-weight:normal;letter-spacing:0.071px;">Animations</div>
<svg style="left:305px;top:353.8px" width="7" height="9" viewBox="0 0 7 9"><path d="M0 0 L7 4.5 L0 9Z" fill="#9a9ba1"/></svg>
<div class="t" style="left:315.40px;top:353.57px;font-size:11.5px;color:#e3e3e6;font-weight:normal;letter-spacing:0.179px;">Interactions</div>
<div class="t" style="left:315.40px;top:374.57px;font-size:11.5px;color:#e3e3e6;font-weight:normal;letter-spacing:0.156px;">Layout shifts</div>
<div style="left:1117px;top:309px;width:8px;height:28px;background:#3d3f46;border-radius:4px;"></div>
<svg style="left:0;top:0" width="0" height="0"><defs><pattern id="fh" patternUnits="userSpaceOnUse" width="17" height="17" x="0" y="309"><rect width="17" height="17" fill="#efdf45"/><path d="M-2 19 L19 -2" stroke="#fffbe0" stroke-width="1.8" stroke-dasharray="7.5 3"/></pattern></defs></svg>
<div style="left:422.8px;top:309px;width:6.599999999999966px;height:17px;background:#d1ead0;"></div>
<svg style="left:429.8px;top:309px" width="21.8" height="17"><rect x="0" y="0" width="21.8" height="17" fill="url(#fh)"/></svg>
<div style="left:451.6px;top:309px;width:1.3999999999999773px;height:17px;background:#d1ead0;"></div>
<div style="left:453.5px;top:309px;width:49.5px;height:17px;background:#ffffff;"></div>
<div style="left:503.5px;top:309px;width:7.0px;height:17px;background:#d1ead0;"></div>
<div style="left:512px;top:309px;width:11px;height:17px;background:#d1ead0;"></div>
<div style="left:524px;top:309px;width:161px;height:17px;background:#ffffff;"></div>
<svg style="left:686.0px;top:309px" width="15.2" height="17"><rect x="0" y="0" width="15.2" height="17" fill="url(#fh)"/></svg>
<div style="left:701.2px;top:309px;width:3.7999999999999545px;height:17px;background:#d1ead0;"></div>
<svg style="left:706.0px;top:309px" width="78.6" height="17"><rect x="0" y="0" width="78.6" height="17" fill="url(#fh)"/></svg>
<div style="left:787px;top:309px;width:24px;height:17px;background:#d1ead0;"></div>
<svg style="left:812.0px;top:309px" width="76.8" height="17"><rect x="0" y="0" width="76.8" height="17" fill="url(#fh)"/></svg>
<div style="left:889px;top:309px;width:18.200000000000045px;height:17px;background:#ffffff;"></div>
<div style="left:907.2px;top:309px;width:3.7999999999999545px;height:17px;background:#d1ead0;"></div>
<svg style="left:912.0px;top:309px" width="3.8" height="17"><rect x="0" y="0" width="3.8" height="17" fill="url(#fh)"/></svg>
<div style="left:438px;top:309px;width:1px;height:17px;background:repeating-linear-gradient(180deg,#f08080 0 2px,transparent 2px 3px);"></div>
<div style="left:861px;top:309px;width:1px;height:17px;background:repeating-linear-gradient(180deg,#f08080 0 2px,transparent 2px 3px);"></div>
<div style="left:887px;top:309px;width:1px;height:17px;background:repeating-linear-gradient(180deg,#f08080 0 2px,transparent 2px 3px);"></div>
<div class="t" style="left:575.80px;top:312.27px;font-size:11.5px;color:#303033;font-weight:normal;letter-spacing:0.079px;-webkit-text-stroke:0.05px currentColor;">5,233.8 ms</div>
<div style="left:629px;top:330px;width:152px;height:17px;background:#c36ef8;"></div>
<div style="left:380px;top:358.5px;width:42px;height:1.2px;background:#c9c9cc;"></div>
<div style="left:421.3px;top:351px;width:1.2px;height:16px;background:#c8961e;"></div>
<div style="left:439px;top:359px;width:11px;height:1.2px;background:#c9c9cc;"></div>
<div style="left:439px;top:355.5px;width:1px;height:7px;background:#c9c9cc;"></div>
<div style="left:449.5px;top:355.5px;width:1px;height:7px;background:#c9c9cc;"></div>
<div style="left:686px;top:379.8px;width:44px;height:2px;background:#8a52c0;"></div>
<div style="left:683.8px;top:378.6px;width:4.5px;height:4.5px;background:#c36ef8;transform:rotate(45deg)"></div>
<div style="left:693.8px;top:378.6px;width:4.5px;height:4.5px;background:#c36ef8;transform:rotate(45deg)"></div>
<div style="left:697.8px;top:378.6px;width:4.5px;height:4.5px;background:#c36ef8;transform:rotate(45deg)"></div>
<div style="left:782px;top:379.8px;width:35px;height:2px;background:#8a52c0;"></div>
<div style="left:780.8px;top:378.6px;width:4.5px;height:4.5px;background:#c36ef8;transform:rotate(45deg)"></div>
<div style="left:784.8px;top:378.6px;width:4.5px;height:4.5px;background:#c36ef8;transform:rotate(45deg)"></div>
<div style="left:298px;top:391px;width:818px;height:19px;background:#23252c;"></div>
<div style="left:298px;top:391px;width:2px;height:196px;background:#2d6fd6;"></div>
<div style="left:298px;top:391px;width:10px;height:2px;background:#2d6fd6;"></div>
<svg style="left:304.5px;top:398.5px" width="8" height="7" viewBox="0 0 8 7"><path d="M0 0 H8 L4 7Z" fill="#9a9ba1"/></svg>
<div class="t" style="left:315.70px;top:395.87px;font-size:11.5px;color:#e3e3e6;font-weight:normal;letter-spacing:0.138px;">Main — http://localhost:10000/planner/group_95/planning</div>
<div style="left:300px;top:409px;width:816px;height:178px;background:#23252c;"></div>
<div style="left:452px;top:409px;width:1px;height:178px;background:#35373d;"></div>
<div style="left:606px;top:409px;width:1px;height:178px;background:#35373d;"></div>
<div style="left:760px;top:409px;width:1px;height:178px;background:#35373d;"></div>
<div style="left:915px;top:409px;width:1px;height:178px;background:#35373d;"></div>
<div style="left:1069px;top:409px;width:1px;height:178px;background:#35373d;"></div>
<div style="left:300px;top:410px;width:121.5px;height:16px;background:repeating-linear-gradient(135deg,#85868c 0 2px,#b5484b 2px 3.8px);"></div>
<svg style="left:413.5px;top:410px" width="8" height="8" viewBox="0 0 8 8"><path d="M0 0 H8 V8Z" fill="#ff0000"/></svg>
<div class="t" style="left:304.50px;top:412.14px;font-size:12px;color:#5b2e33;font-weight:normal;letter-spacing:0.578px;-webkit-text-stroke:0.08px currentColor;">Task</div>
<div style="left:300px;top:427px;width:121.5px;height:16px;background:#f9c80e;"></div>
<div class="t" style="left:305.50px;top:429.34px;font-size:12px;color:#202124;font-weight:normal;letter-spacing:-0.134px;-webkit-text-stroke:0.08px currentColor;">Evaluate script</div>
<div style="left:300px;top:444px;width:121.5px;height:16px;background:#7c7d84;"></div>
<div class="t" style="left:305.50px;top:446.34px;font-size:12px;color:#3d3e42;font-weight:normal;letter-spacing:-0.113px;-webkit-text-stroke:0.08px currentColor;">Profiling overhead</div>
<div style="left:422px;top:410px;width:146px;height:16px;background:#5b5f66;"></div>
<div style="left:422px;top:418px;width:2px;height:8px;background:repeating-linear-gradient(90deg,#80838a 0 1.3px,#5b5f66 1.3px 2.6px);"></div>
<div style="left:422px;top:410px;width:2px;height:8px;background:#ff0000;"></div>
<div style="left:426px;top:418px;width:2px;height:8px;background:repeating-linear-gradient(90deg,#80838a 0 1.3px,#5b5f66 1.3px 2.6px);"></div>
<div style="left:426px;top:410px;width:2px;height:8px;background:#ff0000;"></div>
<div style="left:431px;top:410px;width:19px;height:16px;background:repeating-linear-gradient(135deg,#85868c 0 2px,#b5484b 2px 3.8px);"></div>
<svg style="left:441.0px;top:410px" width="9.0" height="8" viewBox="0 0 9 8" preserveAspectRatio="none"><path d="M0 0 H9 V8Z" fill="#ff0000"/></svg>
<div style="left:453px;top:410px;width:6px;height:16px;background:repeating-linear-gradient(135deg,#85868c 0 2px,#b5484b 2px 3.8px);"></div>
<svg style="left:453.0px;top:410px" width="6.0" height="8" viewBox="0 0 9 8" preserveAspectRatio="none"><path d="M0 0 H9 V8Z" fill="#ff0000"/></svg>
<div style="left:461px;top:410px;width:4.5px;height:16px;background:repeating-linear-gradient(135deg,#85868c 0 2px,#b5484b 2px 3.8px);"></div>
<svg style="left:461.0px;top:410px" width="4.5" height="8" viewBox="0 0 9 8" preserveAspectRatio="none"><path d="M0 0 H9 V8Z" fill="#ff0000"/></svg>
<div style="left:467.6px;top:418px;width:2.099999999999966px;height:8px;background:repeating-linear-gradient(90deg,#80838a 0 1.3px,#5b5f66 1.3px 2.6px);"></div>
<div style="left:467.6px;top:410px;width:2.099999999999966px;height:8px;background:#ff0000;"></div>
<div style="left:471px;top:418px;width:2px;height:8px;background:repeating-linear-gradient(90deg,#80838a 0 1.3px,#5b5f66 1.3px 2.6px);"></div>
<div style="left:471px;top:410px;width:2px;height:8px;background:#ff0000;"></div>
<div style="left:473px;top:410px;width:5px;height:16px;background:repeating-linear-gradient(135deg,#85868c 0 2px,#b5484b 2px 3.8px);"></div>
<svg style="left:473.0px;top:410px" width="5.0" height="8" viewBox="0 0 9 8" preserveAspectRatio="none"><path d="M0 0 H9 V8Z" fill="#ff0000"/></svg>
<div style="left:480px;top:418px;width:14px;height:8px;background:repeating-linear-gradient(90deg,#80838a 0 1.3px,#5b5f66 1.3px 2.6px);"></div>
<div style="left:480px;top:410px;width:14px;height:8px;background:#ff0000;"></div>
<div style="left:495px;top:418px;width:16px;height:8px;background:repeating-linear-gradient(90deg,#80838a 0 1.3px,#5b5f66 1.3px 2.6px);"></div>
<div style="left:495px;top:410px;width:16px;height:8px;background:#ff0000;"></div>
<div style="left:513.8px;top:410px;width:7.0px;height:16px;background:repeating-linear-gradient(135deg,#85868c 0 2px,#b5484b 2px 3.8px);"></div>
<svg style="left:513.8px;top:410px" width="7.0" height="8" viewBox="0 0 9 8" preserveAspectRatio="none"><path d="M0 0 H9 V8Z" fill="#ff0000"/></svg>
<div style="left:526px;top:410px;width:5px;height:16px;background:repeating-linear-gradient(135deg,#85868c 0 2px,#b5484b 2px 3.8px);"></div>
<svg style="left:526.0px;top:410px" width="5.0" height="8" viewBox="0 0 9 8" preserveAspectRatio="none"><path d="M0 0 H9 V8Z" fill="#ff0000"/></svg>
<div style="left:535px;top:418px;width:28.5px;height:8px;background:repeating-linear-gradient(90deg,#80838a 0 1.3px,#5b5f66 1.3px 2.6px);"></div>
<div style="left:535px;top:410px;width:28.5px;height:8px;background:#ff0000;"></div>
<div style="left:422px;top:427px;width:145px;height:16px;background:#f9c80e;"></div>
<div style="left:422px;top:427px;width:9px;height:16px;background:linear-gradient(90deg,#f9c80e 0,#f9c80e 2.2px, #b09a30 2.2px, #b09a30 3.1px, #f9c80e 3.1px,#f9c80e 4.5px, #9a8428 4.5px, #9a8428 5.7px, #f9c80e 5.7px,#f9c80e 7.5px, #9a8428 7.5px, #9a8428 9.0px, #f9c80e 9.0px,#f9c80e 100%);"></div>
<div style="left:447px;top:427px;width:6px;height:16px;background:linear-gradient(90deg,#f9c80e 0,#f9c80e 1.4px, #b09a30 1.4px, #b09a30 3.0px, #f9c80e 3.0px,#f9c80e 4.9px, #9a8428 4.9px, #9a8428 6.0px, #f9c80e 6.0px,#f9c80e 100%);"></div>
<div style="left:457px;top:427px;width:6px;height:16px;background:linear-gradient(90deg,#f9c80e 0,#f9c80e 0.3px, #b09a30 0.3px, #b09a30 2.3px, #f9c80e 2.3px,#f9c80e 2.6px, #9a8428 2.6px, #9a8428 4.1px, #f9c80e 4.1px,#f9c80e 5.4px, #9a8428 5.4px, #9a8428 6.0px, #f9c80e 6.0px,#f9c80e 100%);"></div>
<div style="left:466px;top:427px;width:101px;height:16px;background:linear-gradient(90deg,#f9c80e 0,#f9c80e 1.5px, #c9a820 1.5px, #c9a820 3.0px, #f9c80e 3.0px,#f9c80e 4.5px, #b09a30 4.5px, #b09a30 6.5px, #f9c80e 6.5px,#f9c80e 7.3px, #b09a30 7.3px, #b09a30 8.7px, #f9c80e 8.7px,#f9c80e 9.3px, #9a8428 9.3px, #9a8428 10.4px, #f9c80e 10.4px,#f9c80e 12.1px, #9a8428 12.1px, #9a8428 14.1px, #f9c80e 14.1px,#f9c80e 16.0px, #c9a820 16.0px, #c9a820 17.3px, #f9c80e 17.3px,#f9c80e 19.3px, #b09a30 19.3px, #b09a30 20.9px, #f9c80e 20.9px,#f9c80e 22.9px, #9a8428 22.9px, #9a8428 24.8px, #f9c80e 24.8px,#f9c80e 25.3px, #b09a30 25.3px, #b09a30 26.2px, #f9c80e 26.2px,#f9c80e 28.1px, #8c7a2a 28.1px, #8c7a2a 30.0px, #f9c80e 30.0px,#f9c80e 31.5px, #b09a30 31.5px, #b09a30 33.4px, #f9c80e 33.4px,#f9c80e 35.4px, #9a8428 35.4px, #9a8428 36.8px, #f9c80e 36.8px,#f9c80e 38.4px, #9a8428 38.4px, #9a8428 39.4px, #f9c80e 39.4px,#f9c80e 41.6px, #b09a30 41.6px, #b09a30 42.7px, #f9c80e 42.7px,#f9c80e 44.4px, #9a8428 44.4px, #9a8428 45.1px, #f9c80e 45.1px,#f9c80e 46.5px, #c9a820 46.5px, #c9a820 48.4px, #f9c80e 48.4px,#f9c80e 48.9px, #9a8428 48.9px, #9a8428 49.5px, #f9c80e 49.5px,#f9c80e 50.4px, #9a8428 50.4px, #9a8428 52.5px, #f9c80e 52.5px,#f9c80e 54.0px, #c9a820 54.0px, #c9a820 56.2px, #f9c80e 56.2px,#f9c80e 57.6px, #b09a30 57.6px, #b09a30 59.1px, #f9c80e 59.1px,#f9c80e 61.6px, #9a8428 61.6px, #9a8428 62.6px, #f9c80e 62.6px,#f9c80e 63.7px, #c9a820 63.7px, #c9a820 64.3px, #f9c80e 64.3px,#f9c80e 66.7px, #b09a30 66.7px, #b09a30 67.5px, #f9c80e 67.5px,#f9c80e 69.7px, #c9a820 69.7px, #c9a820 70.3px, #f9c80e 70.3px,#f9c80e 72.8px, #b09a30 72.8px, #b09a30 73.6px, #f9c80e 73.6px,#f9c80e 75.2px, #b09a30 75.2px, #b09a30 76.1px, #f9c80e 76.1px,#f9c80e 77.5px, #c9a820 77.5px, #c9a820 78.7px, #f9c80e 78.7px,#f9c80e 80.1px, #8c7a2a 80.1px, #8c7a2a 81.1px, #f9c80e 81.1px,#f9c80e 83.7px, #8c7a2a 83.7px, #8c7a2a 85.9px, #f9c80e 85.9px,#f9c80e 88.9px, #b09a30 88.9px, #b09a30 89.5px, #f9c80e 89.5px,#f9c80e 90.9px, #9a8428 90.9px, #9a8428 92.8px, #f9c80e 92.8px,#f9c80e 93.2px, #c9a820 93.2px, #c9a820 94.1px, #f9c80e 94.1px,#f9c80e 95.1px, #8c7a2a 95.1px, #8c7a2a 96.9px, #f9c80e 96.9px,#f9c80e 99.5px, #9a8428 99.5px, #9a8428 100.7px, #f9c80e 100.7px,#f9c80e 100%);"></div>
<div style="left:425px;top:444px;width:142px;height:16px;background:linear-gradient(90deg,#6f918a 0,#6f918a 2.1px, #c6faec 2.1px, #c6faec 3.8px, #6f918a 3.8px,#6f918a 4.7px, #c6faec 4.7px, #c6faec 5.3px, #6f918a 5.3px,#6f918a 7.4px, #8aa89e 7.4px, #8aa89e 9.1px, #6f918a 9.1px,#6f918a 11.9px, #a88a9c 11.9px, #a88a9c 13.5px, #6f918a 13.5px,#6f918a 13.9px, #8aa89e 13.9px, #8aa89e 15.5px, #6f918a 15.5px,#6f918a 17.2px, #a8e8d8 17.2px, #a8e8d8 18.4px, #6f918a 18.4px,#6f918a 19.0px, #b6f4e4 19.0px, #b6f4e4 20.9px, #6f918a 20.9px,#6f918a 23.1px, #8aa89e 23.1px, #8aa89e 25.1px, #6f918a 25.1px,#6f918a 28.3px, #b6f4e4 28.3px, #b6f4e4 29.1px, #6f918a 29.1px,#6f918a 32.4px, #a8e8d8 32.4px, #a8e8d8 34.1px, #6f918a 34.1px,#6f918a 34.8px, #8aa89e 34.8px, #8aa89e 37.0px, #6f918a 37.0px,#6f918a 37.8px, #a8e8d8 37.8px, #a8e8d8 39.1px, #6f918a 39.1px,#6f918a 41.4px, #a88a9c 41.4px, #a88a9c 43.4px, #6f918a 43.4px,#6f918a 44.4px, #b6f4e4 44.4px, #b6f4e4 46.1px, #6f918a 46.1px,#6f918a 48.5px, #b6f4e4 48.5px, #b6f4e4 49.9px, #6f918a 49.9px,#6f918a 51.8px, #a88a9c 51.8px, #a88a9c 53.0px, #6f918a 53.0px,#6f918a 55.1px, #a88a9c 55.1px, #a88a9c 56.7px, #6f918a 56.7px,#6f918a 57.2px, #a8e8d8 57.2px, #a8e8d8 59.0px, #6f918a 59.0px,#6f918a 62.9px, #c6faec 62.9px, #c6faec 64.6px, #6f918a 64.6px,#6f918a 68.4px, #8aa89e 68.4px, #8aa89e 70.3px, #6f918a 70.3px,#6f918a 73.2px, #a8e8d8 73.2px, #a8e8d8 73.9px, #6f918a 73.9px,#6f918a 75.6px, #a88a9c 75.6px, #a88a9c 76.7px, #6f918a 76.7px,#6f918a 80.1px, #b6f4e4 80.1px, #b6f4e4 81.5px, #6f918a 81.5px,#6f918a 83.2px, #b6f4e4 83.2px, #b6f4e4 85.2px, #6f918a 85.2px,#6f918a 87.5px, #8aa89e 87.5px, #8aa89e 88.4px, #6f918a 88.4px,#6f918a 89.0px, #a88a9c 89.0px, #a88a9c 89.9px, #6f918a 89.9px,#6f918a 90.7px, #a8e8d8 90.7px, #a8e8d8 92.2px, #6f918a 92.2px,#6f918a 92.8px, #8aa89e 92.8px, #8aa89e 93.9px, #6f918a 93.9px,#6f918a 95.3px, #b6f4e4 95.3px, #b6f4e4 96.4px, #6f918a 96.4px,#6f918a 98.7px, #c6faec 98.7px, #c6faec 99.9px, #6f918a 99.9px,#6f918a 101.3px, #8aa89e 101.3px, #8aa89e 102.6px, #6f918a 102.6px,#6f918a 103.9px, #8aa89e 103.9px, #8aa89e 106.1px, #6f918a 106.1px,#6f918a 109.8px, #a8e8d8 109.8px, #a8e8d8 111.0px, #6f918a 111.0px,#6f918a 114.2px, #a88a9c 114.2px, #a88a9c 115.1px, #6f918a 115.1px,#6f918a 115.5px, #c6faec 115.5px, #c6faec 116.6px, #6f918a 116.6px,#6f918a 117.6px, #a88a9c 117.6px, #a88a9c 119.5px, #6f918a 119.5px,#6f918a 120.0px, #c6faec 120.0px, #c6faec 121.6px, #6f918a 121.6px,#6f918a 125.6px, #b6f4e4 125.6px, #b6f4e4 127.0px, #6f918a 127.0px,#6f918a 130.8px, #c6faec 130.8px, #c6faec 132.8px, #6f918a 132.8px,#6f918a 135.5px, #a88a9c 135.5px, #a88a9c 136.4px, #6f918a 136.4px,#6f918a 138.6px, #c6faec 138.6px, #c6faec 140.0px, #6f918a 140.0px,#6f918a 141.4px, #a8e8d8 141.4px, #a8e8d8 142.0px, #6f918a 142.0px,#6f918a 100%);"></div>
<div style="left:422px;top:444px;width:3px;height:16px;background:#7c7d84;"></div>
<div style="left:426px;top:461px;width:24px;height:16px;background:linear-gradient(90deg,#a8a890 0,#a8a890 3.5px, #c8a850 3.5px, #c8a850 5.0px, #a8a890 5.0px,#a8a890 5.9px, #e8e0b0 5.9px, #e8e0b0 8.2px, #a8a890 8.2px,#a8a890 11.6px, #e8e0b0 11.6px, #e8e0b0 13.3px, #a8a890 13.3px,#a8a890 16.1px, #f3edc0 16.1px, #f3edc0 17.7px, #a8a890 17.7px,#a8a890 20.7px, #c8a850 20.7px, #c8a850 21.5px, #a8a890 21.5px,#a8a890 22.4px, #e8e0b0 22.4px, #e8e0b0 23.2px, #a8a890 23.2px,#a8a890 100%);"></div>
<div style="left:450px;top:461px;width:51px;height:16px;background:linear-gradient(90deg,#7f9a90 0,#7f9a90 3.3px, #b6f0dc 3.3px, #b6f0dc 5.1px, #7f9a90 5.1px,#7f9a90 9.0px, #b6f0dc 9.0px, #b6f0dc 10.3px, #7f9a90 10.3px,#7f9a90 14.3px, #b8a860 14.3px, #b8a860 16.7px, #7f9a90 16.7px,#7f9a90 20.5px, #c8e8d0 20.5px, #c8e8d0 21.8px, #7f9a90 21.8px,#7f9a90 24.1px, #b6f0dc 24.1px, #b6f0dc 26.6px, #7f9a90 26.6px,#7f9a90 29.0px, #b6f0dc 29.0px, #b6f0dc 31.5px, #7f9a90 31.5px,#7f9a90 35.8px, #b8a860 35.8px, #b8a860 36.9px, #7f9a90 36.9px,#7f9a90 40.6px, #b8a860 40.6px, #b8a860 42.4px, #7f9a90 42.4px,#7f9a90 45.8px, #b6f0dc 45.8px, #b6f0dc 47.9px, #7f9a90 47.9px,#7f9a90 100%);"></div>
<div style="left:501px;top:461px;width:42px;height:16px;background:linear-gradient(90deg,#7f9a90 0,#7f9a90 2.0px, #b6f0dc 2.0px, #b6f0dc 3.8px, #7f9a90 3.8px,#7f9a90 5.6px, #b6f0dc 5.6px, #b6f0dc 7.2px, #7f9a90 7.2px,#7f9a90 7.9px, #b6f0dc 7.9px, #b6f0dc 9.4px, #7f9a90 9.4px,#7f9a90 11.1px, #a8c8b8 11.1px, #a8c8b8 12.6px, #7f9a90 12.6px,#7f9a90 14.1px, #b6f0dc 14.1px, #b6f0dc 15.8px, #7f9a90 15.8px,#7f9a90 18.6px, #a8c8b8 18.6px, #a8c8b8 20.9px, #7f9a90 20.9px,#7f9a90 23.9px, #b6f0dc 23.9px, #b6f0dc 24.8px, #7f9a90 24.8px,#7f9a90 27.0px, #b6f0dc 27.0px, #b6f0dc 29.2px, #7f9a90 29.2px,#7f9a90 31.3px, #b6f0dc 31.3px, #b6f0dc 33.7px, #7f9a90 33.7px,#7f9a90 34.3px, #a8c8b8 34.3px, #a8c8b8 35.7px, #7f9a90 35.7px,#7f9a90 39.4px, #b6f0dc 39.4px, #b6f0dc 41.6px, #7f9a90 41.6px,#7f9a90 100%);"></div>
<div style="left:543px;top:461px;width:10px;height:16px;background:linear-gradient(90deg,#8a9a88 0,#8a9a88 5.8px, #b6f0dc 5.8px, #b6f0dc 7.0px, #8a9a88 7.0px,#8a9a88 100%);"></div>
<div style="left:553px;top:461px;width:14px;height:16px;background:linear-gradient(90deg,#8a9a88 0,#8a9a88 3.8px, #b6f0dc 3.8px, #b6f0dc 5.7px, #8a9a88 5.7px,#8a9a88 6.6px, #c8a850 6.6px, #c8a850 7.5px, #8a9a88 7.5px,#8a9a88 11.0px, #c8a850 11.0px, #c8a850 12.2px, #8a9a88 12.2px,#8a9a88 14.0px, #c8a850 14.0px, #c8a850 14.0px, #8a9a88 14.0px,#8a9a88 100%);"></div>
<div style="left:427px;top:478px;width:140px;height:16px;background:linear-gradient(90deg,#7b9a94 0,#7b9a94 1.6px, #a8d0e8 1.6px, #a8d0e8 3.4px, #7b9a94 3.4px,#7b9a94 6.5px, #c8d8b0 6.5px, #c8d8b0 9.0px, #7b9a94 9.0px,#7b9a94 9.5px, #c8d8b0 9.5px, #c8d8b0 10.8px, #7b9a94 10.8px,#7b9a94 12.4px, #a8d0e8 12.4px, #a8d0e8 14.8px, #7b9a94 14.8px,#7b9a94 17.6px, #98b0c0 17.6px, #98b0c0 19.6px, #7b9a94 19.6px,#7b9a94 22.9px, #bde8d0 22.9px, #bde8d0 24.1px, #7b9a94 24.1px,#7b9a94 27.6px, #bde8d0 27.6px, #bde8d0 28.9px, #7b9a94 28.9px,#7b9a94 32.9px, #98b0c0 32.9px, #98b0c0 35.3px, #7b9a94 35.3px,#7b9a94 37.1px, #b8a8c8 37.1px, #b8a8c8 38.9px, #7b9a94 38.9px,#7b9a94 41.3px, #bde8d0 41.3px, #bde8d0 43.8px, #7b9a94 43.8px,#7b9a94 45.3px, #c8d8b0 45.3px, #c8d8b0 47.2px, #7b9a94 47.2px,#7b9a94 50.3px, #b8a8c8 50.3px, #b8a8c8 52.9px, #7b9a94 52.9px,#7b9a94 55.8px, #bde8d0 55.8px, #bde8d0 57.7px, #7b9a94 57.7px,#7b9a94 59.0px, #98b0c0 59.0px, #98b0c0 60.4px, #7b9a94 60.4px,#7b9a94 62.4px, #c8d8b0 62.4px, #c8d8b0 64.0px, #7b9a94 64.0px,#7b9a94 67.1px, #bde8d0 67.1px, #bde8d0 68.4px, #7b9a94 68.4px,#7b9a94 71.5px, #b8a8c8 71.5px, #b8a8c8 72.4px, #7b9a94 72.4px,#7b9a94 74.7px, #a8d0e8 74.7px, #a8d0e8 76.0px, #7b9a94 76.0px,#7b9a94 78.0px, #a8d0e8 78.0px, #a8d0e8 79.7px, #7b9a94 79.7px,#7b9a94 83.1px, #98b0c0 83.1px, #98b0c0 85.5px, #7b9a94 85.5px,#7b9a94 89.3px, #a8d0e8 89.3px, #a8d0e8 91.3px, #7b9a94 91.3px,#7b9a94 95.6px, #a8d0e8 95.6px, #a8d0e8 97.3px, #7b9a94 97.3px,#7b9a94 99.8px, #a8d0e8 99.8px, #a8d0e8 101.1px, #7b9a94 101.1px,#7b9a94 101.9px, #98b0c0 101.9px, #98b0c0 103.2px, #7b9a94 103.2px,#7b9a94 104.6px, #b8a8c8 104.6px, #b8a8c8 106.0px, #7b9a94 106.0px,#7b9a94 109.6px, #c8d8b0 109.6px, #c8d8b0 111.0px, #7b9a94 111.0px,#7b9a94 114.0px, #a8d0e8 114.0px, #a8d0e8 116.6px, #7b9a94 116.6px,#7b9a94 120.5px, #98b0c0 120.5px, #98b0c0 122.7px, #7b9a94 122.7px,#7b9a94 126.7px, #b8a8c8 126.7px, #b8a8c8 128.7px, #7b9a94 128.7px,#7b9a94 132.9px, #b8a8c8 132.9px, #b8a8c8 134.7px, #7b9a94 134.7px,#7b9a94 136.5px, #b8a8c8 136.5px, #b8a8c8 138.8px, #7b9a94 138.8px,#7b9a94 100%);"></div>
<div style="left:427px;top:495px;width:23px;height:16px;background:linear-gradient(90deg,#8aa8b0 0,#8aa8b0 1.2px, #c8e8f8 1.2px, #c8e8f8 3.1px, #8aa8b0 3.1px,#8aa8b0 5.8px, #b8e0f0 5.8px, #b8e0f0 8.4px, #8aa8b0 8.4px,#8aa8b0 11.1px, #b8e0f0 11.1px, #b8e0f0 12.2px, #8aa8b0 12.2px,#8aa8b0 14.7px, #c8e8f8 14.7px, #c8e8f8 16.3px, #8aa8b0 16.3px,#8aa8b0 18.2px, #b8e0f0 18.2px, #b8e0f0 19.1px, #8aa8b0 19.1px,#8aa8b0 21.2px, #c8e8f8 21.2px, #c8e8f8 23.0px, #8aa8b0 23.0px,#8aa8b0 100%);"></div>
<div style="left:450px;top:495px;width:117px;height:16px;background:linear-gradient(90deg,#7c9aa0 0,#7c9aa0 0.6px, #98b8c0 0.6px, #98b8c0 1.6px, #7c9aa0 1.6px,#7c9aa0 5.0px, #98b8c0 5.0px, #98b8c0 6.0px, #7c9aa0 6.0px,#7c9aa0 6.5px, #98b8c0 6.5px, #98b8c0 9.0px, #7c9aa0 9.0px,#7c9aa0 10.2px, #98b8c0 10.2px, #98b8c0 12.6px, #7c9aa0 12.6px,#7c9aa0 14.6px, #a8e8d0 14.6px, #a8e8d0 17.1px, #7c9aa0 17.1px,#7c9aa0 19.4px, #98b8c0 19.4px, #98b8c0 21.7px, #7c9aa0 21.7px,#7c9aa0 25.3px, #b8e0f0 25.3px, #b8e0f0 26.3px, #7c9aa0 26.3px,#7c9aa0 28.6px, #98b8c0 28.6px, #98b8c0 31.1px, #7c9aa0 31.1px,#7c9aa0 32.4px, #c8d8b0 32.4px, #c8d8b0 33.3px, #7c9aa0 33.3px,#7c9aa0 34.7px, #98b8c0 34.7px, #98b8c0 35.8px, #7c9aa0 35.8px,#7c9aa0 38.9px, #b8e0f0 38.9px, #b8e0f0 41.3px, #7c9aa0 41.3px,#7c9aa0 42.8px, #a8e8d0 42.8px, #a8e8d0 44.1px, #7c9aa0 44.1px,#7c9aa0 44.5px, #98b8c0 44.5px, #98b8c0 46.1px, #7c9aa0 46.1px,#7c9aa0 47.2px, #b8e0f0 47.2px, #b8e0f0 48.3px, #7c9aa0 48.3px,#7c9aa0 51.6px, #98b8c0 51.6px, #98b8c0 54.1px, #7c9aa0 54.1px,#7c9aa0 57.6px, #b8e0f0 57.6px, #b8e0f0 58.5px, #7c9aa0 58.5px,#7c9aa0 61.3px, #b8e0f0 61.3px, #b8e0f0 63.7px, #7c9aa0 63.7px,#7c9aa0 67.5px, #b8e0f0 67.5px, #b8e0f0 69.1px, #7c9aa0 69.1px,#7c9aa0 72.2px, #a8e8d0 72.2px, #a8e8d0 74.2px, #7c9aa0 74.2px,#7c9aa0 76.1px, #a8e8d0 76.1px, #a8e8d0 77.3px, #7c9aa0 77.3px,#7c9aa0 78.6px, #98b8c0 78.6px, #98b8c0 79.6px, #7c9aa0 79.6px,#7c9aa0 83.2px, #98b8c0 83.2px, #98b8c0 84.6px, #7c9aa0 84.6px,#7c9aa0 85.7px, #a8e8d0 85.7px, #a8e8d0 87.9px, #7c9aa0 87.9px,#7c9aa0 89.8px, #98b8c0 89.8px, #98b8c0 92.3px, #7c9aa0 92.3px,#7c9aa0 93.9px, #b8e0f0 93.9px, #b8e0f0 96.0px, #7c9aa0 96.0px,#7c9aa0 98.4px, #98b8c0 98.4px, #98b8c0 99.3px, #7c9aa0 99.3px,#7c9aa0 102.2px, #b8e0f0 102.2px, #b8e0f0 104.2px, #7c9aa0 104.2px,#7c9aa0 107.7px, #98b8c0 107.7px, #98b8c0 109.9px, #7c9aa0 109.9px,#7c9aa0 111.0px, #b8e0f0 111.0px, #b8e0f0 113.4px, #7c9aa0 113.4px,#7c9aa0 116.3px, #98b8c0 116.3px, #98b8c0 117.0px, #7c9aa0 117.0px,#7c9aa0 100%);"></div>
<div style="left:427px;top:512px;width:51px;height:16px;background:linear-gradient(90deg,#80948c 0,#80948c 1.4px, #c8a8c8 1.4px, #c8a8c8 2.2px, #80948c 2.2px,#80948c 5.9px, #b8e8d0 5.9px, #b8e8d0 7.0px, #80948c 7.0px,#80948c 10.5px, #d8e8b8 10.5px, #d8e8b8 11.6px, #80948c 11.6px,#80948c 15.9px, #c8a8c8 15.9px, #c8a8c8 17.3px, #80948c 17.3px,#80948c 17.8px, #b8e8d0 17.8px, #b8e8d0 20.4px, #80948c 20.4px,#80948c 22.9px, #c8a8c8 22.9px, #c8a8c8 24.1px, #80948c 24.1px,#80948c 25.4px, #d8e8b8 25.4px, #d8e8b8 26.3px, #80948c 26.3px,#80948c 30.4px, #c8a8c8 30.4px, #c8a8c8 32.4px, #80948c 32.4px,#80948c 34.0px, #c8a8c8 34.0px, #c8a8c8 35.4px, #80948c 35.4px,#80948c 38.4px, #b8e8d0 38.4px, #b8e8d0 39.7px, #80948c 39.7px,#80948c 43.3px, #c8a8c8 43.3px, #c8a8c8 45.5px, #80948c 45.5px,#80948c 48.7px, #b8e8d0 48.7px, #b8e8d0 50.4px, #80948c 50.4px,#80948c 100%);"></div>
<div style="left:478px;top:512px;width:23px;height:16px;background:linear-gradient(90deg,#9a8090 0,#9a8090 2.1px, #e8c0d8 2.1px, #e8c0d8 3.5px, #9a8090 3.5px,#9a8090 5.0px, #e8c0d8 5.0px, #e8c0d8 5.9px, #9a8090 5.9px,#9a8090 9.3px, #e8c0d8 9.3px, #e8c0d8 11.6px, #9a8090 11.6px,#9a8090 15.0px, #e8c0d8 15.0px, #e8c0d8 16.7px, #9a8090 16.7px,#9a8090 18.0px, #e8c0d8 18.0px, #e8c0d8 19.7px, #9a8090 19.7px,#9a8090 22.9px, #f5b8d8 22.9px, #f5b8d8 23.0px, #9a8090 23.0px,#9a8090 100%);"></div>
<div style="left:501px;top:512px;width:42px;height:16px;background:linear-gradient(90deg,#8a9090 0,#8a9090 0.9px, #b8e8d0 0.9px, #b8e8d0 2.3px, #8a9090 2.3px,#8a9090 5.9px, #f5b8d8 5.9px, #f5b8d8 6.8px, #8a9090 6.8px,#8a9090 10.4px, #b8e8d0 10.4px, #b8e8d0 11.3px, #8a9090 11.3px,#8a9090 14.8px, #f5b8d8 14.8px, #f5b8d8 16.3px, #8a9090 16.3px,#8a9090 18.3px, #f5b8d8 18.3px, #f5b8d8 20.1px, #8a9090 20.1px,#8a9090 21.9px, #b8e8d0 21.9px, #b8e8d0 23.9px, #8a9090 23.9px,#8a9090 27.4px, #f5b8d8 27.4px, #f5b8d8 28.8px, #8a9090 28.8px,#8a9090 30.6px, #f5b8d8 30.6px, #f5b8d8 31.8px, #8a9090 31.8px,#8a9090 33.3px, #f5b8d8 33.3px, #f5b8d8 35.3px, #8a9090 35.3px,#8a9090 39.2px, #b8e8d0 39.2px, #b8e8d0 41.3px, #8a9090 41.3px,#8a9090 100%);"></div>
<div style="left:543px;top:512px;width:10px;height:16px;background:linear-gradient(90deg,#9a8090 0,#9a8090 1.0px, #f5b8d8 1.0px, #f5b8d8 3.6px, #9a8090 3.6px,#9a8090 6.4px, #f5b8d8 6.4px, #f5b8d8 8.6px, #9a8090 8.6px,#9a8090 100%);"></div>
<div style="left:553px;top:512px;width:14px;height:16px;background:linear-gradient(90deg,#80948c 0,#80948c 1.5px, #b8e8d0 1.5px, #b8e8d0 2.4px, #80948c 2.4px,#80948c 4.8px, #b8e8d0 4.8px, #b8e8d0 5.8px, #80948c 5.8px,#80948c 9.0px, #b8e8d0 9.0px, #b8e8d0 10.4px, #80948c 10.4px,#80948c 12.7px, #b8e8d0 12.7px, #b8e8d0 13.8px, #80948c 13.8px,#80948c 100%);"></div>
<div style="left:427px;top:529px;width:20px;height:16px;background:linear-gradient(90deg,#9a8a98 0,#9a8a98 1.2px, #f0b8d8 1.2px, #f0b8d8 2.2px, #9a8a98 2.2px,#9a8a98 4.4px, #f0b8d8 4.4px, #f0b8d8 7.0px, #9a8a98 7.0px,#9a8a98 7.8px, #e8c8e0 7.8px, #e8c8e0 8.7px, #9a8a98 8.7px,#9a8a98 9.7px, #f0b8d8 9.7px, #f0b8d8 11.2px, #9a8a98 11.2px,#9a8a98 12.8px, #f0b8d8 12.8px, #f0b8d8 14.6px, #9a8a98 14.6px,#9a8a98 17.3px, #f0b8d8 17.3px, #f0b8d8 18.3px, #9a8a98 18.3px,#9a8a98 100%);"></div>
<div style="left:447px;top:529px;width:20px;height:16px;background:linear-gradient(90deg,#8a9082 0,#8a9082 0.9px, #d8e8b8 0.9px, #d8e8b8 3.2px, #8a9082 3.2px,#8a9082 6.0px, #b8c8e8 6.0px, #b8c8e8 8.3px, #8a9082 8.3px,#8a9082 9.2px, #b8c8e8 9.2px, #b8c8e8 10.6px, #8a9082 10.6px,#8a9082 12.1px, #d8e8b8 12.1px, #d8e8b8 14.0px, #8a9082 14.0px,#8a9082 14.5px, #b8c8e8 14.5px, #b8c8e8 17.0px, #8a9082 17.0px,#8a9082 19.8px, #b8c8e8 19.8px, #b8c8e8 20.0px, #8a9082 20.0px,#8a9082 100%);"></div>
<div style="left:468px;top:529px;width:99px;height:16px;background:linear-gradient(90deg,#8a9078 0,#8a9078 3.8px, #f4f8c0 3.8px, #f4f8c0 5.4px, #8a9078 5.4px,#8a9078 6.0px, #f4f8c0 6.0px, #f4f8c0 7.9px, #8a9078 7.9px,#8a9078 9.2px, #e8f0b8 9.2px, #e8f0b8 10.2px, #8a9078 10.2px,#8a9078 14.4px, #f4f8c0 14.4px, #f4f8c0 16.8px, #8a9078 16.8px,#8a9078 19.7px, #e8f0b8 19.7px, #e8f0b8 22.1px, #8a9078 22.1px,#8a9078 23.8px, #e8f0b8 23.8px, #e8f0b8 26.3px, #8a9078 26.3px,#8a9078 28.6px, #f4f8c0 28.6px, #f4f8c0 30.1px, #8a9078 30.1px,#8a9078 32.3px, #f4f8c0 32.3px, #f4f8c0 34.8px, #8a9078 34.8px,#8a9078 39.2px, #f4f8c0 39.2px, #f4f8c0 40.4px, #8a9078 40.4px,#8a9078 44.5px, #e8f0b8 44.5px, #e8f0b8 45.4px, #8a9078 45.4px,#8a9078 47.5px, #f4f8c0 47.5px, #f4f8c0 49.7px, #8a9078 49.7px,#8a9078 52.8px, #e8f0b8 52.8px, #e8f0b8 54.5px, #8a9078 54.5px,#8a9078 55.8px, #e8f0b8 55.8px, #e8f0b8 57.2px, #8a9078 57.2px,#8a9078 60.3px, #f4f8c0 60.3px, #f4f8c0 61.9px, #8a9078 61.9px,#8a9078 65.6px, #e8f0b8 65.6px, #e8f0b8 66.7px, #8a9078 66.7px,#8a9078 67.6px, #f4f8c0 67.6px, #f4f8c0 69.2px, #8a9078 69.2px,#8a9078 72.8px, #f4f8c0 72.8px, #f4f8c0 75.4px, #8a9078 75.4px,#8a9078 76.2px, #e8f0b8 76.2px, #e8f0b8 77.0px, #8a9078 77.0px,#8a9078 77.7px, #e8f0b8 77.7px, #e8f0b8 79.2px, #8a9078 79.2px,#8a9078 83.3px, #e8f0b8 83.3px, #e8f0b8 84.9px, #8a9078 84.9px,#8a9078 87.6px, #e8f0b8 87.6px, #e8f0b8 88.6px, #8a9078 88.6px,#8a9078 90.9px, #f4f8c0 90.9px, #f4f8c0 92.1px, #8a9078 92.1px,#8a9078 95.7px, #f4f8c0 95.7px, #f4f8c0 97.4px, #8a9078 97.4px,#8a9078 98.1px, #e8f0b8 98.1px, #e8f0b8 99.0px, #8a9078 99.0px,#8a9078 100%);"></div>
<div style="left:427px;top:546px;width:23px;height:16px;background:linear-gradient(90deg,#9898b0 0,#9898b0 2.4px, #d8d8f8 2.4px, #d8d8f8 4.7px, #9898b0 4.7px,#9898b0 5.2px, #d8d8f8 5.2px, #d8d8f8 6.7px, #9898b0 6.7px,#9898b0 7.8px, #c8c8f0 7.8px, #c8c8f0 9.3px, #9898b0 9.3px,#9898b0 10.0px, #d8d8f8 10.0px, #d8d8f8 12.5px, #9898b0 12.5px,#9898b0 13.6px, #d8d8f8 13.6px, #d8d8f8 15.4px, #9898b0 15.4px,#9898b0 17.9px, #e8f0b8 17.9px, #e8f0b8 20.1px, #9898b0 20.1px,#9898b0 20.5px, #e8f0b8 20.5px, #e8f0b8 21.8px, #9898b0 21.8px,#9898b0 100%);"></div>
<div style="left:450px;top:546px;width:17px;height:16px;background:linear-gradient(90deg,#8a9080 0,#8a9080 3.2px, #e8f0b8 3.2px, #e8f0b8 4.5px, #8a9080 4.5px,#8a9080 8.2px, #e8f0b8 8.2px, #e8f0b8 9.9px, #8a9080 9.9px,#8a9080 12.4px, #e8f0b8 12.4px, #e8f0b8 13.6px, #8a9080 13.6px,#8a9080 100%);"></div>
<div style="left:468px;top:546px;width:55px;height:16px;background:linear-gradient(90deg,#8a9078 0,#8a9078 1.2px, #e8f0b8 1.2px, #e8f0b8 3.5px, #8a9078 3.5px,#8a9078 6.9px, #f4f8c0 6.9px, #f4f8c0 8.2px, #8a9078 8.2px,#8a9078 8.8px, #f4f8c0 8.8px, #f4f8c0 9.8px, #8a9078 9.8px,#8a9078 13.8px, #e8f0b8 13.8px, #e8f0b8 16.2px, #8a9078 16.2px,#8a9078 18.7px, #e8f0b8 18.7px, #e8f0b8 20.4px, #8a9078 20.4px,#8a9078 23.6px, #e8f0b8 23.6px, #e8f0b8 24.9px, #8a9078 24.9px,#8a9078 25.8px, #f4f8c0 25.8px, #f4f8c0 26.9px, #8a9078 26.9px,#8a9078 28.8px, #e8f0b8 28.8px, #e8f0b8 31.0px, #8a9078 31.0px,#8a9078 34.1px, #f4f8c0 34.1px, #f4f8c0 36.0px, #8a9078 36.0px,#8a9078 38.7px, #e8f0b8 38.7px, #e8f0b8 41.1px, #8a9078 41.1px,#8a9078 45.3px, #e8f0b8 45.3px, #e8f0b8 46.8px, #8a9078 46.8px,#8a9078 47.6px, #f4f8c0 47.6px, #f4f8c0 49.1px, #8a9078 49.1px,#8a9078 51.7px, #f4f8c0 51.7px, #f4f8c0 53.1px, #8a9078 53.1px,#8a9078 54.7px, #f4f8c0 54.7px, #f4f8c0 55.0px, #8a9078 55.0px,#8a9078 100%);"></div>
<div style="left:523px;top:546px;width:10px;height:16px;background:linear-gradient(90deg,#8a9080 0,#8a9080 1.8px, #e8f0b8 1.8px, #e8f0b8 3.4px, #8a9080 3.4px,#8a9080 5.2px, #e8f0b8 5.2px, #e8f0b8 6.4px, #8a9080 6.4px,#8a9080 100%);"></div>
<div style="left:533px;top:546px;width:34px;height:16px;background:linear-gradient(90deg,#8a9078 0,#8a9078 3.1px, #f4f8c0 3.1px, #f4f8c0 5.2px, #8a9078 5.2px,#8a9078 7.4px, #e8f0b8 7.4px, #e8f0b8 9.0px, #8a9078 9.0px,#8a9078 11.7px, #f4f8c0 11.7px, #f4f8c0 12.9px, #8a9078 12.9px,#8a9078 14.5px, #f4f8c0 14.5px, #f4f8c0 16.2px, #8a9078 16.2px,#8a9078 18.0px, #e8f0b8 18.0px, #e8f0b8 19.1px, #8a9078 19.1px,#8a9078 23.0px, #e8f0b8 23.0px, #e8f0b8 25.1px, #8a9078 25.1px,#8a9078 28.5px, #e8f0b8 28.5px, #e8f0b8 29.9px, #8a9078 29.9px,#8a9078 32.8px, #f4f8c0 32.8px, #f4f8c0 34.0px, #8a9078 34.0px,#8a9078 100%);"></div>
<div style="left:427px;top:563px;width:20px;height:16px;background:linear-gradient(90deg,#909888 0,#909888 1.5px, #e8f0b8 1.5px, #e8f0b8 3.0px, #909888 3.0px,#909888 5.9px, #e8f0b8 5.9px, #e8f0b8 8.0px, #909888 8.0px,#909888 9.6px, #d8e8a8 9.6px, #d8e8a8 11.5px, #909888 11.5px,#909888 13.6px, #e8f0b8 13.6px, #e8f0b8 15.0px, #909888 15.0px,#909888 17.4px, #d8e8a8 17.4px, #d8e8a8 19.2px, #909888 19.2px,#909888 100%);"></div>
<div style="left:447px;top:563px;width:6px;height:16px;background:linear-gradient(90deg,#8a8a98 0,#8a8a98 1.9px, #c8c8e8 1.9px, #c8c8e8 4.2px, #8a8a98 4.2px,#8a8a98 100%);"></div>
<div style="left:453px;top:563px;width:60px;height:16px;background:linear-gradient(90deg,#8a9078 0,#8a9078 14.4px, #9aa088 14.4px, #9aa088 16.1px, #8a9078 16.1px,#8a9078 22.9px, #9aa088 22.9px, #9aa088 24.2px, #8a9078 24.2px,#8a9078 41.1px, #9aa088 41.1px, #9aa088 43.7px, #8a9078 43.7px,#8a9078 100%);"></div>
<div style="left:513px;top:563px;width:10px;height:16px;background:linear-gradient(90deg,#8a9078 0,#8a9078 2.4px, #c8c8e8 2.4px, #c8c8e8 4.3px, #8a9078 4.3px,#8a9078 100%);"></div>
<div style="left:523px;top:563px;width:44px;height:16px;background:linear-gradient(90deg,#868c74 0,#868c74 13.3px, #9aa088 13.3px, #9aa088 15.2px, #868c74 15.2px,#868c74 30.9px, #9aa088 30.9px, #9aa088 31.8px, #868c74 31.8px,#868c74 40.5px, #9aa088 40.5px, #9aa088 42.0px, #868c74 42.0px,#868c74 100%);"></div>
<div style="left:427px;top:580px;width:20px;height:7px;background:linear-gradient(90deg,#9898a8 0,#9898a8 3.5px, #c8c8e8 3.5px, #c8c8e8 5.6px, #9898a8 5.6px,#9898a8 8.6px, #c8c8e8 8.6px, #c8c8e8 10.8px, #9898a8 10.8px,#9898a8 11.3px, #c8c8e8 11.3px, #c8c8e8 12.8px, #9898a8 12.8px,#9898a8 13.8px, #c8c8e8 13.8px, #c8c8e8 14.7px, #9898a8 14.7px,#9898a8 15.2px, #c8c8e8 15.2px, #c8c8e8 17.0px, #9898a8 17.0px,#9898a8 18.6px, #c8c8e8 18.6px, #c8c8e8 20.0px, #9898a8 20.0px,#9898a8 100%);"></div>
<div style="left:447px;top:580px;width:6px;height:7px;background:linear-gradient(90deg,#8a9080 0,#8a9080 100%);"></div>
<div style="left:453px;top:580px;width:60px;height:7px;background:linear-gradient(90deg,#868c74 0,#868c74 27.3px, #9aa088 27.3px, #9aa088 28.3px, #868c74 28.3px,#868c74 45.6px, #9aa088 45.6px, #9aa088 46.7px, #868c74 46.7px,#868c74 100%);"></div>
<div style="left:513px;top:580px;width:10px;height:7px;background:linear-gradient(90deg,#858a72 0,#858a72 8.3px, #9aa088 8.3px, #9aa088 10.0px, #858a72 10.0px,#858a72 100%);"></div>
<div style="left:525px;top:580px;width:42px;height:7px;background:linear-gradient(90deg,#868c74 0,#868c74 11.8px, #9aa088 11.8px, #9aa088 14.3px, #868c74 14.3px,#868c74 26.5px, #9aa088 26.5px, #9aa088 29.0px, #868c74 29.0px,#868c74 100%);"></div>
<div style="left:470px;top:444px;width:1px;height:16px;background:#2b2d33;"></div>
<div style="left:512px;top:444px;width:1px;height:16px;background:#2b2d33;"></div>
<div style="left:501px;top:461px;width:1px;height:16px;background:#2b2d33;"></div>
<div style="left:543px;top:461px;width:1px;height:16px;background:#2b2d33;"></div>
<div style="left:553px;top:461px;width:1px;height:16px;background:#2b2d33;"></div>
<div style="left:501px;top:478px;width:1px;height:16px;background:#2b2d33;"></div>
<div style="left:553px;top:478px;width:1px;height:16px;background:#2b2d33;"></div>
<div style="left:501px;top:495px;width:1px;height:16px;background:#2b2d33;"></div>
<div style="left:553px;top:495px;width:1px;height:16px;background:#2b2d33;"></div>
<div style="left:501px;top:512px;width:1px;height:16px;background:#2b2d33;"></div>
<div style="left:543px;top:512px;width:1px;height:16px;background:#2b2d33;"></div>
<div style="left:548px;top:512px;width:1px;height:16px;background:#2b2d33;"></div>
<div style="left:553px;top:512px;width:1px;height:16px;background:#2b2d33;"></div>
<div style="left:467px;top:529px;width:1px;height:16px;background:#2b2d33;"></div>
<div style="left:450px;top:546px;width:1px;height:16px;background:#2b2d33;"></div>
<div style="left:467px;top:546px;width:1px;height:16px;background:#2b2d33;"></div>
<div style="left:523px;top:546px;width:1px;height:16px;background:#2b2d33;"></div>
<div style="left:533px;top:546px;width:1px;height:16px;background:#2b2d33;"></div>
<div style="left:453px;top:563px;width:1px;height:16px;background:#2b2d33;"></div>
<div style="left:513px;top:563px;width:1px;height:16px;background:#2b2d33;"></div>
<div style="left:523px;top:563px;width:1px;height:16px;background:#2b2d33;"></div>
<div style="left:453px;top:580px;width:1px;height:7px;background:#2b2d33;"></div>
<div style="left:513px;top:580px;width:1px;height:7px;background:#2b2d33;"></div>
<div style="left:523px;top:580px;width:1px;height:7px;background:#2b2d33;"></div>
<div style="left:422px;top:461px;width:4px;height:16px;background:#c9a820;"></div>
<div style="left:422.5px;top:478px;width:1.5px;height:16px;background:#a08a30;"></div>
<div style="left:424px;top:478px;width:3px;height:16px;background:#23252c;"></div>
<div style="left:425px;top:478px;width:1px;height:16px;background:#6a7a78;"></div>
<div style="left:422.5px;top:495px;width:1.5px;height:16px;background:#a08a30;"></div>
<div style="left:424px;top:495px;width:3px;height:16px;background:#23252c;"></div>
<div style="left:425px;top:495px;width:1px;height:16px;background:#6a7a78;"></div>
<div style="left:422.5px;top:512px;width:1.5px;height:16px;background:#a08a30;"></div>
<div style="left:424px;top:512px;width:3px;height:16px;background:#23252c;"></div>
<div style="left:425px;top:512px;width:1px;height:16px;background:#6a7a78;"></div>
<div style="left:422.5px;top:529px;width:1.5px;height:16px;background:#a08a30;"></div>
<div style="left:424px;top:529px;width:3px;height:16px;background:#23252c;"></div>
<div style="left:425px;top:529px;width:1px;height:16px;background:#6a7a78;"></div>
<div style="left:422.5px;top:546px;width:1.5px;height:16px;background:#a08a30;"></div>
<div style="left:424px;top:546px;width:3px;height:16px;background:#23252c;"></div>
<div style="left:425px;top:546px;width:1px;height:16px;background:#6a7a78;"></div>
<div style="left:422.5px;top:563px;width:1.5px;height:16px;background:#a08a30;"></div>
<div style="left:424px;top:563px;width:3px;height:16px;background:#23252c;"></div>
<div style="left:425px;top:563px;width:1px;height:16px;background:#6a7a78;"></div>
<div style="left:422.5px;top:580px;width:1.5px;height:7px;background:#a08a30;"></div>
<div style="left:424px;top:580px;width:3px;height:7px;background:#23252c;"></div>
<div style="left:425px;top:580px;width:1px;height:7px;background:#6a7a78;"></div>
<div style="left:568px;top:410px;width:117px;height:16px;background:repeating-linear-gradient(135deg,#85868c 0 2px,#b5484b 2px 3.8px);"></div>
<svg style="left:677.0px;top:410px" width="8" height="8" viewBox="0 0 8 8"><path d="M0 0 H8 V8Z" fill="#ff0000"/></svg>
<div class="t" style="left:572.50px;top:412.14px;font-size:12px;color:#5b2e33;font-weight:normal;letter-spacing:0.578px;-webkit-text-stroke:0.08px currentColor;">Task</div>
<div style="left:568px;top:427px;width:117px;height:16px;background:#f9c80e;"></div>
<div class="t" style="left:575.00px;top:429.34px;font-size:12px;color:#202124;font-weight:normal;letter-spacing:-0.075px;-webkit-text-stroke:0.08px currentColor;">Function call</div>
<div style="left:568px;top:444px;width:117px;height:16px;background:linear-gradient(90deg,#6e8f87 0,#6e8f87 0.8px, #94c0b4 0.8px, #94c0b4 2.5px, #6e8f87 2.5px,#6e8f87 3.7px, #c0fbe9 3.7px, #c0fbe9 5.6px, #6e8f87 5.6px,#6e8f87 8.3px, #94c0b4 8.3px, #94c0b4 9.7px, #6e8f87 9.7px,#6e8f87 11.6px, #b5f5e5 11.6px, #b5f5e5 13.5px, #6e8f87 13.5px,#6e8f87 14.9px, #b5f5e5 14.9px, #b5f5e5 16.4px, #6e8f87 16.4px,#6e8f87 17.2px, #b5f5e5 17.2px, #b5f5e5 19.0px, #6e8f87 19.0px,#6e8f87 21.4px, #94c0b4 21.4px, #94c0b4 22.7px, #6e8f87 22.7px,#6e8f87 25.3px, #c0fbe9 25.3px, #c0fbe9 26.5px, #6e8f87 26.5px,#6e8f87 26.9px, #c0fbe9 26.9px, #c0fbe9 28.1px, #6e8f87 28.1px,#6e8f87 30.4px, #c0fbe9 30.4px, #c0fbe9 32.1px, #6e8f87 32.1px,#6e8f87 32.5px, #b5f5e5 32.5px, #b5f5e5 34.3px, #6e8f87 34.3px,#6e8f87 35.0px, #c0fbe9 35.0px, #c0fbe9 37.0px, #6e8f87 37.0px,#6e8f87 37.8px, #c0fbe9 37.8px, #c0fbe9 39.6px, #6e8f87 39.6px,#6e8f87 41.4px, #b5f5e5 41.4px, #b5f5e5 42.3px, #6e8f87 42.3px,#6e8f87 44.0px, #b5f5e5 44.0px, #b5f5e5 45.9px, #6e8f87 45.9px,#6e8f87 48.5px, #94c0b4 48.5px, #94c0b4 49.5px, #6e8f87 49.5px,#6e8f87 52.0px, #94c0b4 52.0px, #94c0b4 53.8px, #6e8f87 53.8px,#6e8f87 57.1px, #94c0b4 57.1px, #94c0b4 57.8px, #6e8f87 57.8px,#6e8f87 59.5px, #b5f5e5 59.5px, #b5f5e5 61.4px, #6e8f87 61.4px,#6e8f87 62.8px, #94c0b4 62.8px, #94c0b4 63.6px, #6e8f87 63.6px,#6e8f87 65.1px, #c0fbe9 65.1px, #c0fbe9 66.3px, #6e8f87 66.3px,#6e8f87 68.1px, #c0fbe9 68.1px, #c0fbe9 69.2px, #6e8f87 69.2px,#6e8f87 70.7px, #b5f5e5 70.7px, #b5f5e5 71.3px, #6e8f87 71.3px,#6e8f87 72.1px, #c0fbe9 72.1px, #c0fbe9 73.9px, #6e8f87 73.9px,#6e8f87 74.2px, #94c0b4 74.2px, #94c0b4 74.9px, #6e8f87 74.9px,#6e8f87 77.5px, #94c0b4 77.5px, #94c0b4 78.4px, #6e8f87 78.4px,#6e8f87 79.7px, #b5f5e5 79.7px, #b5f5e5 81.8px, #6e8f87 81.8px,#6e8f87 82.7px, #c0fbe9 82.7px, #c0fbe9 83.6px, #6e8f87 83.6px,#6e8f87 86.4px, #94c0b4 86.4px, #94c0b4 87.5px, #6e8f87 87.5px,#6e8f87 90.6px, #b5f5e5 90.6px, #b5f5e5 91.5px, #6e8f87 91.5px,#6e8f87 92.1px, #c0fbe9 92.1px, #c0fbe9 94.0px, #6e8f87 94.0px,#6e8f87 95.4px, #94c0b4 95.4px, #94c0b4 97.1px, #6e8f87 97.1px,#6e8f87 99.0px, #b5f5e5 99.0px, #b5f5e5 100.6px, #6e8f87 100.6px,#6e8f87 102.1px, #94c0b4 102.1px, #94c0b4 104.3px, #6e8f87 104.3px,#6e8f87 106.4px, #c0fbe9 106.4px, #c0fbe9 108.4px, #6e8f87 108.4px,#6e8f87 110.2px, #b5f5e5 110.2px, #b5f5e5 111.9px, #6e8f87 111.9px,#6e8f87 112.7px, #c0fbe9 112.7px, #c0fbe9 113.4px, #6e8f87 113.4px,#6e8f87 116.0px, #c0fbe9 116.0px, #c0fbe9 117.0px, #6e8f87 117.0px,#6e8f87 100%);"></div>
<div style="left:568px;top:461px;width:117px;height:16px;background:linear-gradient(90deg,#6e8f87 0,#6e8f87 3.8px, #b5f5e5 3.8px, #b5f5e5 4.7px, #6e8f87 4.7px,#6e8f87 7.3px, #94c0b4 7.3px, #94c0b4 8.6px, #6e8f87 8.6px,#6e8f87 9.4px, #c0fbe9 9.4px, #c0fbe9 11.1px, #6e8f87 11.1px,#6e8f87 14.3px, #c0fbe9 14.3px, #c0fbe9 15.1px, #6e8f87 15.1px,#6e8f87 18.9px, #94c0b4 18.9px, #94c0b4 20.0px, #6e8f87 20.0px,#6e8f87 21.1px, #94c0b4 21.1px, #94c0b4 22.5px, #6e8f87 22.5px,#6e8f87 26.3px, #b5f5e5 26.3px, #b5f5e5 28.0px, #6e8f87 28.0px,#6e8f87 30.5px, #c0fbe9 30.5px, #c0fbe9 31.1px, #6e8f87 31.1px,#6e8f87 32.6px, #b5f5e5 32.6px, #b5f5e5 33.5px, #6e8f87 33.5px,#6e8f87 36.0px, #94c0b4 36.0px, #94c0b4 38.1px, #6e8f87 38.1px,#6e8f87 38.8px, #c0fbe9 38.8px, #c0fbe9 39.9px, #6e8f87 39.9px,#6e8f87 41.2px, #c0fbe9 41.2px, #c0fbe9 43.3px, #6e8f87 43.3px,#6e8f87 47.0px, #94c0b4 47.0px, #94c0b4 49.0px, #6e8f87 49.0px,#6e8f87 51.2px, #c0fbe9 51.2px, #c0fbe9 52.3px, #6e8f87 52.3px,#6e8f87 55.1px, #b5f5e5 55.1px, #b5f5e5 56.0px, #6e8f87 56.0px,#6e8f87 57.6px, #c0fbe9 57.6px, #c0fbe9 59.7px, #6e8f87 59.7px,#6e8f87 63.4px, #94c0b4 63.4px, #94c0b4 64.8px, #6e8f87 64.8px,#6e8f87 68.4px, #b5f5e5 68.4px, #b5f5e5 69.6px, #6e8f87 69.6px,#6e8f87 71.1px, #94c0b4 71.1px, #94c0b4 72.3px, #6e8f87 72.3px,#6e8f87 72.8px, #94c0b4 72.8px, #94c0b4 74.3px, #6e8f87 74.3px,#6e8f87 76.7px, #94c0b4 76.7px, #94c0b4 78.0px, #6e8f87 78.0px,#6e8f87 81.6px, #b5f5e5 81.6px, #b5f5e5 82.9px, #6e8f87 82.9px,#6e8f87 86.9px, #c0fbe9 86.9px, #c0fbe9 88.0px, #6e8f87 88.0px,#6e8f87 91.3px, #b5f5e5 91.3px, #b5f5e5 92.0px, #6e8f87 92.0px,#6e8f87 94.2px, #b5f5e5 94.2px, #b5f5e5 95.4px, #6e8f87 95.4px,#6e8f87 97.5px, #b5f5e5 97.5px, #b5f5e5 98.4px, #6e8f87 98.4px,#6e8f87 100.8px, #c0fbe9 100.8px, #c0fbe9 101.9px, #6e8f87 101.9px,#6e8f87 105.6px, #c0fbe9 105.6px, #c0fbe9 107.2px, #6e8f87 107.2px,#6e8f87 107.7px, #94c0b4 107.7px, #94c0b4 109.2px, #6e8f87 109.2px,#6e8f87 112.3px, #b5f5e5 112.3px, #b5f5e5 113.9px, #6e8f87 113.9px,#6e8f87 114.5px, #b5f5e5 114.5px, #b5f5e5 115.8px, #6e8f87 115.8px,#6e8f87 100%);"></div>
<div style="left:568px;top:478px;width:117px;height:16px;background:linear-gradient(90deg,#9a7d8c 0,#9a7d8c 3.4px, #f7b8dc 3.4px, #f7b8dc 5.5px, #9a7d8c 5.5px,#9a7d8c 5.9px, #ffc8e6 5.9px, #ffc8e6 7.0px, #9a7d8c 7.0px,#9a7d8c 9.1px, #f7b8dc 9.1px, #f7b8dc 9.9px, #9a7d8c 9.9px,#9a7d8c 11.1px, #c898b0 11.1px, #c898b0 11.7px, #9a7d8c 11.7px,#9a7d8c 13.5px, #f7b8dc 13.5px, #f7b8dc 14.2px, #9a7d8c 14.2px,#9a7d8c 17.7px, #f7b8dc 17.7px, #f7b8dc 19.1px, #9a7d8c 19.1px,#9a7d8c 21.1px, #ffc8e6 21.1px, #ffc8e6 22.9px, #9a7d8c 22.9px,#9a7d8c 25.8px, #f7b8dc 25.8px, #f7b8dc 26.7px, #9a7d8c 26.7px,#9a7d8c 29.0px, #c898b0 29.0px, #c898b0 30.6px, #9a7d8c 30.6px,#9a7d8c 31.7px, #c898b0 31.7px, #c898b0 33.5px, #9a7d8c 33.5px,#9a7d8c 36.3px, #c898b0 36.3px, #c898b0 37.5px, #9a7d8c 37.5px,#9a7d8c 38.7px, #c898b0 38.7px, #c898b0 40.9px, #9a7d8c 40.9px,#9a7d8c 41.5px, #c898b0 41.5px, #c898b0 42.9px, #9a7d8c 42.9px,#9a7d8c 44.8px, #c898b0 44.8px, #c898b0 46.7px, #9a7d8c 46.7px,#9a7d8c 49.1px, #f7b8dc 49.1px, #f7b8dc 50.0px, #9a7d8c 50.0px,#9a7d8c 52.1px, #c898b0 52.1px, #c898b0 53.8px, #9a7d8c 53.8px,#9a7d8c 54.8px, #f7b8dc 54.8px, #f7b8dc 55.6px, #9a7d8c 55.6px,#9a7d8c 57.3px, #c898b0 57.3px, #c898b0 58.8px, #9a7d8c 58.8px,#9a7d8c 60.1px, #f7b8dc 60.1px, #f7b8dc 61.6px, #9a7d8c 61.6px,#9a7d8c 63.2px, #ffc8e6 63.2px, #ffc8e6 64.3px, #9a7d8c 64.3px,#9a7d8c 67.5px, #f7b8dc 67.5px, #f7b8dc 68.8px, #9a7d8c 68.8px,#9a7d8c 70.0px, #f7b8dc 70.0px, #f7b8dc 70.8px, #9a7d8c 70.8px,#9a7d8c 73.5px, #f7b8dc 73.5px, #f7b8dc 75.4px, #9a7d8c 75.4px,#9a7d8c 76.8px, #c898b0 76.8px, #c898b0 77.6px, #9a7d8c 77.6px,#9a7d8c 79.9px, #f7b8dc 79.9px, #f7b8dc 82.0px, #9a7d8c 82.0px,#9a7d8c 83.8px, #c898b0 83.8px, #c898b0 84.5px, #9a7d8c 84.5px,#9a7d8c 86.2px, #f7b8dc 86.2px, #f7b8dc 86.8px, #9a7d8c 86.8px,#9a7d8c 89.4px, #c898b0 89.4px, #c898b0 91.6px, #9a7d8c 91.6px,#9a7d8c 95.0px, #ffc8e6 95.0px, #ffc8e6 96.5px, #9a7d8c 96.5px,#9a7d8c 99.3px, #ffc8e6 99.3px, #ffc8e6 100.4px, #9a7d8c 100.4px,#9a7d8c 102.4px, #ffc8e6 102.4px, #ffc8e6 103.0px, #9a7d8c 103.0px,#9a7d8c 104.9px, #ffc8e6 104.9px, #ffc8e6 105.8px, #9a7d8c 105.8px,#9a7d8c 109.3px, #f7b8dc 109.3px, #f7b8dc 110.2px, #9a7d8c 110.2px,#9a7d8c 112.4px, #c898b0 112.4px, #c898b0 114.0px, #9a7d8c 114.0px,#9a7d8c 116.1px, #ffc8e6 116.1px, #ffc8e6 117.0px, #9a7d8c 117.0px,#9a7d8c 100%);"></div>
<div style="left:568px;top:495px;width:117px;height:16px;background:linear-gradient(90deg,#88906f 0,#88906f 3.0px, #e9f0b0 3.0px, #e9f0b0 4.9px, #88906f 4.9px,#88906f 6.1px, #e9f0b0 6.1px, #e9f0b0 7.0px, #88906f 7.0px,#88906f 9.8px, #e9f0b0 9.8px, #e9f0b0 10.5px, #88906f 10.5px,#88906f 13.8px, #e9f0b0 13.8px, #e9f0b0 14.9px, #88906f 14.9px,#88906f 16.9px, #b0b88a 16.9px, #b0b88a 18.9px, #88906f 18.9px,#88906f 19.7px, #f4f8c0 19.7px, #f4f8c0 21.1px, #88906f 21.1px,#88906f 24.2px, #f4f8c0 24.2px, #f4f8c0 25.5px, #88906f 25.5px,#88906f 27.7px, #b0b88a 27.7px, #b0b88a 29.9px, #88906f 29.9px,#88906f 33.0px, #e9f0b0 33.0px, #e9f0b0 34.9px, #88906f 34.9px,#88906f 37.8px, #e9f0b0 37.8px, #e9f0b0 39.9px, #88906f 39.9px,#88906f 42.3px, #e9f0b0 42.3px, #e9f0b0 43.5px, #88906f 43.5px,#88906f 47.2px, #b0b88a 47.2px, #b0b88a 48.3px, #88906f 48.3px,#88906f 49.0px, #b0b88a 49.0px, #b0b88a 49.7px, #88906f 49.7px,#88906f 52.3px, #f4f8c0 52.3px, #f4f8c0 53.1px, #88906f 53.1px,#88906f 56.6px, #b0b88a 56.6px, #b0b88a 57.6px, #88906f 57.6px,#88906f 59.0px, #b0b88a 59.0px, #b0b88a 59.9px, #88906f 59.9px,#88906f 62.1px, #e9f0b0 62.1px, #e9f0b0 63.0px, #88906f 63.0px,#88906f 64.5px, #b0b88a 64.5px, #b0b88a 65.4px, #88906f 65.4px,#88906f 69.3px, #b0b88a 69.3px, #b0b88a 70.2px, #88906f 70.2px,#88906f 71.5px, #e9f0b0 71.5px, #e9f0b0 72.9px, #88906f 72.9px,#88906f 75.2px, #b0b88a 75.2px, #b0b88a 76.2px, #88906f 76.2px,#88906f 77.1px, #b0b88a 77.1px, #b0b88a 78.2px, #88906f 78.2px,#88906f 80.9px, #f4f8c0 80.9px, #f4f8c0 82.2px, #88906f 82.2px,#88906f 84.0px, #f4f8c0 84.0px, #f4f8c0 85.4px, #88906f 85.4px,#88906f 86.7px, #b0b88a 86.7px, #b0b88a 87.6px, #88906f 87.6px,#88906f 90.9px, #e9f0b0 90.9px, #e9f0b0 92.1px, #88906f 92.1px,#88906f 95.7px, #f4f8c0 95.7px, #f4f8c0 96.4px, #88906f 96.4px,#88906f 99.3px, #e9f0b0 99.3px, #e9f0b0 100.6px, #88906f 100.6px,#88906f 101.2px, #b0b88a 101.2px, #b0b88a 103.3px, #88906f 103.3px,#88906f 105.2px, #f4f8c0 105.2px, #f4f8c0 106.4px, #88906f 106.4px,#88906f 108.9px, #f4f8c0 108.9px, #f4f8c0 110.2px, #88906f 110.2px,#88906f 113.6px, #f4f8c0 113.6px, #f4f8c0 114.6px, #88906f 114.6px,#88906f 116.1px, #e9f0b0 116.1px, #e9f0b0 117.0px, #88906f 117.0px,#88906f 100%);"></div>
<div style="left:568px;top:512px;width:117px;height:16px;background:linear-gradient(90deg,#88906f 0,#88906f 1.8px, #e9f0b0 1.8px, #e9f0b0 3.8px, #88906f 3.8px,#88906f 5.0px, #b0b88a 5.0px, #b0b88a 7.0px, #88906f 7.0px,#88906f 9.1px, #f4f8c0 9.1px, #f4f8c0 11.1px, #88906f 11.1px,#88906f 11.6px, #e9f0b0 11.6px, #e9f0b0 13.1px, #88906f 13.1px,#88906f 15.6px, #b0b88a 15.6px, #b0b88a 16.4px, #88906f 16.4px,#88906f 19.5px, #b0b88a 19.5px, #b0b88a 20.4px, #88906f 20.4px,#88906f 21.9px, #b0b88a 21.9px, #b0b88a 24.0px, #88906f 24.0px,#88906f 25.7px, #e9f0b0 25.7px, #e9f0b0 27.0px, #88906f 27.0px,#88906f 30.6px, #b0b88a 30.6px, #b0b88a 32.5px, #88906f 32.5px,#88906f 33.3px, #f4f8c0 33.3px, #f4f8c0 34.8px, #88906f 34.8px,#88906f 36.5px, #b0b88a 36.5px, #b0b88a 38.2px, #88906f 38.2px,#88906f 40.2px, #b0b88a 40.2px, #b0b88a 40.9px, #88906f 40.9px,#88906f 41.6px, #b0b88a 41.6px, #b0b88a 43.2px, #88906f 43.2px,#88906f 46.8px, #e9f0b0 46.8px, #e9f0b0 47.4px, #88906f 47.4px,#88906f 48.1px, #f4f8c0 48.1px, #f4f8c0 49.6px, #88906f 49.6px,#88906f 53.1px, #f4f8c0 53.1px, #f4f8c0 54.4px, #88906f 54.4px,#88906f 57.1px, #f4f8c0 57.1px, #f4f8c0 58.7px, #88906f 58.7px,#88906f 59.3px, #f4f8c0 59.3px, #f4f8c0 61.2px, #88906f 61.2px,#88906f 62.2px, #f4f8c0 62.2px, #f4f8c0 64.4px, #88906f 64.4px,#88906f 67.1px, #f4f8c0 67.1px, #f4f8c0 68.4px, #88906f 68.4px,#88906f 72.2px, #b0b88a 72.2px, #b0b88a 73.5px, #88906f 73.5px,#88906f 75.1px, #e9f0b0 75.1px, #e9f0b0 75.8px, #88906f 75.8px,#88906f 76.7px, #e9f0b0 76.7px, #e9f0b0 77.6px, #88906f 77.6px,#88906f 81.2px, #e9f0b0 81.2px, #e9f0b0 83.0px, #88906f 83.0px,#88906f 86.8px, #f4f8c0 86.8px, #f4f8c0 88.8px, #88906f 88.8px,#88906f 89.9px, #b0b88a 89.9px, #b0b88a 91.5px, #88906f 91.5px,#88906f 94.8px, #f4f8c0 94.8px, #f4f8c0 96.2px, #88906f 96.2px,#88906f 97.7px, #f4f8c0 97.7px, #f4f8c0 99.1px, #88906f 99.1px,#88906f 101.2px, #f4f8c0 101.2px, #f4f8c0 102.5px, #88906f 102.5px,#88906f 104.1px, #e9f0b0 104.1px, #e9f0b0 106.3px, #88906f 106.3px,#88906f 109.8px, #f4f8c0 109.8px, #f4f8c0 110.9px, #88906f 110.9px,#88906f 114.2px, #b0b88a 114.2px, #b0b88a 115.9px, #88906f 115.9px,#88906f 100%);"></div>
<div style="left:568px;top:529px;width:117px;height:16px;background:#858a72;"></div>
<div style="left:570px;top:546px;width:115px;height:16px;background:#858a72;"></div>
<div style="left:609px;top:563px;width:1.5px;height:16px;background:#858a72;"></div>
<div style="left:625px;top:563px;width:1.5px;height:16px;background:#858a72;"></div>
<div style="left:640px;top:563px;width:1.5px;height:16px;background:#858a72;"></div>
<div style="left:560px;top:444px;width:8px;height:16px;background:linear-gradient(90deg,#6e8f87 0,#6e8f87 4.6px, #9ab0a8 4.6px, #9ab0a8 5.6px, #6e8f87 5.6px,#6e8f87 100%);"></div>
<div style="left:685px;top:410px;width:15px;height:16px;background:#5a5e66;"></div>
<div style="left:685px;top:410px;width:6px;height:8px;background:#ff0000;"></div>
<div style="left:693px;top:410px;width:6px;height:8px;background:#ff0000;"></div>
<div style="left:687px;top:427px;width:8px;height:16px;background:#f9c80e;"></div>
<div style="left:687px;top:444px;width:8px;height:16px;background:#f9c80e;"></div>
<div style="left:687px;top:461px;width:8px;height:16px;background:#f9c80e;"></div>
<div style="left:685px;top:478px;width:15px;height:16px;background:linear-gradient(90deg,#62706c 0,#62706c 2.6px, #9aa8a0 2.6px, #9aa8a0 4.1px, #62706c 4.1px,#62706c 8.2px, #c9a820 8.2px, #c9a820 10.2px, #62706c 10.2px,#62706c 14.5px, #c9a820 14.5px, #c9a820 15.0px, #62706c 15.0px,#62706c 100%);"></div>
<div style="left:685px;top:495px;width:15px;height:16px;background:linear-gradient(90deg,#62706c 0,#62706c 2.7px, #c9a820 2.7px, #c9a820 4.5px, #62706c 4.5px,#62706c 8.4px, #c9a820 8.4px, #c9a820 9.5px, #62706c 9.5px,#62706c 12.2px, #c9a820 12.2px, #c9a820 14.0px, #62706c 14.0px,#62706c 100%);"></div>
<div style="left:685px;top:512px;width:15px;height:16px;background:linear-gradient(90deg,#62706c 0,#62706c 1.8px, #c9a820 1.8px, #c9a820 4.0px, #62706c 4.0px,#62706c 7.9px, #9aa8a0 7.9px, #9aa8a0 8.5px, #62706c 8.5px,#62706c 10.0px, #a888a8 10.0px, #a888a8 11.8px, #62706c 11.8px,#62706c 13.7px, #b5f5e5 13.7px, #b5f5e5 14.7px, #62706c 14.7px,#62706c 100%);"></div>
<div style="left:685px;top:529px;width:15px;height:16px;background:linear-gradient(90deg,#62706c 0,#62706c 3.2px, #b5f5e5 3.2px, #b5f5e5 4.0px, #62706c 4.0px,#62706c 7.0px, #b5f5e5 7.0px, #b5f5e5 8.2px, #62706c 8.2px,#62706c 12.6px, #c9a820 12.6px, #c9a820 13.9px, #62706c 13.9px,#62706c 100%);"></div>
<div style="left:685px;top:546px;width:15px;height:16px;background:linear-gradient(90deg,#62706c 0,#62706c 3.0px, #b5f5e5 3.0px, #b5f5e5 4.3px, #62706c 4.3px,#62706c 5.0px, #c9a820 5.0px, #c9a820 6.8px, #62706c 6.8px,#62706c 7.4px, #c9a820 7.4px, #c9a820 9.1px, #62706c 9.1px,#62706c 10.8px, #c9a820 10.8px, #c9a820 12.6px, #62706c 12.6px,#62706c 14.9px, #a888a8 14.9px, #a888a8 15.0px, #62706c 15.0px,#62706c 100%);"></div>
<div style="left:685px;top:563px;width:15px;height:16px;background:linear-gradient(90deg,#62706c 0,#62706c 1.3px, #9aa8a0 1.3px, #9aa8a0 2.5px, #62706c 2.5px,#62706c 3.9px, #b5f5e5 3.9px, #b5f5e5 5.6px, #62706c 5.6px,#62706c 8.7px, #c9a820 8.7px, #c9a820 9.7px, #62706c 9.7px,#62706c 13.0px, #b5f5e5 13.0px, #b5f5e5 15.0px, #62706c 15.0px,#62706c 100%);"></div>
<div style="left:685px;top:580px;width:15px;height:7px;background:linear-gradient(90deg,#62706c 0,#62706c 2.3px, #b5f5e5 2.3px, #b5f5e5 4.3px, #62706c 4.3px,#62706c 5.8px, #9aa8a0 5.8px, #9aa8a0 7.4px, #62706c 7.4px,#62706c 8.4px, #a888a8 8.4px, #a888a8 9.5px, #62706c 9.5px,#62706c 13.3px, #9aa8a0 13.3px, #9aa8a0 14.8px, #62706c 14.8px,#62706c 100%);"></div>
<div style="left:696px;top:427px;width:4px;height:50px;background:#8aa8a0;"></div>
<div style="left:700.8px;top:410px;width:82.0px;height:16px;background:repeating-linear-gradient(135deg,#85868c 0 2px,#b5484b 2px 3.8px);"></div>
<svg style="left:774.8px;top:410px" width="8" height="8" viewBox="0 0 8 8"><path d="M0 0 H8 V8Z" fill="#ff0000"/></svg>
<div class="t" style="left:705.30px;top:412.14px;font-size:12px;color:#5b2e33;font-weight:normal;letter-spacing:0.578px;-webkit-text-stroke:0.08px currentColor;">Task</div>
<div style="left:700.8px;top:427px;width:82.0px;height:16px;background:#f9c80e;"></div>
<div class="t" style="left:707.80px;top:429.34px;font-size:12px;color:#202124;font-weight:normal;letter-spacing:-0.578px;-webkit-text-stroke:0.08px currentColor;">Run m…tasks</div>
<div style="left:700.8px;top:444px;width:82.0px;height:16px;background:#f2c4e4;"></div>
<div class="t" style="left:708.50px;top:446.34px;font-size:12px;color:#202124;font-weight:normal;letter-spacing:-0.139px;-webkit-text-stroke:0.08px currentColor;">(anonymous)</div>
<div style="left:700.8px;top:461px;width:82.0px;height:16px;background:#c4f0f0;"></div>
<div class="t" style="left:708.50px;top:463.34px;font-size:12px;color:#7a8688;font-weight:normal;letter-spacing:-0.095px;-webkit-text-stroke:0.08px currentColor;">On ig…ode:)</div>
<div style="left:700.8px;top:478px;width:82.0px;height:16px;background:#e5eac8;"></div>
<div class="t" style="left:708.50px;top:480.34px;font-size:12px;color:#202124;font-weight:normal;letter-spacing:-0.139px;-webkit-text-stroke:0.08px currentColor;">(anonymous)</div>
<div style="left:700.8px;top:495px;width:82.0px;height:16px;background:#c5eed8;"></div>
<div class="t" style="left:708.50px;top:497.34px;font-size:12px;color:#7a8688;font-weight:normal;letter-spacing:-0.095px;-webkit-text-stroke:0.08px currentColor;">On ig…ode:)</div>
<div style="left:700.8px;top:512px;width:82.0px;height:16px;background:#ede5c5;"></div>
<div class="t" style="left:708.50px;top:514.34px;font-size:12px;color:#202124;font-weight:normal;letter-spacing:-0.139px;-webkit-text-stroke:0.08px currentColor;">(anonymous)</div>
<div style="left:700.8px;top:529px;width:82.0px;height:16px;background:#c5e4ee;"></div>
<div class="t" style="left:708.50px;top:531.34px;font-size:12px;color:#202124;font-weight:normal;letter-spacing:0.000px;-webkit-text-stroke:0.08px currentColor;">s</div>
<div style="left:700.8px;top:546px;width:82.0px;height:16px;background:#c4f0f0;"></div>
<div class="t" style="left:708.50px;top:548.34px;font-size:12px;color:#7a8688;font-weight:normal;letter-spacing:-0.095px;-webkit-text-stroke:0.08px currentColor;">On ig…ode:)</div>
<div style="left:700.8px;top:563px;width:82.0px;height:16px;background:#c8e2ee;"></div>
<div class="t" style="left:708.50px;top:565.34px;font-size:12px;color:#202124;font-weight:normal;letter-spacing:-0.139px;-webkit-text-stroke:0.08px currentColor;">(anonymous)</div>
<div style="left:700.8px;top:580px;width:82.0px;height:7px;background:#c5e4ee;"></div>
<div style="left:786px;top:410px;width:94px;height:16px;background:repeating-linear-gradient(135deg,#85868c 0 2px,#b5484b 2px 3.8px);"></div>
<svg style="left:872.0px;top:410px" width="8" height="8" viewBox="0 0 8 8"><path d="M0 0 H8 V8Z" fill="#ff0000"/></svg>
<div class="t" style="left:790.50px;top:412.14px;font-size:12px;color:#5b2e33;font-weight:normal;letter-spacing:0.578px;-webkit-text-stroke:0.08px currentColor;">Task</div>
<div style="left:786px;top:427px;width:68.29999999999995px;height:16px;background:#f9c80e;"></div>
<div class="t" style="left:793.00px;top:429.34px;font-size:12px;color:#202124;font-weight:normal;letter-spacing:0.097px;-webkit-text-stroke:0.08px currentColor;">Funct…call</div>
<div style="left:855px;top:427px;width:23px;height:16px;background:#f9c80e;"></div>
<div style="left:786px;top:444px;width:69px;height:16px;background:linear-gradient(90deg,#6e8f87 0,#6e8f87 1.3px, #b5f5e5 1.3px, #b5f5e5 2.3px, #6e8f87 2.3px,#6e8f87 5.0px, #e8f8f0 5.0px, #e8f8f0 6.3px, #6e8f87 6.3px,#6e8f87 7.3px, #e8f8f0 7.3px, #e8f8f0 8.4px, #6e8f87 8.4px,#6e8f87 10.7px, #b5f5e5 10.7px, #b5f5e5 11.3px, #6e8f87 11.3px,#6e8f87 13.4px, #c0fbe9 13.4px, #c0fbe9 15.4px, #6e8f87 15.4px,#6e8f87 18.2px, #e8f8f0 18.2px, #e8f8f0 20.4px, #6e8f87 20.4px,#6e8f87 21.6px, #e8f8f0 21.6px, #e8f8f0 22.6px, #6e8f87 22.6px,#6e8f87 24.6px, #e8f8f0 24.6px, #e8f8f0 25.2px, #6e8f87 25.2px,#6e8f87 25.6px, #e8f8f0 25.6px, #e8f8f0 27.6px, #6e8f87 27.6px,#6e8f87 28.5px, #e8f8f0 28.5px, #e8f8f0 30.3px, #6e8f87 30.3px,#6e8f87 31.9px, #b5f5e5 31.9px, #b5f5e5 33.3px, #6e8f87 33.3px,#6e8f87 34.0px, #e8f8f0 34.0px, #e8f8f0 36.0px, #6e8f87 36.0px,#6e8f87 38.8px, #c0fbe9 38.8px, #c0fbe9 39.7px, #6e8f87 39.7px,#6e8f87 40.8px, #e8f8f0 40.8px, #e8f8f0 42.4px, #6e8f87 42.4px,#6e8f87 44.3px, #b5f5e5 44.3px, #b5f5e5 45.6px, #6e8f87 45.6px,#6e8f87 46.7px, #e8f8f0 46.7px, #e8f8f0 47.5px, #6e8f87 47.5px,#6e8f87 48.1px, #e8f8f0 48.1px, #e8f8f0 48.7px, #6e8f87 48.7px,#6e8f87 50.3px, #b5f5e5 50.3px, #b5f5e5 51.6px, #6e8f87 51.6px,#6e8f87 52.1px, #e8f8f0 52.1px, #e8f8f0 52.8px, #6e8f87 52.8px,#6e8f87 54.2px, #c0fbe9 54.2px, #c0fbe9 55.6px, #6e8f87 55.6px,#6e8f87 57.4px, #e8f8f0 57.4px, #e8f8f0 59.4px, #6e8f87 59.4px,#6e8f87 61.0px, #b5f5e5 61.0px, #b5f5e5 61.8px, #6e8f87 61.8px,#6e8f87 64.1px, #e8f8f0 64.1px, #e8f8f0 65.8px, #6e8f87 65.8px,#6e8f87 68.5px, #b5f5e5 68.5px, #b5f5e5 69.0px, #6e8f87 69.0px,#6e8f87 100%);"></div>
<div style="left:855px;top:444px;width:25px;height:16px;background:#3f5b9e;"></div>
<div style="left:865px;top:444px;width:2px;height:8px;background:#e03040;"></div>
<div style="left:871px;top:444px;width:2px;height:8px;background:#e03040;"></div>
<div style="left:786px;top:461px;width:69px;height:16px;background:linear-gradient(90deg,#8a9282 0,#8a9282 2.4px, #c0fbe9 2.4px, #c0fbe9 3.1px, #8a9282 3.1px,#8a9282 4.2px, #b5f5e5 4.2px, #b5f5e5 5.0px, #8a9282 5.0px,#8a9282 7.6px, #b5f5e5 7.6px, #b5f5e5 9.6px, #8a9282 9.6px,#8a9282 11.9px, #b5f5e5 11.9px, #b5f5e5 12.6px, #8a9282 12.6px,#8a9282 13.6px, #b5f5e5 13.6px, #b5f5e5 15.0px, #8a9282 15.0px,#8a9282 17.2px, #a8a898 17.2px, #a8a898 19.0px, #8a9282 19.0px,#8a9282 20.0px, #b5f5e5 20.0px, #b5f5e5 21.6px, #8a9282 21.6px,#8a9282 24.4px, #a8a898 24.4px, #a8a898 25.2px, #8a9282 25.2px,#8a9282 26.7px, #c0fbe9 26.7px, #c0fbe9 27.6px, #8a9282 27.6px,#8a9282 28.2px, #c0fbe9 28.2px, #c0fbe9 29.5px, #8a9282 29.5px,#8a9282 32.6px, #b5f5e5 32.6px, #b5f5e5 34.1px, #8a9282 34.1px,#8a9282 36.9px, #a8a898 36.9px, #a8a898 38.3px, #8a9282 38.3px,#8a9282 38.9px, #c0fbe9 38.9px, #c0fbe9 40.0px, #8a9282 40.0px,#8a9282 42.2px, #b5f5e5 42.2px, #b5f5e5 44.0px, #8a9282 44.0px,#8a9282 46.5px, #b5f5e5 46.5px, #b5f5e5 48.3px, #8a9282 48.3px,#8a9282 51.4px, #a8a898 51.4px, #a8a898 53.4px, #8a9282 53.4px,#8a9282 54.7px, #c0fbe9 54.7px, #c0fbe9 56.3px, #8a9282 56.3px,#8a9282 57.2px, #c0fbe9 57.2px, #c0fbe9 58.3px, #8a9282 58.3px,#8a9282 61.0px, #b5f5e5 61.0px, #b5f5e5 62.7px, #8a9282 62.7px,#8a9282 65.0px, #f0e8d8 65.0px, #f0e8d8 65.9px, #8a9282 65.9px,#8a9282 66.8px, #f0e8d8 66.8px, #f0e8d8 68.0px, #8a9282 68.0px,#8a9282 100%);"></div>
<div style="left:855px;top:461px;width:25px;height:16px;background:#7a4fa8;"></div>
<div style="left:786px;top:478px;width:64px;height:16px;background:linear-gradient(90deg,#967f8c 0,#967f8c 0.4px, #ffc8e6 0.4px, #ffc8e6 2.2px, #967f8c 2.2px,#967f8c 5.3px, #f7b8dc 5.3px, #f7b8dc 6.5px, #967f8c 6.5px,#967f8c 8.2px, #f7b8dc 8.2px, #f7b8dc 9.6px, #967f8c 9.6px,#967f8c 11.4px, #e8d0f0 11.4px, #e8d0f0 12.9px, #967f8c 12.9px,#967f8c 14.4px, #f7b8dc 14.4px, #f7b8dc 15.1px, #967f8c 15.1px,#967f8c 17.8px, #f7b8dc 17.8px, #f7b8dc 19.0px, #967f8c 19.0px,#967f8c 19.8px, #ffc8e6 19.8px, #ffc8e6 21.8px, #967f8c 21.8px,#967f8c 24.4px, #b8d8e8 24.4px, #b8d8e8 25.9px, #967f8c 25.9px,#967f8c 28.0px, #f7b8dc 28.0px, #f7b8dc 29.2px, #967f8c 29.2px,#967f8c 31.2px, #f7b8dc 31.2px, #f7b8dc 32.1px, #967f8c 32.1px,#967f8c 34.9px, #f7b8dc 34.9px, #f7b8dc 36.0px, #967f8c 36.0px,#967f8c 37.8px, #f7b8dc 37.8px, #f7b8dc 38.6px, #967f8c 38.6px,#967f8c 39.2px, #b8d8e8 39.2px, #b8d8e8 40.8px, #967f8c 40.8px,#967f8c 42.1px, #e8d0f0 42.1px, #e8d0f0 43.8px, #967f8c 43.8px,#967f8c 44.6px, #b8d8e8 44.6px, #b8d8e8 46.5px, #967f8c 46.5px,#967f8c 47.0px, #b8d8e8 47.0px, #b8d8e8 48.6px, #967f8c 48.6px,#967f8c 51.0px, #f7b8dc 51.0px, #f7b8dc 52.7px, #967f8c 52.7px,#967f8c 55.9px, #f7b8dc 55.9px, #f7b8dc 57.4px, #967f8c 57.4px,#967f8c 58.6px, #b8d8e8 58.6px, #b8d8e8 60.6px, #967f8c 60.6px,#967f8c 63.0px, #e8d0f0 63.0px, #e8d0f0 63.7px, #967f8c 63.7px,#967f8c 100%);"></div>
<div style="left:786px;top:495px;width:64px;height:16px;background:linear-gradient(90deg,#88906f 0,#88906f 1.9px, #e9f0b0 1.9px, #e9f0b0 3.3px, #88906f 3.3px,#88906f 4.4px, #e9f0b0 4.4px, #e9f0b0 5.3px, #88906f 5.3px,#88906f 6.5px, #e9f0b0 6.5px, #e9f0b0 8.1px, #88906f 8.1px,#88906f 9.0px, #f4f8c0 9.0px, #f4f8c0 10.4px, #88906f 10.4px,#88906f 13.3px, #f4f8c0 13.3px, #f4f8c0 14.5px, #88906f 14.5px,#88906f 17.7px, #f4f8c0 17.7px, #f4f8c0 19.4px, #88906f 19.4px,#88906f 20.0px, #c8a8c8 20.0px, #c8a8c8 22.0px, #88906f 22.0px,#88906f 23.0px, #c8a8c8 23.0px, #c8a8c8 24.4px, #88906f 24.4px,#88906f 25.1px, #e9f0b0 25.1px, #e9f0b0 27.2px, #88906f 27.2px,#88906f 31.0px, #f4f8c0 31.0px, #f4f8c0 33.0px, #88906f 33.0px,#88906f 33.5px, #f4f8c0 33.5px, #f4f8c0 34.7px, #88906f 34.7px,#88906f 36.8px, #e9f0b0 36.8px, #e9f0b0 37.7px, #88906f 37.7px,#88906f 39.0px, #e9f0b0 39.0px, #e9f0b0 40.0px, #88906f 40.0px,#88906f 40.6px, #c8a8c8 40.6px, #c8a8c8 42.7px, #88906f 42.7px,#88906f 44.7px, #c8a8c8 44.7px, #c8a8c8 45.4px, #88906f 45.4px,#88906f 48.3px, #f4f8c0 48.3px, #f4f8c0 50.2px, #88906f 50.2px,#88906f 52.0px, #f4f8c0 52.0px, #f4f8c0 53.3px, #88906f 53.3px,#88906f 55.8px, #e9f0b0 55.8px, #e9f0b0 57.3px, #88906f 57.3px,#88906f 59.4px, #c8a8c8 59.4px, #c8a8c8 61.6px, #88906f 61.6px,#88906f 100%);"></div>
<div style="left:786px;top:512px;width:64px;height:16px;background:linear-gradient(90deg,#88906f 0,#88906f 1.4px, #e9f0b0 1.4px, #e9f0b0 2.8px, #88906f 2.8px,#88906f 4.3px, #f4f8c0 4.3px, #f4f8c0 4.9px, #88906f 4.9px,#88906f 5.3px, #e9f0b0 5.3px, #e9f0b0 6.4px, #88906f 6.4px,#88906f 10.2px, #c8a8c8 10.2px, #c8a8c8 12.2px, #88906f 12.2px,#88906f 12.7px, #e9f0b0 12.7px, #e9f0b0 14.3px, #88906f 14.3px,#88906f 15.7px, #e9f0b0 15.7px, #e9f0b0 17.7px, #88906f 17.7px,#88906f 18.9px, #c8a8c8 18.9px, #c8a8c8 20.8px, #88906f 20.8px,#88906f 22.8px, #e9f0b0 22.8px, #e9f0b0 24.4px, #88906f 24.4px,#88906f 27.3px, #e9f0b0 27.3px, #e9f0b0 29.4px, #88906f 29.4px,#88906f 30.9px, #c8a8c8 30.9px, #c8a8c8 32.1px, #88906f 32.1px,#88906f 36.0px, #e9f0b0 36.0px, #e9f0b0 36.7px, #88906f 36.7px,#88906f 37.2px, #f4f8c0 37.2px, #f4f8c0 38.3px, #88906f 38.3px,#88906f 41.2px, #c8a8c8 41.2px, #c8a8c8 43.3px, #88906f 43.3px,#88906f 46.1px, #c8a8c8 46.1px, #c8a8c8 48.1px, #88906f 48.1px,#88906f 50.7px, #f4f8c0 50.7px, #f4f8c0 52.4px, #88906f 52.4px,#88906f 55.0px, #f4f8c0 55.0px, #f4f8c0 55.7px, #88906f 55.7px,#88906f 59.4px, #c8a8c8 59.4px, #c8a8c8 60.5px, #88906f 60.5px,#88906f 63.8px, #c8a8c8 63.8px, #c8a8c8 64.0px, #88906f 64.0px,#88906f 100%);"></div>
<div style="left:786px;top:529px;width:11px;height:16px;background:linear-gradient(90deg,#967f8c 0,#967f8c 3.2px, #f7b8dc 3.2px, #f7b8dc 4.5px, #967f8c 4.5px,#967f8c 6.9px, #f7b8dc 6.9px, #f7b8dc 7.7px, #967f8c 7.7px,#967f8c 8.2px, #f7b8dc 8.2px, #f7b8dc 10.0px, #967f8c 10.0px,#967f8c 100%);"></div>
<div style="left:805px;top:529px;width:45px;height:16px;background:#858a72;"></div>
<div style="left:786px;top:546px;width:11px;height:16px;background:linear-gradient(90deg,#88906f 0,#88906f 1.9px, #e9f0b0 1.9px, #e9f0b0 3.2px, #88906f 3.2px,#88906f 5.9px, #e9f0b0 5.9px, #e9f0b0 6.9px, #88906f 6.9px,#88906f 9.0px, #e9f0b0 9.0px, #e9f0b0 9.6px, #88906f 9.6px,#88906f 100%);"></div>
<div style="left:809px;top:546px;width:41px;height:16px;background:#858a72;"></div>
<div style="left:786px;top:563px;width:14px;height:16px;background:linear-gradient(90deg,#88906f 0,#88906f 3.6px, #b0a8c8 3.6px, #b0a8c8 4.4px, #88906f 4.4px,#88906f 9.3px, #b0a8c8 9.3px, #b0a8c8 10.7px, #88906f 10.7px,#88906f 12.2px, #b0a8c8 12.2px, #b0a8c8 14.0px, #88906f 14.0px,#88906f 100%);"></div>
<div style="left:786px;top:580px;width:14px;height:7px;background:linear-gradient(90deg,#88906f 0,#88906f 1.0px, #b0a8c8 1.0px, #b0a8c8 2.2px, #88906f 2.2px,#88906f 4.6px, #b0a8c8 4.6px, #b0a8c8 6.1px, #88906f 6.1px,#88906f 10.3px, #b0a8c8 10.3px, #b0a8c8 12.1px, #88906f 12.1px,#88906f 13.6px, #b0a8c8 13.6px, #b0a8c8 14.0px, #88906f 14.0px,#88906f 100%);"></div>
<div style="left:880px;top:410px;width:3px;height:16px;background:#3d4046;"></div>
<div style="left:889px;top:410px;width:26px;height:16px;background:#54575e;"></div>
<div style="left:915px;top:410px;width:20px;height:16px;background:#5a5d64;"></div>
<div style="left:883px;top:410px;width:6px;height:16px;background:repeating-linear-gradient(135deg,#85868c 0 2px,#b5484b 2px 3.8px);"></div>
<svg style="left:883px;top:410px" width="6" height="8" viewBox="0 0 6 8"><path d="M0 0 H6 V8Z" fill="#ff0000"/></svg>
<div style="left:880px;top:410px;width:3px;height:8px;background:#ff0000;"></div>
<div style="left:882px;top:427px;width:34px;height:16px;background:#a08e30;"></div>
<div style="left:882px;top:427px;width:4px;height:16px;background:#3cc15a;"></div>
<div style="left:886px;top:427px;width:3px;height:16px;background:#6a7a50;"></div>
<div style="left:890px;top:427px;width:2px;height:16px;background:#7a5aa8;"></div>
<div style="left:892px;top:427px;width:2px;height:16px;background:#58705a;"></div>
<div style="left:912px;top:427px;width:2px;height:16px;background:#3cc15a;"></div>
<div style="left:914px;top:427px;width:2px;height:16px;background:#6a7a70;"></div>
<div style="left:882px;top:444px;width:4px;height:16px;background:#3cc15a;"></div>
<div style="left:886px;top:444px;width:7px;height:16px;background:#8a8a3a;"></div>
<div style="left:893px;top:444px;width:19px;height:16px;background:#55585f;"></div>
<div style="left:912px;top:444px;width:4px;height:16px;background:#6a7a78;"></div>
<div style="left:882px;top:461px;width:34px;height:16px;background:linear-gradient(90deg,#50606a 0,#50606a 2.8px, #c8d8d8 2.8px, #c8d8d8 3.6px, #50606a 3.6px,#50606a 4.7px, #6a7a80 4.7px, #6a7a80 6.7px, #50606a 6.7px,#50606a 8.0px, #c8d8d8 8.0px, #c8d8d8 9.4px, #50606a 9.4px,#50606a 11.6px, #9aa8a8 11.6px, #9aa8a8 13.6px, #50606a 13.6px,#50606a 15.9px, #c8d8d8 15.9px, #c8d8d8 16.6px, #50606a 16.6px,#50606a 18.1px, #b09a30 18.1px, #b09a30 18.8px, #50606a 18.8px,#50606a 20.5px, #b09a30 20.5px, #b09a30 22.6px, #50606a 22.6px,#50606a 24.4px, #b09a30 24.4px, #b09a30 25.2px, #50606a 25.2px,#50606a 28.0px, #c8d8d8 28.0px, #c8d8d8 30.2px, #50606a 30.2px,#50606a 32.9px, #3cc15a 32.9px, #3cc15a 34.0px, #50606a 34.0px,#50606a 100%);"></div>
<div style="left:882px;top:478px;width:6px;height:16px;background:#7a4fa8;"></div>
<div style="left:889px;top:478px;width:2px;height:16px;background:#a08e30;"></div>
<div style="left:911px;top:478px;width:2px;height:16px;background:#a08e30;"></div>
<div style="left:883px;top:495px;width:5px;height:16px;background:#a08e30;"></div>
<div style="left:911px;top:495px;width:2px;height:16px;background:#a08e30;"></div>
<div style="left:883px;top:512px;width:1.5px;height:16px;background:#a08e30;"></div>
<div style="left:883px;top:529px;width:1.5px;height:16px;background:#a08e30;"></div>
<div style="left:889px;top:546px;width:1.5px;height:16px;background:#a08e30;"></div>
<div style="left:850px;top:478px;width:1.2px;height:16px;background:#5f7370;"></div>
<div style="left:893px;top:478px;width:1.2px;height:16px;background:#5f7370;"></div>
<div style="left:906.5px;top:478px;width:1.2px;height:16px;background:#5f7370;"></div>
<div style="left:915px;top:478px;width:1.2px;height:16px;background:#5f7370;"></div>
<div style="left:852.5px;top:478px;width:1.2px;height:16px;background:#9a8a3a;"></div>
<div style="left:850px;top:495px;width:1.2px;height:16px;background:#5f7370;"></div>
<div style="left:893px;top:495px;width:1.2px;height:16px;background:#5f7370;"></div>
<div style="left:906.5px;top:495px;width:1.2px;height:16px;background:#5f7370;"></div>
<div style="left:915px;top:495px;width:1.2px;height:16px;background:#5f7370;"></div>
<div style="left:852.5px;top:495px;width:1.2px;height:16px;background:#9a8a3a;"></div>
<div style="left:850px;top:512px;width:1.2px;height:16px;background:#5f7370;"></div>
<div style="left:893px;top:512px;width:1.2px;height:16px;background:#5f7370;"></div>
<div style="left:906.5px;top:512px;width:1.2px;height:16px;background:#5f7370;"></div>
<div style="left:915px;top:512px;width:1.2px;height:16px;background:#5f7370;"></div>
<div style="left:852.5px;top:512px;width:1.2px;height:16px;background:#9a8a3a;"></div>
<div style="left:850px;top:529px;width:1.2px;height:16px;background:#5f7370;"></div>
<div style="left:893px;top:529px;width:1.2px;height:16px;background:#5f7370;"></div>
<div style="left:906.5px;top:529px;width:1.2px;height:16px;background:#5f7370;"></div>
<div style="left:915px;top:529px;width:1.2px;height:16px;background:#5f7370;"></div>
<div style="left:852.5px;top:529px;width:1.2px;height:16px;background:#9a8a3a;"></div>
<div style="left:850px;top:546px;width:1.2px;height:16px;background:#5f7370;"></div>
<div style="left:893px;top:546px;width:1.2px;height:16px;background:#5f7370;"></div>
<div style="left:906.5px;top:546px;width:1.2px;height:16px;background:#5f7370;"></div>
<div style="left:915px;top:546px;width:1.2px;height:16px;background:#5f7370;"></div>
<div style="left:852.5px;top:546px;width:1.2px;height:16px;background:#9a8a3a;"></div>
<div style="left:850px;top:563px;width:1.2px;height:16px;background:#5f7370;"></div>
<div style="left:893px;top:563px;width:1.2px;height:16px;background:#5f7370;"></div>
<div style="left:906.5px;top:563px;width:1.2px;height:16px;background:#5f7370;"></div>
<div style="left:915px;top:563px;width:1.2px;height:16px;background:#5f7370;"></div>
<div style="left:852.5px;top:563px;width:1.2px;height:16px;background:#9a8a3a;"></div>
<div style="left:850px;top:580px;width:1.2px;height:7px;background:#5f7370;"></div>
<div style="left:893px;top:580px;width:1.2px;height:7px;background:#5f7370;"></div>
<div style="left:906.5px;top:580px;width:1.2px;height:7px;background:#5f7370;"></div>
<div style="left:915px;top:580px;width:1.2px;height:7px;background:#5f7370;"></div>
<div style="left:852.5px;top:580px;width:1.2px;height:7px;background:#9a8a3a;"></div>
<div style="left:851px;top:461px;width:11px;height:16px;background:#8a7a40;"></div>
<div style="left:862px;top:461px;width:18px;height:16px;background:#7a4fa8;"></div>
<div style="left:851px;top:478px;width:2px;height:16px;background:#7a4fa8;"></div>
<div style="left:935px;top:410px;width:52px;height:16px;background:repeating-linear-gradient(135deg,#85868c 0 2px,#b5484b 2px 3.8px);"></div>
<svg style="left:979.0px;top:410px" width="8" height="8" viewBox="0 0 8 8"><path d="M0 0 H8 V8Z" fill="#ff0000"/></svg>
<div class="t" style="left:939.50px;top:412.14px;font-size:12px;color:#5b2e33;font-weight:normal;letter-spacing:0.578px;-webkit-text-stroke:0.08px currentColor;">Task</div>
<div style="left:935px;top:427px;width:52px;height:16px;background:#f9c80e;"></div>
<div class="t" style="left:942.00px;top:429.34px;font-size:12px;color:#202124;font-weight:normal;letter-spacing:-0.669px;-webkit-text-stroke:0.08px currentColor;">Run…ks</div>
<div style="left:935px;top:444px;width:52px;height:16px;background:#f2c4e4;"></div>
<div class="t" style="left:942.50px;top:446.34px;font-size:12px;color:#202124;font-weight:normal;letter-spacing:-0.891px;-webkit-text-stroke:0.08px currentColor;">(an…s)</div>
<div style="left:935px;top:461px;width:52px;height:16px;background:#c4f0f0;"></div>
<div class="t" style="left:942.50px;top:463.34px;font-size:12px;color:#7a8688;font-weight:normal;letter-spacing:-1.337px;-webkit-text-stroke:0.08px currentColor;">On …e:)</div>
<div style="left:935px;top:478px;width:52px;height:16px;background:#e5eac8;"></div>
<div class="t" style="left:942.50px;top:480.34px;font-size:12px;color:#202124;font-weight:normal;letter-spacing:-0.891px;-webkit-text-stroke:0.08px currentColor;">(an…s)</div>
<div style="left:935px;top:495px;width:52px;height:16px;background:#c5eed8;"></div>
<div class="t" style="left:942.50px;top:497.34px;font-size:12px;color:#7a8688;font-weight:normal;letter-spacing:-1.337px;-webkit-text-stroke:0.08px currentColor;">On …e:)</div>
<div style="left:935px;top:512px;width:52px;height:16px;background:#ede5c5;"></div>
<div class="t" style="left:942.50px;top:514.34px;font-size:12px;color:#202124;font-weight:normal;letter-spacing:-0.891px;-webkit-text-stroke:0.08px currentColor;">(an…s)</div>
<div style="left:935px;top:529px;width:52px;height:16px;background:#c5e4ee;"></div>
<div class="t" style="left:942.50px;top:531.34px;font-size:12px;color:#202124;font-weight:normal;letter-spacing:0.000px;-webkit-text-stroke:0.08px currentColor;">s</div>
<div style="left:935px;top:546px;width:52px;height:16px;background:#c4f0f0;"></div>
<div class="t" style="left:942.50px;top:548.34px;font-size:12px;color:#7a8688;font-weight:normal;letter-spacing:-1.337px;-webkit-text-stroke:0.08px currentColor;">On …e:)</div>
<div style="left:935px;top:563px;width:52px;height:16px;background:#d5cdf0;"></div>
<div class="t" style="left:942.50px;top:565.34px;font-size:12px;color:#202124;font-weight:normal;letter-spacing:-0.951px;-webkit-text-stroke:0.08px currentColor;">con…on</div>
<div style="left:935px;top:580px;width:52px;height:7px;background:#f2c4e4;"></div>
<div style="left:995px;top:410px;width:40px;height:16px;background:repeating-linear-gradient(135deg,#85868c 0 2px,#b5484b 2px 3.8px);"></div>
<svg style="left:1027.0px;top:410px" width="8" height="8" viewBox="0 0 8 8"><path d="M0 0 H8 V8Z" fill="#ff0000"/></svg>
<div class="t" style="left:999.50px;top:412.14px;font-size:12px;color:#5b2e33;font-weight:normal;letter-spacing:0.578px;-webkit-text-stroke:0.08px currentColor;">Task</div>
<div style="left:995px;top:427px;width:40px;height:16px;background:#f9c80e;"></div>
<div class="t" style="left:1002.00px;top:429.34px;font-size:12px;color:#202124;font-weight:normal;letter-spacing:-1.590px;-webkit-text-stroke:0.08px currentColor;">An…d</div>
<div style="left:995px;top:444px;width:40px;height:16px;background:#f9c80e;"></div>
<div class="t" style="left:1002.00px;top:446.34px;font-size:12px;color:#202124;font-weight:normal;letter-spacing:-1.836px;-webkit-text-stroke:0.08px currentColor;">Ru…s</div>
<div style="left:995px;top:461px;width:40px;height:16px;background:#f9c80e;"></div>
<div class="t" style="left:1002.00px;top:463.34px;font-size:12px;color:#202124;font-weight:normal;letter-spacing:-1.469px;-webkit-text-stroke:0.08px currentColor;">Fu…ll</div>
<div style="left:995px;top:478px;width:40px;height:16px;background:linear-gradient(90deg,#6e8f87 0,#6e8f87 1.6px, #c0fbe9 1.6px, #c0fbe9 3.1px, #6e8f87 3.1px,#6e8f87 4.2px, #b5f5e5 4.2px, #b5f5e5 6.1px, #6e8f87 6.1px,#6e8f87 7.7px, #c0fbe9 7.7px, #c0fbe9 8.9px, #6e8f87 8.9px,#6e8f87 10.4px, #c0fbe9 10.4px, #c0fbe9 12.6px, #6e8f87 12.6px,#6e8f87 14.6px, #b5f5e5 14.6px, #b5f5e5 16.6px, #6e8f87 16.6px,#6e8f87 18.6px, #c0fbe9 18.6px, #c0fbe9 19.8px, #6e8f87 19.8px,#6e8f87 22.3px, #c0fbe9 22.3px, #c0fbe9 23.1px, #6e8f87 23.1px,#6e8f87 24.2px, #c0fbe9 24.2px, #c0fbe9 25.2px, #6e8f87 25.2px,#6e8f87 26.7px, #c0fbe9 26.7px, #c0fbe9 27.8px, #6e8f87 27.8px,#6e8f87 30.2px, #b5f5e5 30.2px, #b5f5e5 31.8px, #6e8f87 31.8px,#6e8f87 34.2px, #c0fbe9 34.2px, #c0fbe9 35.8px, #6e8f87 35.8px,#6e8f87 37.2px, #b5f5e5 37.2px, #b5f5e5 38.0px, #6e8f87 38.0px,#6e8f87 39.8px, #c0fbe9 39.8px, #c0fbe9 40.0px, #6e8f87 40.0px,#6e8f87 100%);"></div>
<div style="left:995px;top:495px;width:40px;height:16px;background:linear-gradient(90deg,#6e8f87 0,#6e8f87 3.4px, #b5f5e5 3.4px, #b5f5e5 4.2px, #6e8f87 4.2px,#6e8f87 7.5px, #c0fbe9 7.5px, #c0fbe9 8.6px, #6e8f87 8.6px,#6e8f87 9.5px, #b5f5e5 9.5px, #b5f5e5 10.4px, #6e8f87 10.4px,#6e8f87 13.9px, #b5f5e5 13.9px, #b5f5e5 16.1px, #6e8f87 16.1px,#6e8f87 19.2px, #c0fbe9 19.2px, #c0fbe9 19.9px, #6e8f87 19.9px,#6e8f87 21.9px, #c0fbe9 21.9px, #c0fbe9 23.7px, #6e8f87 23.7px,#6e8f87 27.2px, #b5f5e5 27.2px, #b5f5e5 28.8px, #6e8f87 28.8px,#6e8f87 31.5px, #c0fbe9 31.5px, #c0fbe9 32.6px, #6e8f87 32.6px,#6e8f87 34.8px, #c0fbe9 34.8px, #c0fbe9 36.4px, #6e8f87 36.4px,#6e8f87 39.7px, #b5f5e5 39.7px, #b5f5e5 40.0px, #6e8f87 40.0px,#6e8f87 100%);"></div>
<div style="left:995px;top:512px;width:40px;height:16px;background:linear-gradient(90deg,#967f8c 0,#967f8c 1.6px, #ffc8e6 1.6px, #ffc8e6 2.7px, #967f8c 2.7px,#967f8c 4.5px, #f7b8dc 4.5px, #f7b8dc 5.2px, #967f8c 5.2px,#967f8c 5.8px, #f7b8dc 5.8px, #f7b8dc 6.7px, #967f8c 6.7px,#967f8c 9.4px, #f7b8dc 9.4px, #f7b8dc 10.5px, #967f8c 10.5px,#967f8c 11.5px, #f7b8dc 11.5px, #f7b8dc 13.5px, #967f8c 13.5px,#967f8c 14.8px, #f7b8dc 14.8px, #f7b8dc 15.8px, #967f8c 15.8px,#967f8c 19.0px, #f7b8dc 19.0px, #f7b8dc 21.0px, #967f8c 21.0px,#967f8c 22.0px, #ffc8e6 22.0px, #ffc8e6 23.6px, #967f8c 23.6px,#967f8c 25.2px, #f7b8dc 25.2px, #f7b8dc 26.4px, #967f8c 26.4px,#967f8c 27.0px, #ffc8e6 27.0px, #ffc8e6 27.7px, #967f8c 27.7px,#967f8c 29.9px, #f7b8dc 29.9px, #f7b8dc 31.7px, #967f8c 31.7px,#967f8c 32.1px, #f7b8dc 32.1px, #f7b8dc 34.1px, #967f8c 34.1px,#967f8c 36.3px, #ffc8e6 36.3px, #ffc8e6 38.3px, #967f8c 38.3px,#967f8c 100%);"></div>
<div style="left:995px;top:529px;width:40px;height:16px;background:linear-gradient(90deg,#88906f 0,#88906f 1.9px, #f4f8c0 1.9px, #f4f8c0 3.5px, #88906f 3.5px,#88906f 5.6px, #e9f0b0 5.6px, #e9f0b0 7.3px, #88906f 7.3px,#88906f 10.9px, #e9f0b0 10.9px, #e9f0b0 12.6px, #88906f 12.6px,#88906f 15.2px, #e9f0b0 15.2px, #e9f0b0 17.1px, #88906f 17.1px,#88906f 17.7px, #e9f0b0 17.7px, #e9f0b0 18.9px, #88906f 18.9px,#88906f 21.6px, #e9f0b0 21.6px, #e9f0b0 22.4px, #88906f 22.4px,#88906f 25.7px, #e9f0b0 25.7px, #e9f0b0 26.6px, #88906f 26.6px,#88906f 30.1px, #e9f0b0 30.1px, #e9f0b0 31.1px, #88906f 31.1px,#88906f 31.7px, #f4f8c0 31.7px, #f4f8c0 32.4px, #88906f 32.4px,#88906f 34.0px, #e9f0b0 34.0px, #e9f0b0 35.0px, #88906f 35.0px,#88906f 37.1px, #f4f8c0 37.1px, #f4f8c0 38.3px, #88906f 38.3px,#88906f 100%);"></div>
<div style="left:995px;top:546px;width:40px;height:16px;background:linear-gradient(90deg,#88906f 0,#88906f 1.7px, #e9f0b0 1.7px, #e9f0b0 2.8px, #88906f 2.8px,#88906f 4.6px, #f4f8c0 4.6px, #f4f8c0 6.0px, #88906f 6.0px,#88906f 9.0px, #e9f0b0 9.0px, #e9f0b0 10.3px, #88906f 10.3px,#88906f 10.9px, #f4f8c0 10.9px, #f4f8c0 12.4px, #88906f 12.4px,#88906f 13.4px, #e9f0b0 13.4px, #e9f0b0 14.8px, #88906f 14.8px,#88906f 16.0px, #e9f0b0 16.0px, #e9f0b0 16.8px, #88906f 16.8px,#88906f 19.8px, #e9f0b0 19.8px, #e9f0b0 21.7px, #88906f 21.7px,#88906f 24.3px, #f4f8c0 24.3px, #f4f8c0 25.5px, #88906f 25.5px,#88906f 27.8px, #e9f0b0 27.8px, #e9f0b0 30.0px, #88906f 30.0px,#88906f 31.7px, #e9f0b0 31.7px, #e9f0b0 33.0px, #88906f 33.0px,#88906f 35.8px, #f4f8c0 35.8px, #f4f8c0 37.7px, #88906f 37.7px,#88906f 38.9px, #f4f8c0 38.9px, #f4f8c0 40.0px, #88906f 40.0px,#88906f 100%);"></div>
<div style="left:995px;top:563px;width:40px;height:16px;background:#858a72;"></div>
<div style="left:995px;top:580px;width:40px;height:7px;background:#858a72;"></div>
<div style="left:1037px;top:410px;width:78px;height:16px;background:linear-gradient(90deg,#7a9a90 0,#7a9a90 1.2px, #b5f5e5 1.2px, #b5f5e5 2.8px, #7a9a90 2.8px,#7a9a90 3.8px, #b5f5e5 3.8px, #b5f5e5 4.6px, #7a9a90 4.6px,#7a9a90 5.6px, #b5f5e5 5.6px, #b5f5e5 6.6px, #7a9a90 6.6px,#7a9a90 8.5px, #e0fff8 8.5px, #e0fff8 9.9px, #7a9a90 9.9px,#7a9a90 11.6px, #c8fff0 11.6px, #c8fff0 13.7px, #7a9a90 13.7px,#7a9a90 16.0px, #b5f5e5 16.0px, #b5f5e5 17.2px, #7a9a90 17.2px,#7a9a90 17.6px, #c8fff0 17.6px, #c8fff0 19.2px, #7a9a90 19.2px,#7a9a90 21.2px, #b5f5e5 21.2px, #b5f5e5 22.1px, #7a9a90 22.1px,#7a9a90 23.3px, #c8fff0 23.3px, #c8fff0 25.2px, #7a9a90 25.2px,#7a9a90 28.1px, #e0fff8 28.1px, #e0fff8 30.2px, #7a9a90 30.2px,#7a9a90 30.6px, #b5f5e5 30.6px, #b5f5e5 32.2px, #7a9a90 32.2px,#7a9a90 33.1px, #e0fff8 33.1px, #e0fff8 34.9px, #7a9a90 34.9px,#7a9a90 36.2px, #c8fff0 36.2px, #c8fff0 37.7px, #7a9a90 37.7px,#7a9a90 38.9px, #b5f5e5 38.9px, #b5f5e5 40.2px, #7a9a90 40.2px,#7a9a90 40.7px, #b5f5e5 40.7px, #b5f5e5 41.5px, #7a9a90 41.5px,#7a9a90 42.9px, #e0fff8 42.9px, #e0fff8 44.3px, #7a9a90 44.3px,#7a9a90 46.2px, #b5f5e5 46.2px, #b5f5e5 47.4px, #7a9a90 47.4px,#7a9a90 48.2px, #b5f5e5 48.2px, #b5f5e5 49.8px, #7a9a90 49.8px,#7a9a90 51.7px, #c8fff0 51.7px, #c8fff0 53.0px, #7a9a90 53.0px,#7a9a90 54.0px, #e0fff8 54.0px, #e0fff8 55.7px, #7a9a90 55.7px,#7a9a90 57.7px, #e0fff8 57.7px, #e0fff8 59.3px, #7a9a90 59.3px,#7a9a90 61.6px, #b5f5e5 61.6px, #b5f5e5 62.3px, #7a9a90 62.3px,#7a9a90 63.2px, #e0fff8 63.2px, #e0fff8 64.3px, #7a9a90 64.3px,#7a9a90 66.8px, #b5f5e5 66.8px, #b5f5e5 68.8px, #7a9a90 68.8px,#7a9a90 69.8px, #b5f5e5 69.8px, #b5f5e5 70.6px, #7a9a90 70.6px,#7a9a90 72.3px, #b5f5e5 72.3px, #b5f5e5 73.6px, #7a9a90 73.6px,#7a9a90 76.4px, #e0fff8 76.4px, #e0fff8 77.1px, #7a9a90 77.1px,#7a9a90 100%);"></div>
<div style="left:1037px;top:427px;width:78px;height:16px;background:linear-gradient(90deg,#7f978a 0,#7f978a 0.6px, #b5f5e5 0.6px, #b5f5e5 2.1px, #7f978a 2.1px,#7f978a 3.6px, #e9f0b0 3.6px, #e9f0b0 5.1px, #7f978a 5.1px,#7f978a 6.4px, #c0fbe9 6.4px, #c0fbe9 8.2px, #7f978a 8.2px,#7f978a 9.0px, #c0fbe9 9.0px, #c0fbe9 11.2px, #7f978a 11.2px,#7f978a 12.6px, #c0fbe9 12.6px, #c0fbe9 13.8px, #7f978a 13.8px,#7f978a 14.3px, #e9f0b0 14.3px, #e9f0b0 16.2px, #7f978a 16.2px,#7f978a 19.2px, #e9f0b0 19.2px, #e9f0b0 20.5px, #7f978a 20.5px,#7f978a 21.1px, #b5f5e5 21.1px, #b5f5e5 22.2px, #7f978a 22.2px,#7f978a 25.4px, #e9f0b0 25.4px, #e9f0b0 27.4px, #7f978a 27.4px,#7f978a 28.9px, #e9f0b0 28.9px, #e9f0b0 29.9px, #7f978a 29.9px,#7f978a 32.3px, #e9f0b0 32.3px, #e9f0b0 33.5px, #7f978a 33.5px,#7f978a 36.1px, #e9f0b0 36.1px, #e9f0b0 37.2px, #7f978a 37.2px,#7f978a 40.4px, #b5f5e5 40.4px, #b5f5e5 42.0px, #7f978a 42.0px,#7f978a 43.8px, #b5f5e5 43.8px, #b5f5e5 45.8px, #7f978a 45.8px,#7f978a 46.3px, #e9f0b0 46.3px, #e9f0b0 47.6px, #7f978a 47.6px,#7f978a 48.2px, #e9f0b0 48.2px, #e9f0b0 50.3px, #7f978a 50.3px,#7f978a 50.8px, #b5f5e5 50.8px, #b5f5e5 52.1px, #7f978a 52.1px,#7f978a 55.3px, #c0fbe9 55.3px, #c0fbe9 56.8px, #7f978a 56.8px,#7f978a 59.9px, #b5f5e5 59.9px, #b5f5e5 62.0px, #7f978a 62.0px,#7f978a 62.8px, #c0fbe9 62.8px, #c0fbe9 64.7px, #7f978a 64.7px,#7f978a 68.2px, #e9f0b0 68.2px, #e9f0b0 68.9px, #7f978a 68.9px,#7f978a 70.3px, #b5f5e5 70.3px, #b5f5e5 71.7px, #7f978a 71.7px,#7f978a 73.0px, #e9f0b0 73.0px, #e9f0b0 74.1px, #7f978a 74.1px,#7f978a 75.3px, #c0fbe9 75.3px, #c0fbe9 77.2px, #7f978a 77.2px,#7f978a 100%);"></div>
<div style="left:1037px;top:444px;width:78px;height:16px;background:linear-gradient(90deg,#967f8c 0,#967f8c 1.2px, #b8c8e8 1.2px, #b8c8e8 2.6px, #967f8c 2.6px,#967f8c 3.4px, #f7b8dc 3.4px, #f7b8dc 4.5px, #967f8c 4.5px,#967f8c 6.3px, #f7b8dc 6.3px, #f7b8dc 7.7px, #967f8c 7.7px,#967f8c 9.3px, #ffc8e6 9.3px, #ffc8e6 10.0px, #967f8c 10.0px,#967f8c 12.6px, #ffc8e6 12.6px, #ffc8e6 13.2px, #967f8c 13.2px,#967f8c 15.2px, #ffc8e6 15.2px, #ffc8e6 16.6px, #967f8c 16.6px,#967f8c 17.5px, #ffc8e6 17.5px, #ffc8e6 18.2px, #967f8c 18.2px,#967f8c 20.2px, #b8c8e8 20.2px, #b8c8e8 21.1px, #967f8c 21.1px,#967f8c 23.9px, #ffc8e6 23.9px, #ffc8e6 25.3px, #967f8c 25.3px,#967f8c 28.2px, #f7b8dc 28.2px, #f7b8dc 30.3px, #967f8c 30.3px,#967f8c 30.7px, #ffc8e6 30.7px, #ffc8e6 32.7px, #967f8c 32.7px,#967f8c 35.8px, #f7b8dc 35.8px, #f7b8dc 37.5px, #967f8c 37.5px,#967f8c 39.3px, #ffc8e6 39.3px, #ffc8e6 41.4px, #967f8c 41.4px,#967f8c 42.0px, #f7b8dc 42.0px, #f7b8dc 43.8px, #967f8c 43.8px,#967f8c 46.1px, #b8c8e8 46.1px, #b8c8e8 47.0px, #967f8c 47.0px,#967f8c 47.7px, #ffc8e6 47.7px, #ffc8e6 49.0px, #967f8c 49.0px,#967f8c 51.8px, #ffc8e6 51.8px, #ffc8e6 53.3px, #967f8c 53.3px,#967f8c 56.1px, #ffc8e6 56.1px, #ffc8e6 57.1px, #967f8c 57.1px,#967f8c 57.7px, #f7b8dc 57.7px, #f7b8dc 59.0px, #967f8c 59.0px,#967f8c 61.3px, #ffc8e6 61.3px, #ffc8e6 63.4px, #967f8c 63.4px,#967f8c 65.0px, #ffc8e6 65.0px, #ffc8e6 66.1px, #967f8c 66.1px,#967f8c 66.7px, #f7b8dc 66.7px, #f7b8dc 67.7px, #967f8c 67.7px,#967f8c 70.4px, #ffc8e6 70.4px, #ffc8e6 71.9px, #967f8c 71.9px,#967f8c 74.7px, #b8c8e8 74.7px, #b8c8e8 76.0px, #967f8c 76.0px,#967f8c 77.5px, #b8c8e8 77.5px, #b8c8e8 78.0px, #967f8c 78.0px,#967f8c 100%);"></div>
<div style="left:1037px;top:461px;width:78px;height:16px;background:linear-gradient(90deg,#88906f 0,#88906f 3.1px, #e9f0b0 3.1px, #e9f0b0 4.6px, #88906f 4.6px,#88906f 6.0px, #e9f0b0 6.0px, #e9f0b0 7.8px, #88906f 7.8px,#88906f 11.0px, #f4f8c0 11.0px, #f4f8c0 13.1px, #88906f 13.1px,#88906f 13.9px, #b8b8e0 13.9px, #b8b8e0 15.8px, #88906f 15.8px,#88906f 19.1px, #f4f8c0 19.1px, #f4f8c0 20.4px, #88906f 20.4px,#88906f 21.7px, #b8b8e0 21.7px, #b8b8e0 23.3px, #88906f 23.3px,#88906f 25.3px, #e9f0b0 25.3px, #e9f0b0 26.1px, #88906f 26.1px,#88906f 27.9px, #f4f8c0 27.9px, #f4f8c0 30.0px, #88906f 30.0px,#88906f 31.2px, #b8b8e0 31.2px, #b8b8e0 32.2px, #88906f 32.2px,#88906f 35.4px, #e9f0b0 35.4px, #e9f0b0 36.0px, #88906f 36.0px,#88906f 39.1px, #b8b8e0 39.1px, #b8b8e0 41.2px, #88906f 41.2px,#88906f 41.7px, #f4f8c0 41.7px, #f4f8c0 42.7px, #88906f 42.7px,#88906f 43.2px, #e9f0b0 43.2px, #e9f0b0 43.8px, #88906f 43.8px,#88906f 45.4px, #b8b8e0 45.4px, #b8b8e0 46.9px, #88906f 46.9px,#88906f 48.6px, #b8b8e0 48.6px, #b8b8e0 50.3px, #88906f 50.3px,#88906f 51.2px, #f4f8c0 51.2px, #f4f8c0 53.3px, #88906f 53.3px,#88906f 55.1px, #e9f0b0 55.1px, #e9f0b0 56.7px, #88906f 56.7px,#88906f 57.7px, #f4f8c0 57.7px, #f4f8c0 59.8px, #88906f 59.8px,#88906f 62.9px, #e9f0b0 62.9px, #e9f0b0 63.7px, #88906f 63.7px,#88906f 64.6px, #e9f0b0 64.6px, #e9f0b0 65.7px, #88906f 65.7px,#88906f 67.0px, #f4f8c0 67.0px, #f4f8c0 68.7px, #88906f 68.7px,#88906f 70.7px, #e9f0b0 70.7px, #e9f0b0 71.8px, #88906f 71.8px,#88906f 73.4px, #b8b8e0 73.4px, #b8b8e0 74.2px, #88906f 74.2px,#88906f 77.4px, #f4f8c0 77.4px, #f4f8c0 78.0px, #88906f 78.0px,#88906f 100%);"></div>
<div style="left:1037px;top:478px;width:78px;height:16px;background:linear-gradient(90deg,#88906f 0,#88906f 1.8px, #e9f0b0 1.8px, #e9f0b0 3.1px, #88906f 3.1px,#88906f 5.8px, #b5f5e5 5.8px, #b5f5e5 7.3px, #88906f 7.3px,#88906f 10.6px, #b5f5e5 10.6px, #b5f5e5 12.7px, #88906f 12.7px,#88906f 15.9px, #f4f8c0 15.9px, #f4f8c0 17.6px, #88906f 17.6px,#88906f 18.3px, #e9f0b0 18.3px, #e9f0b0 20.0px, #88906f 20.0px,#88906f 22.8px, #b5f5e5 22.8px, #b5f5e5 23.9px, #88906f 23.9px,#88906f 27.0px, #b5f5e5 27.0px, #b5f5e5 28.2px, #88906f 28.2px,#88906f 30.1px, #f4f8c0 30.1px, #f4f8c0 31.3px, #88906f 31.3px,#88906f 34.9px, #f4f8c0 34.9px, #f4f8c0 36.4px, #88906f 36.4px,#88906f 39.7px, #e9f0b0 39.7px, #e9f0b0 40.7px, #88906f 40.7px,#88906f 43.9px, #b5f5e5 43.9px, #b5f5e5 44.9px, #88906f 44.9px,#88906f 45.9px, #f4f8c0 45.9px, #f4f8c0 47.2px, #88906f 47.2px,#88906f 50.8px, #e9f0b0 50.8px, #e9f0b0 52.5px, #88906f 52.5px,#88906f 53.1px, #e9f0b0 53.1px, #e9f0b0 54.2px, #88906f 54.2px,#88906f 54.8px, #f4f8c0 54.8px, #f4f8c0 56.1px, #88906f 56.1px,#88906f 57.6px, #b5f5e5 57.6px, #b5f5e5 59.3px, #88906f 59.3px,#88906f 62.7px, #b5f5e5 62.7px, #b5f5e5 63.8px, #88906f 63.8px,#88906f 66.3px, #f4f8c0 66.3px, #f4f8c0 68.3px, #88906f 68.3px,#88906f 70.7px, #e9f0b0 70.7px, #e9f0b0 72.4px, #88906f 72.4px,#88906f 75.9px, #f4f8c0 75.9px, #f4f8c0 78.0px, #88906f 78.0px,#88906f 100%);"></div>
<div style="left:1037px;top:495px;width:10px;height:16px;background:#9a9ac0;"></div>
<div style="left:1047px;top:495px;width:68px;height:16px;background:#858a72;"></div>
<div style="left:1037px;top:512px;width:11px;height:16px;background:#70788a;"></div>
<div style="left:1048px;top:512px;width:67px;height:16px;background:#858a72;"></div>
<div style="left:1037px;top:529px;width:13px;height:16px;background:linear-gradient(90deg,#6a7078 0,#6a7078 1.6px, #9a9ac0 1.6px, #9a9ac0 3.7px, #6a7078 3.7px,#6a7078 7.0px, #9a9ac0 7.0px, #9a9ac0 7.7px, #6a7078 7.7px,#6a7078 8.9px, #858a72 8.9px, #858a72 10.7px, #6a7078 10.7px,#6a7078 12.7px, #858a72 12.7px, #858a72 13.0px, #6a7078 13.0px,#6a7078 100%);"></div>
<div style="left:1053px;top:529px;width:4px;height:16px;background:#858a72;"></div>
<div style="left:1098px;top:529px;width:4px;height:16px;background:#8a8aa8;"></div>
<div style="left:1104px;top:529px;width:11px;height:16px;background:#858a72;"></div>
<div style="left:1040px;top:546px;width:1.5px;height:16px;background:#6a7078;"></div>
<div style="left:1040px;top:563px;width:1.5px;height:16px;background:#6a7078;"></div>
<div style="left:1040px;top:580px;width:1.5px;height:7px;background:#6a7078;"></div>
<div style="left:1045px;top:546px;width:1.5px;height:16px;background:#6a7078;"></div>
<div style="left:1045px;top:563px;width:1.5px;height:16px;background:#6a7078;"></div>
<div style="left:1045px;top:580px;width:1.5px;height:7px;background:#6a7078;"></div>
<div style="left:1053px;top:546px;width:1.5px;height:16px;background:#6a7078;"></div>
<div style="left:1053px;top:563px;width:1.5px;height:16px;background:#6a7078;"></div>
<div style="left:1053px;top:580px;width:1.5px;height:7px;background:#6a7078;"></div>
<div style="left:1105px;top:546px;width:10px;height:16px;background:#858a72;"></div>
<div style="left:1112px;top:563px;width:2px;height:16px;background:#858a72;"></div>
<div style="left:1112px;top:580px;width:2px;height:7px;background:#858a72;"></div>
<div style="left:1116px;top:409px;width:11px;height:178px;background:#23252c;"></div>
<div style="left:298px;top:587px;width:829px;height:1px;background:#4a4b52;"></div>
<div style="left:298px;top:588px;width:829px;height:26px;background:#3c3c45;"></div>
<div style="left:298px;top:614px;width:829px;height:1px;background:#4a4b52;"></div>
<div class="t" style="left:308.30px;top:597.27px;font-size:11.5px;color:#d9d9de;font-weight:normal;letter-spacing:0.742px;">Summary</div>
<div class="t" style="left:466.30px;top:597.27px;font-size:11.5px;color:#d9d9de;font-weight:normal;letter-spacing:0.564px;">Call tree</div>
<div class="t" style="left:535.50px;top:597.27px;font-size:11.5px;color:#d9d9de;font-weight:normal;letter-spacing:0.505px;">Event log</div>
<div class="t" style="left:383.30px;top:597.27px;font-size:11.5px;color:#a8b6f8;font-weight:normal;letter-spacing:1.004px;">Bottom-up</div>
<div style="left:373px;top:612.5px;width:83px;height:2.5px;background:#a8b6f8;border-radius:2px 2px 0 0;"></div>
<div style="left:298px;top:615px;width:829px;height:27px;background:#22242c;"></div>
<div class="t" style="left:307.20px;top:622.27px;font-size:11.5px;color:#d9d9de;font-weight:normal;letter-spacing:0.111px;">Aa</div>
<div class="t" style="left:333.50px;top:622.27px;font-size:11.5px;color:#d9d9de;font-weight:normal;letter-spacing:0.414px;">(.*)</div>
<div class="t" style="left:362.00px;top:620.77px;font-size:11.5px;color:#d9d9de;font-weight:normal;letter-spacing:1.102px;">ab</div>
<div style="left:361.5px;top:633px;width:17.5px;height:1.3px;background:#d9d9de;"></div>
<div style="left:361.5px;top:630px;width:1.3px;height:4px;background:#d9d9de;"></div>
<div style="left:377.7px;top:630px;width:1.3px;height:4px;background:#d9d9de;"></div>
<div style="left:387px;top:617.7px;width:120px;height:20px;background:#3a3b41;border-radius:10px;"></div>
<svg style="left:398px;top:622px" width="10" height="11" viewBox="0 0 10 11"><path d="M0.7 0.7 H9.3 L5.8 5 V10.3 L4.2 9 V5 Z" fill="none" stroke="#c4c4ca" stroke-width="1.3" stroke-linejoin="round"/></svg>
<div class="t" style="left:415.00px;top:622.27px;font-size:11.5px;color:#c4c4ca;font-weight:normal;letter-spacing:0.406px;">Filter</div>
<div class="t" style="left:518.20px;top:622.27px;font-size:11.5px;color:#d9d9de;font-weight:normal;letter-spacing:0.577px;">No grouping</div>
<svg style="left:651.5px;top:625.4px" width="8" height="4.5" viewBox="0 0 8 4.5"><path d="M0 0 H8 L4 4.5Z" fill="#9a9ba1"/></svg>
<svg style="left:1101px;top:621px" width="14" height="14" viewBox="0 0 14 14"><rect x="0.75" y="0.75" width="12.5" height="12.5" rx="1.5" fill="none" stroke="#c4c4ca" stroke-width="1.4"/><path d="M9.5 1 V13" stroke="#c4c4ca" stroke-width="1.4"/><path d="M6.8 4.3 L3.8 7 L6.8 9.7Z" fill="#c4c4ca"/></svg>
<div style="left:298px;top:642px;width:829px;height:64px;background:#1c1d22;"></div>
<div style="left:298px;top:641.5px;width:828px;height:1.2px;background:#8e97d8;"></div>
<div style="left:298px;top:642px;width:1.2px;height:64px;background:#8e97d8;"></div>
<div style="left:1125.3px;top:642px;width:1.2px;height:64px;background:#8e97d8;"></div>
<div style="left:299px;top:643px;width:826px;height:20px;background:#202127;"></div>
<div style="left:299px;top:662.5px;width:826px;height:1px;background:#3f4147;"></div>
<div class="t" style="left:303.00px;top:648.27px;font-size:11.5px;color:#d9d9de;font-weight:normal;letter-spacing:0.583px;">Self time</div>
<svg style="left:404.5px;top:650px" width="7" height="6" viewBox="0 0 7 6"><path d="M0 0 H7 L3.5 6Z" fill="#d9d9de"/></svg>
<div class="t" style="left:424.50px;top:648.27px;font-size:11.5px;color:#d9d9de;font-weight:normal;letter-spacing:0.528px;">Total time</div>
<div class="t" style="left:544.40px;top:648.27px;font-size:11.5px;color:#d9d9de;font-weight:normal;letter-spacing:0.585px;">Activity</div>
<div style="left:299px;top:663.5px;width:826px;height:19.5px;background:#464a5a;"></div>
<div style="left:420px;top:663.5px;width:32px;height:19.5px;background:#3d4152;"></div>
<div style="left:299px;top:683px;width:826px;height:23px;background:#1c1d22;"></div>
<div style="left:310px;top:684px;width:109px;height:17px;background:#48442c;"></div>
<div style="left:458.5px;top:684px;width:80.5px;height:17px;background:#48442c;"></div>
<div style="left:310px;top:700.5px;width:109px;height:1.5px;background:#c8860a;"></div>
<div style="left:458.5px;top:700.5px;width:80.5px;height:1.5px;background:#c8860a;"></div>
<div style="left:310px;top:702px;width:109px;height:4px;background:#48442c;"></div>
<div style="left:458.5px;top:702px;width:80.5px;height:4px;background:#48442c;"></div>
<div style="left:419.2px;top:643px;width:1px;height:63px;background:#3f4147;"></div>
<div style="left:539.3px;top:643px;width:1px;height:63px;background:#3f4147;"></div>
<div class="t" style="left:305.00px;top:667.87px;font-size:11.5px;color:#e3e3e6;font-weight:normal;letter-spacing:0.137px;">12,145.1 ms</div>
<div class="t" style="left:376.00px;top:667.87px;font-size:11.5px;color:#e3e3e6;font-weight:normal;letter-spacing:0.498px;">49.7 %</div>
<div class="t" style="left:424.80px;top:667.87px;font-size:11.5px;color:#e3e3e6;font-weight:normal;letter-spacing:0.128px;">12,167.6 ms</div>
<div class="t" style="left:495.30px;top:667.87px;font-size:11.5px;color:#e3e3e6;font-weight:normal;letter-spacing:0.581px;">49.8 %</div>
<div class="t" style="left:305.00px;top:687.87px;font-size:11.5px;color:#e3e3e6;font-weight:normal;letter-spacing:0.215px;">11,206.1 ms</div>
<div class="t" style="left:376.00px;top:687.87px;font-size:11.5px;color:#8d8e94;font-weight:normal;letter-spacing:0.498px;">45.9 %</div>
<div class="t" style="left:424.50px;top:687.87px;font-size:11.5px;color:#e3e3e6;font-weight:normal;letter-spacing:0.147px;">11,206.6 ms…</div>
<svg style="left:546.6px;top:671px" width="8" height="6.5" viewBox="0 0 8 6.5"><path d="M0 0 H8 L4 6.5Z" fill="#e3e3e6"/></svg>
<div style="left:561px;top:668.2px;width:11.8px;height:11.1px;background:#dcedc1;"></div>
<div class="t" style="left:579.20px;top:668.27px;font-size:11.5px;color:#e3e3e6;font-weight:normal;letter-spacing:0.173px;">get11</div>
<svg style="left:561.5px;top:691px" width="8" height="6.5" viewBox="0 0 8 6.5"><path d="M0 0 H8 L4 6.5Z" fill="#e3e3e6"/></svg>
<div style="left:576px;top:688px;width:12px;height:11.5px;background:#dcedc1;"></div>
<div class="t" style="left:594.50px;top:687.77px;font-size:11.5px;color:#e3e3e6;font-weight:normal;letter-spacing:0.489px;">(anonymous)</div>
<div class="t" style="left:871.40px;top:668.27px;font-size:11.5px;color:#e3e3e6;font-weight:normal;letter-spacing:0.601px;text-decoration:underline;">chunk-IZVOQGE6.js?v=0dc53f28:2712:42</div>
<div class="t" style="left:947.20px;top:688.27px;font-size:11.5px;color:#e3e3e6;font-weight:normal;letter-spacing:0.634px;text-decoration:underline;">routePointsSelector.ts:87:64</div>
<svg style="left:0;top:0" width="1127" height="706" viewBox="0 0 1127 706"><polygon points="752,668.8 850.5,680.5 852.7,670.2 882,689.6 847.4,701.5 848.5,691.5 751.5,673" fill="#f6333f" stroke="#f6333f" stroke-width="1.5" stroke-linejoin="round"/></svg>
</body></html>
